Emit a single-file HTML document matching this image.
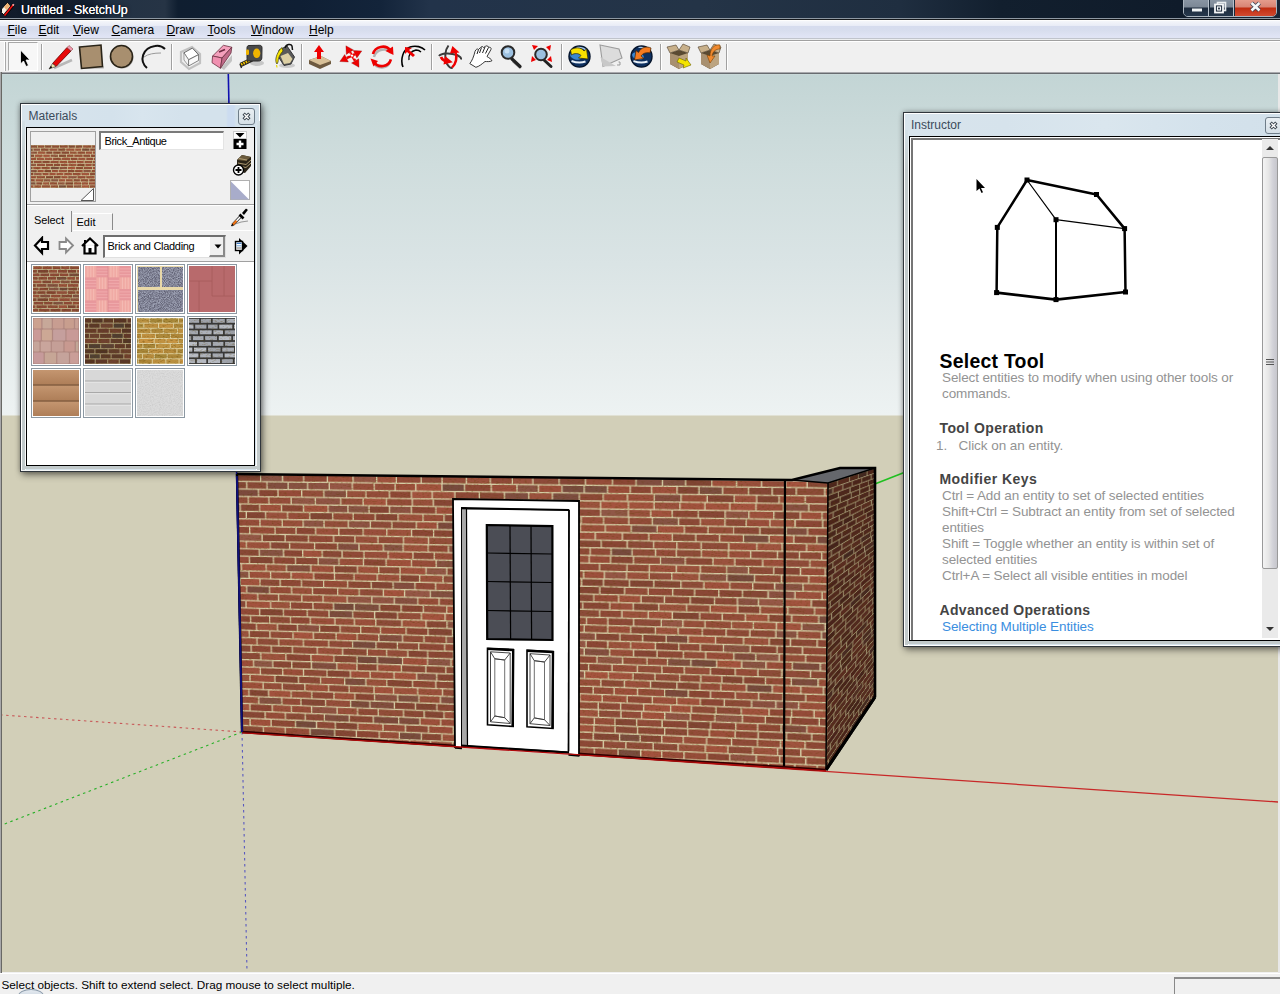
<!DOCTYPE html><html><head><meta charset="utf-8"><style>
*{box-sizing:border-box}
html,body{margin:0;padding:0}
body{width:1280px;height:994px;overflow:hidden;position:relative;background:#f0f0f0;font-family:"Liberation Sans",sans-serif;font-size:12px;color:#000}
.a{position:absolute}
#title{left:0;top:0;width:1280px;height:18px;background:linear-gradient(90deg,#111b2a 0px,#141f30 90px,#233244 112px,#263445 165px,#0f1e30 178px,#0f1f34 300px,#13243a 380px,#22334a 430px,#243447 700px,#1f2e40 900px,#121f2e 1000px,#0f1b2a 1180px,#1a2636 1280px)}
#title .t{left:21px;top:2.5px;font-size:12.4px;color:#fff;text-shadow:0 0 0.6px #fff,0 0 4px rgba(0,0,0,0.8)}
#tline1{left:0;top:18px;width:1280px;height:1px;background:#8e98a2}
#tline2{left:0;top:19px;width:1280px;height:1px;background:#16191c}
#menu{left:0;top:20px;width:1280px;height:18px;background:linear-gradient(#fdfdfd 0px,#fdfdfd 1px,#f4f6fa 1px,#e8ebf6 6px,#d6dcee 6.5px,#d8deee 11px,#dfe3f4 16px,#e0e4f4 18px)}
#menu span{position:absolute;top:3px;font-size:12px;color:#000}
#menu span u{text-decoration:underline;text-underline-offset:0.5px;text-decoration-thickness:1px}
#mline{left:0;top:38px;width:1280px;height:1px;background:#c0c4cc}
#mline2{left:0;top:39px;width:1280px;height:1px;background:#eceef0}
#mline3{left:0;top:40px;width:1280px;height:1px;background:#a0a0a0}
#toolbar{left:0;top:41px;width:1280px;height:31px;background:#f0f0f0;border-top:1px solid #fff}
#vpline{left:0;top:72px;width:1280px;height:2px;background:linear-gradient(#a9a9ad 0px,#a9a9ad 1px,#686c70 1px)}
#vpleft{left:0;top:72px;width:2px;height:901px;background:linear-gradient(90deg,#a8a8aa 0px,#a8a8aa 1px,#686864 1px)}
#vp{left:2px;top:74px;width:1276px;height:898px;background:linear-gradient(#d0dcdc 0px,#c3d5d5 1px,#cfdddd 90px,#dae4e5 190px,#e6ecec 280px,#edf2f2 340px,#eef2f0 341px,#d2cfb8 342px,#d2cfb8 898px)}
#vpright{left:1278px;top:74px;width:2px;height:899px;background:#e8e8e8}
#status{left:0;top:973px;width:1280px;height:21px;background:#f0f0f0;border-top:1px solid #fff}
#status .t{left:1.5px;top:4px;font-size:11.75px;color:#000}
#sbox{left:1174px;top:977px;width:106px;height:17px;border-left:1px solid #888;border-top:2px solid #8c8c8c}
</style></head><body>
<svg width="0" height="0" style="position:absolute"><defs><filter id="nzd" x="0" y="0" width="100%" height="100%"><feTurbulence type="fractalNoise" baseFrequency="0.9" numOctaves="2" seed="5"/><feColorMatrix values="0 0 0 0 0  0 0 0 0 0  0 0 0 0 0  1.1 0 0 0 -0.45"/></filter><filter id="nzl" x="0" y="0" width="100%" height="100%"><feTurbulence type="fractalNoise" baseFrequency="0.7" numOctaves="2" seed="9"/><feColorMatrix values="0 0 0 0 1  0 0 0 0 1  0 0 0 0 1  0 1.1 0 0 -0.55"/></filter><filter id="nzs" x="0" y="0" width="100%" height="100%"><feTurbulence type="fractalNoise" baseFrequency="0.35 1.2" numOctaves="2" seed="2"/><feColorMatrix values="0 0 0 0 0.1  0 0 0 0 0.05  0 0 0 0 0  1.2 0 0 0 -0.6"/></filter></defs></svg><div id="title" class="a"><div class="t a">Untitled - SketchUp</div></div><div id="tline1" class="a"></div><div id="tline2" class="a"></div><div id="menu" class="a"><span style="left:7.5px"><u>F</u>ile</span><span style="left:38.5px"><u>E</u>dit</span><span style="left:73px"><u>V</u>iew</span><span style="left:111.5px"><u>C</u>amera</span><span style="left:166.5px"><u>D</u>raw</span><span style="left:207.5px"><u>T</u>ools</span><span style="left:251px"><u>W</u>indow</span><span style="left:309px"><u>H</u>elp</span></div><div id="mline" class="a"></div><div id="mline2" class="a"></div><div id="mline3" class="a"></div><div id="toolbar" class="a"></div><div id="vpline" class="a"></div><div id="vpleft" class="a"></div><div id="vp" class="a"></div><div id="vpright" class="a"></div><div id="status" class="a"><div class="t a">Select objects. Shift to extend select. Drag mouse to select multiple.</div></div><div id="sbox" class="a"></div><div class="a" style="left:18px;top:989px;width:26px;height:14px;border-radius:50%;border:1px solid #8898a8;background:linear-gradient(#e4eaf0,#c0ccd8)"></div><svg class="a" style="left:0;top:0" width="1280" height="994"><g stroke-width="1.1" fill="none"><line x1="242" y1="732" x2="2" y2="715" stroke="#c85858" stroke-dasharray="2.5,3.5"/><line x1="242" y1="732" x2="2" y2="825" stroke="#28b028" stroke-dasharray="2.5,3.5"/><line x1="242" y1="732" x2="247" y2="972" stroke="#5858c0" stroke-dasharray="2.5,3.5"/><line x1="242" y1="732" x2="1278" y2="802" stroke="#c82828" stroke-width="1.3"/><line x1="242" y1="732" x2="1278" y2="326" stroke="#20c020" stroke-width="1.6"/><line x1="242" y1="732" x2="228.3" y2="74" stroke="#1010b0" stroke-width="1.6"/></g></svg><div class="a" style="left:0;top:0;width:1280px;height:994px;clip-path:polygon(236px 473px,829px 482px,827px 771px,241px 733px)"><div class="a" style="left:0;top:0;width:600px;height:324px;transform-origin:0 0;transform:matrix3d(0.88887979,-0.04572186,0,-0.00011608721,0.027044687,0.91930815,0,4.0509538e-05,0,0,1,0,237,474,0,1)"><svg width="600" height="324" style="position:absolute;left:0;top:0;display:block"><rect width="600" height="324" fill="#d6cea6"/><rect x="-24.7" y="0.7" width="23.0" height="6.9" fill="#a0513e"/><rect x="-0.2" y="0.7" width="25.2" height="6.9" fill="#894837"/><rect x="26.3" y="0.7" width="22.4" height="6.9" fill="#885244"/><rect x="50.2" y="0.7" width="21.2" height="6.9" fill="#8b4636"/><rect x="72.7" y="0.7" width="24.0" height="6.9" fill="#8b4535"/><rect x="98.1" y="0.7" width="25.9" height="6.9" fill="#9e4f3c"/><rect x="125.5" y="0.7" width="23.5" height="6.9" fill="#955646"/><rect x="150.4" y="0.7" width="19.3" height="6.9" fill="#a0533f"/><rect x="171.0" y="0.7" width="24.6" height="6.9" fill="#924a39"/><rect x="197.0" y="0.7" width="20.4" height="6.9" fill="#8c4938"/><rect x="218.8" y="0.7" width="23.8" height="6.9" fill="#934c3a"/><rect x="244.0" y="0.7" width="23.0" height="6.9" fill="#9c523e"/><rect x="268.4" y="0.7" width="21.3" height="6.9" fill="#904938"/><rect x="291.0" y="0.7" width="19.5" height="6.9" fill="#9a513e"/><rect x="311.9" y="0.7" width="25.1" height="6.9" fill="#8e4b3a"/><rect x="338.4" y="0.7" width="25.1" height="6.9" fill="#844535"/><rect x="364.9" y="0.7" width="25.6" height="6.9" fill="#964c3a"/><rect x="391.9" y="0.7" width="21.9" height="6.9" fill="#8c4636"/><rect x="415.2" y="0.7" width="24.6" height="6.9" fill="#804d40"/><rect x="441.2" y="0.7" width="21.4" height="6.9" fill="#815042"/><rect x="464.0" y="0.7" width="24.1" height="6.9" fill="#814535"/><rect x="489.4" y="0.7" width="22.5" height="6.9" fill="#9e4f3c"/><rect x="513.4" y="0.7" width="22.7" height="6.9" fill="#9a503d"/><rect x="537.4" y="0.7" width="21.8" height="6.9" fill="#934b3a"/><rect x="560.6" y="0.7" width="19.0" height="6.9" fill="#a5533f"/><rect x="581.0" y="0.7" width="25.4" height="6.9" fill="#894837"/><rect x="-13.9" y="9.0" width="23.6" height="6.9" fill="#844636"/><rect x="11.2" y="9.0" width="20.5" height="6.9" fill="#894938"/><rect x="33.1" y="9.0" width="21.4" height="6.9" fill="#824e40"/><rect x="55.9" y="9.0" width="19.6" height="6.9" fill="#885243"/><rect x="76.9" y="9.0" width="21.7" height="6.9" fill="#8d5244"/><rect x="100.0" y="9.0" width="23.2" height="6.9" fill="#965646"/><rect x="124.6" y="9.0" width="21.8" height="6.9" fill="#974f3c"/><rect x="147.8" y="9.0" width="20.6" height="6.9" fill="#974e3c"/><rect x="169.8" y="9.0" width="20.1" height="6.9" fill="#9d4f3c"/><rect x="191.4" y="9.0" width="25.8" height="6.9" fill="#a4533f"/><rect x="218.6" y="9.0" width="22.0" height="6.9" fill="#774a3e"/><rect x="242.0" y="9.0" width="25.9" height="6.9" fill="#8e4938"/><rect x="269.4" y="9.0" width="24.9" height="6.9" fill="#9b4e3c"/><rect x="295.7" y="9.0" width="20.3" height="6.9" fill="#8b5445"/><rect x="317.4" y="9.0" width="22.5" height="6.9" fill="#9e4f3c"/><rect x="341.2" y="9.0" width="21.0" height="6.9" fill="#794c3f"/><rect x="363.6" y="9.0" width="22.0" height="6.9" fill="#7a4d40"/><rect x="387.0" y="9.0" width="21.0" height="6.9" fill="#9a4d3a"/><rect x="409.4" y="9.0" width="19.7" height="6.9" fill="#8c4736"/><rect x="430.5" y="9.0" width="23.7" height="6.9" fill="#9f503d"/><rect x="455.6" y="9.0" width="20.0" height="6.9" fill="#824535"/><rect x="477.0" y="9.0" width="21.6" height="6.9" fill="#7c4e40"/><rect x="500.0" y="9.0" width="23.6" height="6.9" fill="#914c3a"/><rect x="525.0" y="9.0" width="21.3" height="6.9" fill="#844636"/><rect x="547.7" y="9.0" width="21.6" height="6.9" fill="#844535"/><rect x="570.7" y="9.0" width="25.6" height="6.9" fill="#8d4b39"/><rect x="597.7" y="9.0" width="25.5" height="6.9" fill="#a2533f"/><rect x="-23.4" y="17.3" width="22.6" height="6.9" fill="#8a4535"/><rect x="0.6" y="17.3" width="21.7" height="6.9" fill="#7c493d"/><rect x="23.7" y="17.3" width="19.7" height="6.9" fill="#884636"/><rect x="44.8" y="17.3" width="24.2" height="6.9" fill="#964b3a"/><rect x="70.4" y="17.3" width="22.3" height="6.9" fill="#934d3b"/><rect x="94.2" y="17.3" width="22.7" height="6.9" fill="#854e40"/><rect x="118.3" y="17.3" width="19.2" height="6.9" fill="#98503d"/><rect x="138.8" y="17.3" width="23.4" height="6.9" fill="#944c3a"/><rect x="163.7" y="17.3" width="21.6" height="6.9" fill="#8e4736"/><rect x="186.7" y="17.3" width="20.2" height="6.9" fill="#a2533f"/><rect x="208.3" y="17.3" width="22.2" height="6.9" fill="#a0533f"/><rect x="231.9" y="17.3" width="23.8" height="6.9" fill="#8d4837"/><rect x="257.1" y="17.3" width="24.4" height="6.9" fill="#8a4837"/><rect x="282.9" y="17.3" width="23.2" height="6.9" fill="#804e41"/><rect x="307.5" y="17.3" width="22.6" height="6.9" fill="#9b523e"/><rect x="331.5" y="17.3" width="25.8" height="6.9" fill="#7d4d40"/><rect x="358.7" y="17.3" width="22.4" height="6.9" fill="#8d4837"/><rect x="382.5" y="17.3" width="22.7" height="6.9" fill="#9b4f3c"/><rect x="406.7" y="17.3" width="25.1" height="6.9" fill="#9b4e3c"/><rect x="433.1" y="17.3" width="25.0" height="6.9" fill="#844d40"/><rect x="459.5" y="17.3" width="24.1" height="6.9" fill="#984e3b"/><rect x="485.0" y="17.3" width="24.7" height="6.9" fill="#834535"/><rect x="511.1" y="17.3" width="20.4" height="6.9" fill="#9d513e"/><rect x="532.9" y="17.3" width="20.0" height="6.9" fill="#834535"/><rect x="554.3" y="17.3" width="23.5" height="6.9" fill="#9a4f3c"/><rect x="579.2" y="17.3" width="23.9" height="6.9" fill="#8e4837"/><rect x="-13.4" y="25.6" width="24.4" height="6.9" fill="#924d3b"/><rect x="12.4" y="25.6" width="21.0" height="6.9" fill="#944b39"/><rect x="34.8" y="25.6" width="22.7" height="6.9" fill="#964e3c"/><rect x="58.9" y="25.6" width="24.7" height="6.9" fill="#925747"/><rect x="85.0" y="25.6" width="25.7" height="6.9" fill="#905445"/><rect x="112.1" y="25.6" width="22.3" height="6.9" fill="#954f3c"/><rect x="135.8" y="25.6" width="23.1" height="6.9" fill="#a5533f"/><rect x="160.3" y="25.6" width="25.8" height="6.9" fill="#944c3a"/><rect x="187.5" y="25.6" width="20.5" height="6.9" fill="#99503d"/><rect x="209.4" y="25.6" width="25.5" height="6.9" fill="#874636"/><rect x="236.2" y="25.6" width="24.7" height="6.9" fill="#8f4a39"/><rect x="262.3" y="25.6" width="25.2" height="6.9" fill="#864f41"/><rect x="288.9" y="25.6" width="22.2" height="6.9" fill="#984d3b"/><rect x="312.5" y="25.6" width="22.5" height="6.9" fill="#844535"/><rect x="336.4" y="25.6" width="19.5" height="6.9" fill="#9a523e"/><rect x="357.2" y="25.6" width="21.4" height="6.9" fill="#9c523e"/><rect x="380.0" y="25.6" width="26.2" height="6.9" fill="#a5533f"/><rect x="407.6" y="25.6" width="24.0" height="6.9" fill="#a4533f"/><rect x="433.0" y="25.6" width="24.0" height="6.9" fill="#9c513e"/><rect x="458.4" y="25.6" width="23.0" height="6.9" fill="#a3523e"/><rect x="482.8" y="25.6" width="22.8" height="6.9" fill="#a3523e"/><rect x="507.0" y="25.6" width="23.8" height="6.9" fill="#a5533f"/><rect x="532.2" y="25.6" width="25.1" height="6.9" fill="#9a4d3b"/><rect x="558.7" y="25.6" width="22.6" height="6.9" fill="#885042"/><rect x="582.7" y="25.6" width="19.0" height="6.9" fill="#8d4b3a"/><rect x="-23.4" y="33.9" width="25.6" height="6.9" fill="#8d5143"/><rect x="3.6" y="33.9" width="19.7" height="6.9" fill="#874837"/><rect x="24.6" y="33.9" width="22.3" height="6.9" fill="#a0523e"/><rect x="48.3" y="33.9" width="22.4" height="6.9" fill="#8a4736"/><rect x="72.2" y="33.9" width="24.9" height="6.9" fill="#a4533f"/><rect x="98.4" y="33.9" width="19.8" height="6.9" fill="#895042"/><rect x="119.6" y="33.9" width="20.9" height="6.9" fill="#895445"/><rect x="141.9" y="33.9" width="20.1" height="6.9" fill="#854535"/><rect x="163.4" y="33.9" width="21.6" height="6.9" fill="#8d5244"/><rect x="186.4" y="33.9" width="24.3" height="6.9" fill="#8c4636"/><rect x="212.0" y="33.9" width="24.2" height="6.9" fill="#9f503d"/><rect x="237.6" y="33.9" width="19.2" height="6.9" fill="#9b4f3c"/><rect x="258.2" y="33.9" width="23.4" height="6.9" fill="#954d3b"/><rect x="283.0" y="33.9" width="22.8" height="6.9" fill="#8f4837"/><rect x="307.2" y="33.9" width="22.9" height="6.9" fill="#954e3b"/><rect x="331.5" y="33.9" width="24.3" height="6.9" fill="#9f523e"/><rect x="357.3" y="33.9" width="21.3" height="6.9" fill="#8e4a39"/><rect x="380.0" y="33.9" width="26.2" height="6.9" fill="#905747"/><rect x="407.5" y="33.9" width="20.7" height="6.9" fill="#99503d"/><rect x="429.7" y="33.9" width="19.7" height="6.9" fill="#a1523e"/><rect x="450.8" y="33.9" width="24.1" height="6.9" fill="#8d4837"/><rect x="476.2" y="33.9" width="24.8" height="6.9" fill="#874636"/><rect x="502.4" y="33.9" width="21.6" height="6.9" fill="#925646"/><rect x="525.4" y="33.9" width="22.6" height="6.9" fill="#9e513e"/><rect x="549.4" y="33.9" width="23.9" height="6.9" fill="#884837"/><rect x="574.7" y="33.9" width="19.2" height="6.9" fill="#a1513e"/><rect x="595.3" y="33.9" width="25.5" height="6.9" fill="#924c3a"/><rect x="-11.6" y="42.2" width="20.2" height="6.9" fill="#8a4837"/><rect x="10.0" y="42.2" width="19.7" height="6.9" fill="#844535"/><rect x="31.1" y="42.2" width="22.3" height="6.9" fill="#9a513e"/><rect x="54.8" y="42.2" width="22.4" height="6.9" fill="#964d3a"/><rect x="78.6" y="42.2" width="23.3" height="6.9" fill="#814535"/><rect x="103.3" y="42.2" width="20.3" height="6.9" fill="#944c3a"/><rect x="125.0" y="42.2" width="21.9" height="6.9" fill="#904837"/><rect x="148.3" y="42.2" width="22.7" height="6.9" fill="#864535"/><rect x="172.4" y="42.2" width="24.8" height="6.9" fill="#9d503d"/><rect x="198.6" y="42.2" width="20.4" height="6.9" fill="#984e3b"/><rect x="220.4" y="42.2" width="20.9" height="6.9" fill="#864636"/><rect x="242.6" y="42.2" width="21.9" height="6.9" fill="#a2533f"/><rect x="265.9" y="42.2" width="24.0" height="6.9" fill="#9f513e"/><rect x="291.3" y="42.2" width="21.9" height="6.9" fill="#8c5445"/><rect x="314.7" y="42.2" width="21.5" height="6.9" fill="#835042"/><rect x="337.5" y="42.2" width="21.6" height="6.9" fill="#905344"/><rect x="360.5" y="42.2" width="21.0" height="6.9" fill="#9a4f3c"/><rect x="382.8" y="42.2" width="23.8" height="6.9" fill="#954e3b"/><rect x="408.0" y="42.2" width="21.8" height="6.9" fill="#934c3a"/><rect x="431.2" y="42.2" width="24.5" height="6.9" fill="#855243"/><rect x="457.1" y="42.2" width="19.8" height="6.9" fill="#8c4938"/><rect x="478.3" y="42.2" width="22.6" height="6.9" fill="#9c513e"/><rect x="502.3" y="42.2" width="19.1" height="6.9" fill="#8d4938"/><rect x="522.8" y="42.2" width="21.5" height="6.9" fill="#9a4d3b"/><rect x="545.6" y="42.2" width="22.7" height="6.9" fill="#9d533f"/><rect x="569.8" y="42.2" width="24.8" height="6.9" fill="#8b4636"/><rect x="596.0" y="42.2" width="24.5" height="6.9" fill="#884535"/><rect x="-23.8" y="50.5" width="22.4" height="6.9" fill="#8d4837"/><rect x="0.0" y="50.5" width="23.3" height="6.9" fill="#954c3a"/><rect x="24.7" y="50.5" width="22.8" height="6.9" fill="#984e3c"/><rect x="48.9" y="50.5" width="21.1" height="6.9" fill="#994f3c"/><rect x="71.4" y="50.5" width="21.0" height="6.9" fill="#8d5445"/><rect x="93.8" y="50.5" width="24.6" height="6.9" fill="#934e3b"/><rect x="119.8" y="50.5" width="21.9" height="6.9" fill="#8e5344"/><rect x="143.1" y="50.5" width="21.3" height="6.9" fill="#8d4b3a"/><rect x="165.8" y="50.5" width="24.2" height="6.9" fill="#8c4a39"/><rect x="191.4" y="50.5" width="20.6" height="6.9" fill="#9f503d"/><rect x="213.4" y="50.5" width="24.4" height="6.9" fill="#7c493d"/><rect x="239.2" y="50.5" width="24.8" height="6.9" fill="#914c3a"/><rect x="265.5" y="50.5" width="24.9" height="6.9" fill="#875244"/><rect x="291.7" y="50.5" width="22.0" height="6.9" fill="#874636"/><rect x="315.2" y="50.5" width="21.6" height="6.9" fill="#864736"/><rect x="338.1" y="50.5" width="20.0" height="6.9" fill="#954c3a"/><rect x="359.5" y="50.5" width="23.6" height="6.9" fill="#9c4f3c"/><rect x="384.5" y="50.5" width="24.4" height="6.9" fill="#9d523e"/><rect x="410.3" y="50.5" width="24.3" height="6.9" fill="#814d40"/><rect x="436.0" y="50.5" width="25.4" height="6.9" fill="#a2523e"/><rect x="462.8" y="50.5" width="21.6" height="6.9" fill="#924938"/><rect x="485.8" y="50.5" width="23.1" height="6.9" fill="#964e3b"/><rect x="510.3" y="50.5" width="24.4" height="6.9" fill="#8a4837"/><rect x="536.1" y="50.5" width="23.7" height="6.9" fill="#874837"/><rect x="561.2" y="50.5" width="19.1" height="6.9" fill="#814d40"/><rect x="581.6" y="50.5" width="19.3" height="6.9" fill="#904938"/><rect x="-13.6" y="58.9" width="25.6" height="6.9" fill="#8e4837"/><rect x="13.4" y="58.9" width="26.1" height="6.9" fill="#974c3a"/><rect x="40.9" y="58.9" width="21.4" height="6.9" fill="#924c3a"/><rect x="63.7" y="58.9" width="19.5" height="6.9" fill="#8b4636"/><rect x="84.6" y="58.9" width="23.5" height="6.9" fill="#9c513e"/><rect x="109.5" y="58.9" width="24.4" height="6.9" fill="#8f4b3a"/><rect x="135.3" y="58.9" width="23.7" height="6.9" fill="#994e3c"/><rect x="160.4" y="58.9" width="24.5" height="6.9" fill="#9d523e"/><rect x="186.3" y="58.9" width="21.7" height="6.9" fill="#8b4636"/><rect x="209.3" y="58.9" width="19.6" height="6.9" fill="#894636"/><rect x="230.3" y="58.9" width="22.5" height="6.9" fill="#9d4f3c"/><rect x="254.2" y="58.9" width="24.6" height="6.9" fill="#874636"/><rect x="280.2" y="58.9" width="23.8" height="6.9" fill="#874636"/><rect x="305.4" y="58.9" width="24.5" height="6.9" fill="#8f4a39"/><rect x="331.3" y="58.9" width="20.6" height="6.9" fill="#9b4f3c"/><rect x="353.2" y="58.9" width="19.8" height="6.9" fill="#9e503d"/><rect x="374.5" y="58.9" width="25.6" height="6.9" fill="#9a4f3c"/><rect x="401.5" y="58.9" width="24.8" height="6.9" fill="#914a38"/><rect x="427.7" y="58.9" width="21.9" height="6.9" fill="#a0503d"/><rect x="450.9" y="58.9" width="21.6" height="6.9" fill="#8c4b39"/><rect x="473.9" y="58.9" width="21.8" height="6.9" fill="#904b3a"/><rect x="497.2" y="58.9" width="21.7" height="6.9" fill="#954b3a"/><rect x="520.2" y="58.9" width="23.3" height="6.9" fill="#7a4c3f"/><rect x="544.9" y="58.9" width="22.3" height="6.9" fill="#a0533f"/><rect x="568.6" y="58.9" width="20.6" height="6.9" fill="#8a4535"/><rect x="590.6" y="58.9" width="21.1" height="6.9" fill="#79493d"/><rect x="-24.9" y="67.2" width="24.7" height="6.9" fill="#7a4a3e"/><rect x="1.1" y="67.2" width="24.3" height="6.9" fill="#945747"/><rect x="26.8" y="67.2" width="23.6" height="6.9" fill="#864736"/><rect x="51.8" y="67.2" width="23.7" height="6.9" fill="#8b4938"/><rect x="76.9" y="67.2" width="25.5" height="6.9" fill="#924a39"/><rect x="103.8" y="67.2" width="21.4" height="6.9" fill="#8d4a39"/><rect x="126.6" y="67.2" width="22.9" height="6.9" fill="#99503d"/><rect x="150.9" y="67.2" width="25.6" height="6.9" fill="#934c3a"/><rect x="177.9" y="67.2" width="24.8" height="6.9" fill="#9c523e"/><rect x="204.1" y="67.2" width="25.9" height="6.9" fill="#954f3c"/><rect x="231.4" y="67.2" width="24.1" height="6.9" fill="#9b523e"/><rect x="256.9" y="67.2" width="22.0" height="6.9" fill="#884736"/><rect x="280.3" y="67.2" width="26.1" height="6.9" fill="#8f4b3a"/><rect x="307.9" y="67.2" width="21.8" height="6.9" fill="#954d3a"/><rect x="331.1" y="67.2" width="25.4" height="6.9" fill="#944c3a"/><rect x="357.9" y="67.2" width="21.2" height="6.9" fill="#874736"/><rect x="380.4" y="67.2" width="24.4" height="6.9" fill="#8a4535"/><rect x="406.3" y="67.2" width="24.8" height="6.9" fill="#8c4a39"/><rect x="432.4" y="67.2" width="21.6" height="6.9" fill="#964e3b"/><rect x="455.4" y="67.2" width="22.4" height="6.9" fill="#944d3a"/><rect x="479.2" y="67.2" width="25.4" height="6.9" fill="#8f4b3a"/><rect x="506.1" y="67.2" width="25.7" height="6.9" fill="#9d4f3c"/><rect x="533.2" y="67.2" width="23.0" height="6.9" fill="#a0533f"/><rect x="557.6" y="67.2" width="21.9" height="6.9" fill="#934a39"/><rect x="580.9" y="67.2" width="19.7" height="6.9" fill="#9f533f"/><rect x="-12.0" y="75.5" width="20.0" height="6.9" fill="#a0523e"/><rect x="9.4" y="75.5" width="24.7" height="6.9" fill="#9d513e"/><rect x="35.5" y="75.5" width="19.4" height="6.9" fill="#884938"/><rect x="56.4" y="75.5" width="25.5" height="6.9" fill="#924c3a"/><rect x="83.3" y="75.5" width="23.4" height="6.9" fill="#8c4837"/><rect x="108.0" y="75.5" width="21.3" height="6.9" fill="#834d40"/><rect x="130.8" y="75.5" width="24.3" height="6.9" fill="#984e3c"/><rect x="156.5" y="75.5" width="19.4" height="6.9" fill="#875243"/><rect x="177.3" y="75.5" width="24.9" height="6.9" fill="#9e533f"/><rect x="203.6" y="75.5" width="19.6" height="6.9" fill="#924938"/><rect x="224.6" y="75.5" width="19.7" height="6.9" fill="#895042"/><rect x="245.7" y="75.5" width="24.4" height="6.9" fill="#9a4d3b"/><rect x="271.5" y="75.5" width="24.7" height="6.9" fill="#914c3a"/><rect x="297.6" y="75.5" width="19.7" height="6.9" fill="#a2523e"/><rect x="318.6" y="75.5" width="22.9" height="6.9" fill="#984d3a"/><rect x="342.9" y="75.5" width="25.0" height="6.9" fill="#8f4a38"/><rect x="369.3" y="75.5" width="19.5" height="6.9" fill="#914a38"/><rect x="390.3" y="75.5" width="19.5" height="6.9" fill="#774a3e"/><rect x="411.1" y="75.5" width="21.8" height="6.9" fill="#904c3a"/><rect x="434.4" y="75.5" width="19.1" height="6.9" fill="#944b3a"/><rect x="454.9" y="75.5" width="23.1" height="6.9" fill="#8f4c3a"/><rect x="479.3" y="75.5" width="25.1" height="6.9" fill="#9b503d"/><rect x="505.8" y="75.5" width="20.1" height="6.9" fill="#9b4f3c"/><rect x="527.3" y="75.5" width="24.4" height="6.9" fill="#914a39"/><rect x="553.1" y="75.5" width="19.6" height="6.9" fill="#8a4837"/><rect x="574.1" y="75.5" width="19.8" height="6.9" fill="#8e4a38"/><rect x="595.3" y="75.5" width="24.2" height="6.9" fill="#924a39"/><rect x="-23.6" y="83.8" width="20.0" height="6.9" fill="#864636"/><rect x="-2.2" y="83.8" width="24.1" height="6.9" fill="#894837"/><rect x="23.3" y="83.8" width="25.0" height="6.9" fill="#865243"/><rect x="49.8" y="83.8" width="19.2" height="6.9" fill="#8a4636"/><rect x="70.4" y="83.8" width="19.5" height="6.9" fill="#a1523e"/><rect x="91.3" y="83.8" width="20.0" height="6.9" fill="#894837"/><rect x="112.7" y="83.8" width="21.8" height="6.9" fill="#914a39"/><rect x="135.9" y="83.8" width="24.2" height="6.9" fill="#994e3c"/><rect x="161.5" y="83.8" width="24.7" height="6.9" fill="#9f4f3c"/><rect x="187.6" y="83.8" width="20.9" height="6.9" fill="#8c4837"/><rect x="209.9" y="83.8" width="22.2" height="6.9" fill="#984d3b"/><rect x="233.5" y="83.8" width="21.4" height="6.9" fill="#8b4a38"/><rect x="256.3" y="83.8" width="20.1" height="6.9" fill="#a1513e"/><rect x="277.8" y="83.8" width="22.9" height="6.9" fill="#954b39"/><rect x="302.2" y="83.8" width="20.0" height="6.9" fill="#9a503d"/><rect x="323.6" y="83.8" width="22.7" height="6.9" fill="#9a503d"/><rect x="347.7" y="83.8" width="19.2" height="6.9" fill="#994f3c"/><rect x="368.3" y="83.8" width="20.0" height="6.9" fill="#994c3a"/><rect x="389.7" y="83.8" width="21.4" height="6.9" fill="#884636"/><rect x="412.5" y="83.8" width="25.4" height="6.9" fill="#914c3a"/><rect x="439.2" y="83.8" width="23.1" height="6.9" fill="#8c5143"/><rect x="463.7" y="83.8" width="25.6" height="6.9" fill="#8b4837"/><rect x="490.7" y="83.8" width="19.9" height="6.9" fill="#9b523e"/><rect x="512.0" y="83.8" width="25.5" height="6.9" fill="#914938"/><rect x="538.9" y="83.8" width="20.2" height="6.9" fill="#9c4e3c"/><rect x="560.4" y="83.8" width="22.3" height="6.9" fill="#8f4b3a"/><rect x="584.1" y="83.8" width="25.7" height="6.9" fill="#984f3c"/><rect x="-13.3" y="92.1" width="24.3" height="6.9" fill="#964b3a"/><rect x="12.4" y="92.1" width="24.8" height="6.9" fill="#834535"/><rect x="38.6" y="92.1" width="22.4" height="6.9" fill="#8d4736"/><rect x="62.4" y="92.1" width="23.1" height="6.9" fill="#8b4837"/><rect x="86.9" y="92.1" width="20.9" height="6.9" fill="#8a5243"/><rect x="109.2" y="92.1" width="24.6" height="6.9" fill="#9a503d"/><rect x="135.2" y="92.1" width="22.6" height="6.9" fill="#8b4636"/><rect x="159.2" y="92.1" width="25.5" height="6.9" fill="#a0503d"/><rect x="186.0" y="92.1" width="24.4" height="6.9" fill="#974c3a"/><rect x="211.8" y="92.1" width="25.2" height="6.9" fill="#865042"/><rect x="238.4" y="92.1" width="19.8" height="6.9" fill="#964d3a"/><rect x="259.6" y="92.1" width="22.1" height="6.9" fill="#9d533f"/><rect x="283.1" y="92.1" width="19.4" height="6.9" fill="#a1503d"/><rect x="303.9" y="92.1" width="24.3" height="6.9" fill="#994e3c"/><rect x="329.6" y="92.1" width="21.2" height="6.9" fill="#944e3b"/><rect x="352.2" y="92.1" width="25.1" height="6.9" fill="#904938"/><rect x="378.7" y="92.1" width="26.0" height="6.9" fill="#914c3a"/><rect x="406.1" y="92.1" width="20.7" height="6.9" fill="#904a38"/><rect x="428.2" y="92.1" width="25.3" height="6.9" fill="#9d503d"/><rect x="454.9" y="92.1" width="22.0" height="6.9" fill="#9c523e"/><rect x="478.4" y="92.1" width="24.4" height="6.9" fill="#944e3b"/><rect x="504.1" y="92.1" width="19.7" height="6.9" fill="#8e5646"/><rect x="525.3" y="92.1" width="22.9" height="6.9" fill="#8f4c3a"/><rect x="549.5" y="92.1" width="24.2" height="6.9" fill="#864535"/><rect x="575.2" y="92.1" width="22.2" height="6.9" fill="#974c3a"/><rect x="598.7" y="92.1" width="21.6" height="6.9" fill="#885243"/><rect x="-23.4" y="100.4" width="25.5" height="6.9" fill="#8f4a38"/><rect x="3.5" y="100.4" width="25.7" height="6.9" fill="#a0513e"/><rect x="30.6" y="100.4" width="20.5" height="6.9" fill="#9c533f"/><rect x="52.5" y="100.4" width="25.0" height="6.9" fill="#854f41"/><rect x="78.9" y="100.4" width="23.6" height="6.9" fill="#9f503d"/><rect x="103.9" y="100.4" width="23.6" height="6.9" fill="#874837"/><rect x="128.8" y="100.4" width="21.2" height="6.9" fill="#a0523e"/><rect x="151.4" y="100.4" width="21.0" height="6.9" fill="#904c3a"/><rect x="173.8" y="100.4" width="25.9" height="6.9" fill="#a0513e"/><rect x="201.1" y="100.4" width="20.2" height="6.9" fill="#925747"/><rect x="222.7" y="100.4" width="24.0" height="6.9" fill="#8b4938"/><rect x="248.1" y="100.4" width="22.6" height="6.9" fill="#8e4a38"/><rect x="272.1" y="100.4" width="23.8" height="6.9" fill="#9e533f"/><rect x="297.3" y="100.4" width="20.6" height="6.9" fill="#8c4a38"/><rect x="319.3" y="100.4" width="21.0" height="6.9" fill="#964f3c"/><rect x="341.7" y="100.4" width="19.5" height="6.9" fill="#924d3a"/><rect x="362.7" y="100.4" width="19.3" height="6.9" fill="#9d4e3c"/><rect x="383.4" y="100.4" width="20.8" height="6.9" fill="#955646"/><rect x="405.6" y="100.4" width="21.1" height="6.9" fill="#9c513e"/><rect x="428.0" y="100.4" width="21.0" height="6.9" fill="#924d3b"/><rect x="450.4" y="100.4" width="25.5" height="6.9" fill="#9d533f"/><rect x="477.3" y="100.4" width="25.6" height="6.9" fill="#8b5243"/><rect x="504.3" y="100.4" width="25.4" height="6.9" fill="#76493d"/><rect x="531.1" y="100.4" width="24.6" height="6.9" fill="#914b39"/><rect x="557.1" y="100.4" width="24.6" height="6.9" fill="#954d3a"/><rect x="583.2" y="100.4" width="25.1" height="6.9" fill="#9e4f3c"/><rect x="-12.9" y="108.7" width="23.3" height="6.9" fill="#8d5546"/><rect x="11.8" y="108.7" width="22.1" height="6.9" fill="#9d4f3c"/><rect x="35.3" y="108.7" width="20.8" height="6.9" fill="#9a503d"/><rect x="57.6" y="108.7" width="22.9" height="6.9" fill="#a5533f"/><rect x="81.9" y="108.7" width="20.9" height="6.9" fill="#904837"/><rect x="104.2" y="108.7" width="19.4" height="6.9" fill="#914c3a"/><rect x="124.9" y="108.7" width="23.4" height="6.9" fill="#9b4e3c"/><rect x="149.7" y="108.7" width="22.6" height="6.9" fill="#9c503d"/><rect x="173.7" y="108.7" width="19.2" height="6.9" fill="#864636"/><rect x="194.4" y="108.7" width="22.9" height="6.9" fill="#9d523e"/><rect x="218.7" y="108.7" width="19.4" height="6.9" fill="#8e4c3a"/><rect x="239.5" y="108.7" width="24.9" height="6.9" fill="#a0503d"/><rect x="265.8" y="108.7" width="24.5" height="6.9" fill="#914c3a"/><rect x="291.7" y="108.7" width="22.7" height="6.9" fill="#914b3a"/><rect x="315.8" y="108.7" width="22.6" height="6.9" fill="#9f4f3c"/><rect x="339.7" y="108.7" width="19.4" height="6.9" fill="#954c3a"/><rect x="360.6" y="108.7" width="20.6" height="6.9" fill="#844535"/><rect x="382.5" y="108.7" width="24.5" height="6.9" fill="#874736"/><rect x="408.4" y="108.7" width="22.8" height="6.9" fill="#824535"/><rect x="432.6" y="108.7" width="25.4" height="6.9" fill="#864736"/><rect x="459.4" y="108.7" width="21.1" height="6.9" fill="#8f4c3a"/><rect x="481.9" y="108.7" width="23.9" height="6.9" fill="#a0503d"/><rect x="507.2" y="108.7" width="20.8" height="6.9" fill="#954d3b"/><rect x="529.4" y="108.7" width="19.6" height="6.9" fill="#8d4938"/><rect x="550.5" y="108.7" width="25.8" height="6.9" fill="#895244"/><rect x="577.7" y="108.7" width="21.9" height="6.9" fill="#954f3c"/><rect x="-25.0" y="117.0" width="25.6" height="6.9" fill="#a6533f"/><rect x="2.0" y="117.0" width="20.3" height="6.9" fill="#a2533f"/><rect x="23.6" y="117.0" width="20.5" height="6.9" fill="#8d4b3a"/><rect x="45.6" y="117.0" width="21.5" height="6.9" fill="#8e4837"/><rect x="68.5" y="117.0" width="22.5" height="6.9" fill="#904b3a"/><rect x="92.3" y="117.0" width="24.5" height="6.9" fill="#974c3a"/><rect x="118.2" y="117.0" width="23.5" height="6.9" fill="#8d4837"/><rect x="143.1" y="117.0" width="21.8" height="6.9" fill="#834636"/><rect x="166.3" y="117.0" width="21.6" height="6.9" fill="#844d40"/><rect x="189.3" y="117.0" width="20.3" height="6.9" fill="#914938"/><rect x="211.0" y="117.0" width="25.6" height="6.9" fill="#9a503d"/><rect x="238.0" y="117.0" width="21.6" height="6.9" fill="#7c4b3e"/><rect x="261.0" y="117.0" width="20.7" height="6.9" fill="#8e5646"/><rect x="283.2" y="117.0" width="21.3" height="6.9" fill="#864f42"/><rect x="305.9" y="117.0" width="25.4" height="6.9" fill="#8f4a39"/><rect x="332.7" y="117.0" width="22.7" height="6.9" fill="#864535"/><rect x="356.8" y="117.0" width="20.7" height="6.9" fill="#854535"/><rect x="378.9" y="117.0" width="23.3" height="6.9" fill="#854535"/><rect x="403.6" y="117.0" width="22.1" height="6.9" fill="#944d3b"/><rect x="427.0" y="117.0" width="22.9" height="6.9" fill="#924a39"/><rect x="451.4" y="117.0" width="20.1" height="6.9" fill="#8b4837"/><rect x="472.9" y="117.0" width="22.2" height="6.9" fill="#8b4736"/><rect x="496.5" y="117.0" width="21.6" height="6.9" fill="#884636"/><rect x="519.4" y="117.0" width="23.4" height="6.9" fill="#854736"/><rect x="544.3" y="117.0" width="24.4" height="6.9" fill="#8b5042"/><rect x="570.0" y="117.0" width="24.5" height="6.9" fill="#9c503d"/><rect x="595.9" y="117.0" width="19.5" height="6.9" fill="#9f533f"/><rect x="-12.4" y="125.3" width="19.9" height="6.9" fill="#9e513e"/><rect x="8.9" y="125.3" width="23.6" height="6.9" fill="#7b4a3e"/><rect x="33.9" y="125.3" width="22.5" height="6.9" fill="#964c3a"/><rect x="57.8" y="125.3" width="21.0" height="6.9" fill="#9b503d"/><rect x="80.3" y="125.3" width="25.7" height="6.9" fill="#8e4837"/><rect x="107.3" y="125.3" width="21.5" height="6.9" fill="#9a503d"/><rect x="130.3" y="125.3" width="24.3" height="6.9" fill="#904c3a"/><rect x="156.0" y="125.3" width="20.9" height="6.9" fill="#a4533f"/><rect x="178.3" y="125.3" width="25.6" height="6.9" fill="#955747"/><rect x="205.2" y="125.3" width="25.5" height="6.9" fill="#834f42"/><rect x="232.2" y="125.3" width="22.6" height="6.9" fill="#974e3b"/><rect x="256.2" y="125.3" width="21.3" height="6.9" fill="#7c4d40"/><rect x="278.9" y="125.3" width="21.5" height="6.9" fill="#a2533f"/><rect x="301.8" y="125.3" width="20.9" height="6.9" fill="#984f3c"/><rect x="324.1" y="125.3" width="21.8" height="6.9" fill="#824e41"/><rect x="347.3" y="125.3" width="24.1" height="6.9" fill="#884837"/><rect x="372.7" y="125.3" width="23.5" height="6.9" fill="#974c3a"/><rect x="397.6" y="125.3" width="21.0" height="6.9" fill="#a2523e"/><rect x="420.0" y="125.3" width="21.7" height="6.9" fill="#8d4b3a"/><rect x="443.2" y="125.3" width="23.9" height="6.9" fill="#8d4938"/><rect x="468.5" y="125.3" width="22.4" height="6.9" fill="#834535"/><rect x="492.3" y="125.3" width="20.9" height="6.9" fill="#8c4938"/><rect x="514.6" y="125.3" width="19.0" height="6.9" fill="#8a5143"/><rect x="535.0" y="125.3" width="22.9" height="6.9" fill="#965747"/><rect x="559.4" y="125.3" width="24.9" height="6.9" fill="#a2533f"/><rect x="585.7" y="125.3" width="19.7" height="6.9" fill="#864535"/><rect x="-23.9" y="133.6" width="21.9" height="6.9" fill="#894837"/><rect x="-0.7" y="133.6" width="20.1" height="6.9" fill="#9b4e3c"/><rect x="20.9" y="133.6" width="21.1" height="6.9" fill="#924c3a"/><rect x="43.4" y="133.6" width="23.8" height="6.9" fill="#934c3a"/><rect x="68.6" y="133.6" width="21.6" height="6.9" fill="#99503d"/><rect x="91.6" y="133.6" width="24.3" height="6.9" fill="#9e533f"/><rect x="117.3" y="133.6" width="24.9" height="6.9" fill="#935747"/><rect x="143.6" y="133.6" width="22.3" height="6.9" fill="#925546"/><rect x="167.3" y="133.6" width="23.5" height="6.9" fill="#875042"/><rect x="192.1" y="133.6" width="20.8" height="6.9" fill="#974d3a"/><rect x="214.4" y="133.6" width="23.6" height="6.9" fill="#914b39"/><rect x="239.3" y="133.6" width="25.2" height="6.9" fill="#904837"/><rect x="265.9" y="133.6" width="23.1" height="6.9" fill="#904c3a"/><rect x="290.4" y="133.6" width="25.0" height="6.9" fill="#8e5646"/><rect x="316.8" y="133.6" width="21.7" height="6.9" fill="#9a4f3c"/><rect x="339.9" y="133.6" width="20.3" height="6.9" fill="#884535"/><rect x="361.6" y="133.6" width="25.8" height="6.9" fill="#894736"/><rect x="388.8" y="133.6" width="22.0" height="6.9" fill="#9b4f3c"/><rect x="412.2" y="133.6" width="23.9" height="6.9" fill="#854736"/><rect x="437.5" y="133.6" width="26.2" height="6.9" fill="#9c533f"/><rect x="465.1" y="133.6" width="21.6" height="6.9" fill="#934d3b"/><rect x="488.0" y="133.6" width="25.5" height="6.9" fill="#a3523e"/><rect x="515.0" y="133.6" width="20.2" height="6.9" fill="#874636"/><rect x="536.6" y="133.6" width="25.3" height="6.9" fill="#994f3c"/><rect x="563.3" y="133.6" width="24.2" height="6.9" fill="#904c3a"/><rect x="588.8" y="133.6" width="21.8" height="6.9" fill="#9a503d"/><rect x="-13.7" y="141.9" width="20.1" height="6.9" fill="#874837"/><rect x="7.8" y="141.9" width="25.5" height="6.9" fill="#a4533f"/><rect x="34.6" y="141.9" width="20.1" height="6.9" fill="#9d533f"/><rect x="56.1" y="141.9" width="23.1" height="6.9" fill="#8f4938"/><rect x="80.6" y="141.9" width="20.6" height="6.9" fill="#934c3a"/><rect x="102.6" y="141.9" width="20.9" height="6.9" fill="#76493d"/><rect x="124.9" y="141.9" width="25.4" height="6.9" fill="#7d4e40"/><rect x="151.7" y="141.9" width="21.4" height="6.9" fill="#884736"/><rect x="174.6" y="141.9" width="21.9" height="6.9" fill="#884535"/><rect x="197.9" y="141.9" width="23.0" height="6.9" fill="#924d3b"/><rect x="222.3" y="141.9" width="23.4" height="6.9" fill="#a4523e"/><rect x="247.2" y="141.9" width="20.4" height="6.9" fill="#8d4a38"/><rect x="268.9" y="141.9" width="22.2" height="6.9" fill="#9b523e"/><rect x="292.5" y="141.9" width="19.2" height="6.9" fill="#804c3f"/><rect x="313.1" y="141.9" width="19.5" height="6.9" fill="#8c4b39"/><rect x="334.1" y="141.9" width="21.2" height="6.9" fill="#8a5142"/><rect x="356.7" y="141.9" width="20.5" height="6.9" fill="#8c4b39"/><rect x="378.6" y="141.9" width="20.9" height="6.9" fill="#8f4938"/><rect x="400.9" y="141.9" width="24.8" height="6.9" fill="#9c523e"/><rect x="427.1" y="141.9" width="22.5" height="6.9" fill="#a1523e"/><rect x="451.0" y="141.9" width="25.5" height="6.9" fill="#814535"/><rect x="477.9" y="141.9" width="20.6" height="6.9" fill="#924b3a"/><rect x="499.9" y="141.9" width="21.0" height="6.9" fill="#934b39"/><rect x="522.3" y="141.9" width="21.0" height="6.9" fill="#a2533f"/><rect x="544.7" y="141.9" width="20.9" height="6.9" fill="#894837"/><rect x="567.1" y="141.9" width="24.4" height="6.9" fill="#964d3b"/><rect x="592.8" y="141.9" width="20.3" height="6.9" fill="#784a3e"/><rect x="-24.4" y="150.2" width="22.1" height="6.9" fill="#874535"/><rect x="-0.8" y="150.2" width="21.9" height="6.9" fill="#934a39"/><rect x="22.5" y="150.2" width="24.5" height="6.9" fill="#834535"/><rect x="48.3" y="150.2" width="24.4" height="6.9" fill="#8d4636"/><rect x="74.2" y="150.2" width="22.1" height="6.9" fill="#8f4938"/><rect x="97.7" y="150.2" width="24.1" height="6.9" fill="#7c4c3f"/><rect x="123.1" y="150.2" width="21.8" height="6.9" fill="#8d4a39"/><rect x="146.4" y="150.2" width="22.8" height="6.9" fill="#834535"/><rect x="170.5" y="150.2" width="23.8" height="6.9" fill="#954f3c"/><rect x="195.7" y="150.2" width="23.4" height="6.9" fill="#a4533f"/><rect x="220.5" y="150.2" width="23.5" height="6.9" fill="#9a4d3a"/><rect x="245.5" y="150.2" width="19.9" height="6.9" fill="#9f503d"/><rect x="266.7" y="150.2" width="22.4" height="6.9" fill="#a1523e"/><rect x="290.5" y="150.2" width="21.7" height="6.9" fill="#8d5143"/><rect x="313.6" y="150.2" width="25.6" height="6.9" fill="#984d3a"/><rect x="340.6" y="150.2" width="23.3" height="6.9" fill="#944e3c"/><rect x="365.3" y="150.2" width="20.1" height="6.9" fill="#944c3a"/><rect x="386.8" y="150.2" width="24.3" height="6.9" fill="#8e4a39"/><rect x="412.5" y="150.2" width="26.1" height="6.9" fill="#8d4b3a"/><rect x="440.0" y="150.2" width="19.9" height="6.9" fill="#965747"/><rect x="461.4" y="150.2" width="20.3" height="6.9" fill="#974f3c"/><rect x="483.1" y="150.2" width="24.7" height="6.9" fill="#954d3a"/><rect x="509.2" y="150.2" width="19.5" height="6.9" fill="#9c533f"/><rect x="530.1" y="150.2" width="20.8" height="6.9" fill="#9f523e"/><rect x="552.3" y="150.2" width="22.9" height="6.9" fill="#a2533f"/><rect x="576.6" y="150.2" width="21.0" height="6.9" fill="#8a5344"/><rect x="599.0" y="150.2" width="23.0" height="6.9" fill="#a1523e"/><rect x="-11.5" y="158.5" width="22.6" height="6.9" fill="#8a4535"/><rect x="12.5" y="158.5" width="19.5" height="6.9" fill="#8a4736"/><rect x="33.3" y="158.5" width="21.4" height="6.9" fill="#8f4b39"/><rect x="56.1" y="158.5" width="19.8" height="6.9" fill="#8f4837"/><rect x="77.4" y="158.5" width="25.1" height="6.9" fill="#9b4e3c"/><rect x="103.9" y="158.5" width="19.5" height="6.9" fill="#984f3c"/><rect x="124.8" y="158.5" width="21.3" height="6.9" fill="#9b503d"/><rect x="147.5" y="158.5" width="26.2" height="6.9" fill="#8d4b3a"/><rect x="175.1" y="158.5" width="24.0" height="6.9" fill="#a0533f"/><rect x="200.5" y="158.5" width="20.5" height="6.9" fill="#894837"/><rect x="222.4" y="158.5" width="20.2" height="6.9" fill="#8c5243"/><rect x="244.0" y="158.5" width="21.0" height="6.9" fill="#8e4938"/><rect x="266.4" y="158.5" width="21.6" height="6.9" fill="#874837"/><rect x="289.4" y="158.5" width="24.0" height="6.9" fill="#9d503d"/><rect x="314.8" y="158.5" width="24.5" height="6.9" fill="#7b4c3f"/><rect x="340.7" y="158.5" width="20.9" height="6.9" fill="#954b39"/><rect x="363.0" y="158.5" width="22.3" height="6.9" fill="#924d3a"/><rect x="386.7" y="158.5" width="21.5" height="6.9" fill="#9d503d"/><rect x="409.6" y="158.5" width="23.2" height="6.9" fill="#8b4a38"/><rect x="434.2" y="158.5" width="21.1" height="6.9" fill="#9d533f"/><rect x="456.7" y="158.5" width="22.3" height="6.9" fill="#964c3a"/><rect x="480.3" y="158.5" width="22.0" height="6.9" fill="#8f4938"/><rect x="503.7" y="158.5" width="21.6" height="6.9" fill="#8f4a39"/><rect x="526.8" y="158.5" width="23.7" height="6.9" fill="#8d4938"/><rect x="551.9" y="158.5" width="19.1" height="6.9" fill="#895244"/><rect x="572.4" y="158.5" width="21.7" height="6.9" fill="#974e3b"/><rect x="595.5" y="158.5" width="21.0" height="6.9" fill="#7f4a3e"/><rect x="-25.3" y="166.9" width="22.3" height="6.9" fill="#884837"/><rect x="-1.6" y="166.9" width="19.1" height="6.9" fill="#8a4535"/><rect x="18.9" y="166.9" width="21.5" height="6.9" fill="#9d533f"/><rect x="41.8" y="166.9" width="20.1" height="6.9" fill="#884636"/><rect x="63.3" y="166.9" width="22.6" height="6.9" fill="#8b5042"/><rect x="87.3" y="166.9" width="20.6" height="6.9" fill="#874535"/><rect x="109.3" y="166.9" width="20.7" height="6.9" fill="#934d3b"/><rect x="131.4" y="166.9" width="19.5" height="6.9" fill="#954c3a"/><rect x="152.3" y="166.9" width="25.7" height="6.9" fill="#9a4d3a"/><rect x="179.4" y="166.9" width="21.7" height="6.9" fill="#8d4736"/><rect x="202.5" y="166.9" width="24.3" height="6.9" fill="#834636"/><rect x="228.2" y="166.9" width="23.7" height="6.9" fill="#984e3c"/><rect x="253.3" y="166.9" width="26.0" height="6.9" fill="#914c3a"/><rect x="280.7" y="166.9" width="20.1" height="6.9" fill="#914b39"/><rect x="302.2" y="166.9" width="25.4" height="6.9" fill="#824535"/><rect x="329.0" y="166.9" width="22.9" height="6.9" fill="#934d3b"/><rect x="353.3" y="166.9" width="19.7" height="6.9" fill="#8c5142"/><rect x="374.4" y="166.9" width="23.1" height="6.9" fill="#864736"/><rect x="398.8" y="166.9" width="21.2" height="6.9" fill="#8f4b39"/><rect x="421.5" y="166.9" width="22.0" height="6.9" fill="#854535"/><rect x="444.8" y="166.9" width="20.2" height="6.9" fill="#7d4a3e"/><rect x="466.5" y="166.9" width="25.5" height="6.9" fill="#a2523e"/><rect x="493.3" y="166.9" width="26.0" height="6.9" fill="#934d3a"/><rect x="520.7" y="166.9" width="23.4" height="6.9" fill="#9d533f"/><rect x="545.5" y="166.9" width="19.1" height="6.9" fill="#864736"/><rect x="566.0" y="166.9" width="24.1" height="6.9" fill="#8a4837"/><rect x="591.5" y="166.9" width="19.2" height="6.9" fill="#8b4636"/><rect x="-14.2" y="175.2" width="23.6" height="6.9" fill="#9c533f"/><rect x="10.8" y="175.2" width="21.2" height="6.9" fill="#8b4837"/><rect x="33.4" y="175.2" width="23.7" height="6.9" fill="#934c3a"/><rect x="58.5" y="175.2" width="20.5" height="6.9" fill="#a5533f"/><rect x="80.4" y="175.2" width="23.1" height="6.9" fill="#924d3a"/><rect x="104.9" y="175.2" width="21.2" height="6.9" fill="#a1503d"/><rect x="127.4" y="175.2" width="21.6" height="6.9" fill="#954c3a"/><rect x="150.5" y="175.2" width="23.7" height="6.9" fill="#844e41"/><rect x="175.5" y="175.2" width="21.2" height="6.9" fill="#914d3a"/><rect x="198.2" y="175.2" width="21.8" height="6.9" fill="#914a39"/><rect x="221.3" y="175.2" width="23.9" height="6.9" fill="#8e5445"/><rect x="246.6" y="175.2" width="21.6" height="6.9" fill="#904938"/><rect x="269.6" y="175.2" width="22.5" height="6.9" fill="#864535"/><rect x="293.5" y="175.2" width="26.0" height="6.9" fill="#8a4535"/><rect x="320.9" y="175.2" width="20.8" height="6.9" fill="#994e3c"/><rect x="343.0" y="175.2" width="20.5" height="6.9" fill="#945546"/><rect x="364.9" y="175.2" width="20.3" height="6.9" fill="#8c4636"/><rect x="386.7" y="175.2" width="21.5" height="6.9" fill="#9d533f"/><rect x="409.5" y="175.2" width="23.2" height="6.9" fill="#a0523e"/><rect x="434.2" y="175.2" width="21.7" height="6.9" fill="#874636"/><rect x="457.3" y="175.2" width="19.7" height="6.9" fill="#904b3a"/><rect x="478.4" y="175.2" width="21.4" height="6.9" fill="#8d4a39"/><rect x="501.1" y="175.2" width="24.7" height="6.9" fill="#8b5344"/><rect x="527.2" y="175.2" width="24.5" height="6.9" fill="#884535"/><rect x="553.1" y="175.2" width="23.0" height="6.9" fill="#8b4a39"/><rect x="577.5" y="175.2" width="23.9" height="6.9" fill="#904837"/><rect x="-25.8" y="183.5" width="22.5" height="6.9" fill="#8c4a39"/><rect x="-1.9" y="183.5" width="19.6" height="6.9" fill="#984f3c"/><rect x="19.1" y="183.5" width="22.2" height="6.9" fill="#8f4c3a"/><rect x="42.7" y="183.5" width="25.5" height="6.9" fill="#99503d"/><rect x="69.6" y="183.5" width="25.9" height="6.9" fill="#944b39"/><rect x="96.9" y="183.5" width="24.1" height="6.9" fill="#914b3a"/><rect x="122.3" y="183.5" width="23.7" height="6.9" fill="#794a3e"/><rect x="147.4" y="183.5" width="21.3" height="6.9" fill="#864736"/><rect x="170.1" y="183.5" width="21.0" height="6.9" fill="#8e4c3a"/><rect x="192.5" y="183.5" width="25.7" height="6.9" fill="#8e4837"/><rect x="219.6" y="183.5" width="24.0" height="6.9" fill="#954b3a"/><rect x="245.0" y="183.5" width="19.8" height="6.9" fill="#9a503d"/><rect x="266.1" y="183.5" width="21.3" height="6.9" fill="#864535"/><rect x="288.9" y="183.5" width="23.7" height="6.9" fill="#964b3a"/><rect x="314.0" y="183.5" width="23.9" height="6.9" fill="#984c3a"/><rect x="339.3" y="183.5" width="22.3" height="6.9" fill="#945546"/><rect x="363.0" y="183.5" width="24.1" height="6.9" fill="#844f42"/><rect x="388.5" y="183.5" width="22.5" height="6.9" fill="#994f3c"/><rect x="412.4" y="183.5" width="22.0" height="6.9" fill="#864535"/><rect x="435.8" y="183.5" width="24.8" height="6.9" fill="#8f4938"/><rect x="461.9" y="183.5" width="20.5" height="6.9" fill="#954e3c"/><rect x="483.9" y="183.5" width="26.0" height="6.9" fill="#984d3a"/><rect x="511.3" y="183.5" width="19.8" height="6.9" fill="#814c3f"/><rect x="532.6" y="183.5" width="21.2" height="6.9" fill="#905747"/><rect x="555.2" y="183.5" width="24.0" height="6.9" fill="#954e3b"/><rect x="580.6" y="183.5" width="21.4" height="6.9" fill="#8c4736"/><rect x="-13.6" y="191.8" width="24.8" height="6.9" fill="#874636"/><rect x="12.6" y="191.8" width="20.6" height="6.9" fill="#8f4837"/><rect x="34.6" y="191.8" width="21.5" height="6.9" fill="#894837"/><rect x="57.5" y="191.8" width="25.5" height="6.9" fill="#914b39"/><rect x="84.3" y="191.8" width="25.8" height="6.9" fill="#9b503d"/><rect x="111.6" y="191.8" width="25.0" height="6.9" fill="#8a4938"/><rect x="138.0" y="191.8" width="19.1" height="6.9" fill="#964d3b"/><rect x="158.5" y="191.8" width="21.1" height="6.9" fill="#944d3b"/><rect x="181.0" y="191.8" width="19.5" height="6.9" fill="#854535"/><rect x="201.9" y="191.8" width="25.8" height="6.9" fill="#8b4736"/><rect x="229.1" y="191.8" width="25.2" height="6.9" fill="#9e533f"/><rect x="255.7" y="191.8" width="22.9" height="6.9" fill="#9a503d"/><rect x="280.0" y="191.8" width="23.8" height="6.9" fill="#974e3b"/><rect x="305.2" y="191.8" width="22.1" height="6.9" fill="#9e513e"/><rect x="328.6" y="191.8" width="22.9" height="6.9" fill="#974c3a"/><rect x="352.9" y="191.8" width="21.5" height="6.9" fill="#8f4837"/><rect x="375.8" y="191.8" width="24.2" height="6.9" fill="#925747"/><rect x="401.5" y="191.8" width="23.0" height="6.9" fill="#944e3b"/><rect x="425.8" y="191.8" width="19.0" height="6.9" fill="#944e3b"/><rect x="446.2" y="191.8" width="21.6" height="6.9" fill="#804f41"/><rect x="469.3" y="191.8" width="23.8" height="6.9" fill="#774a3e"/><rect x="494.5" y="191.8" width="23.1" height="6.9" fill="#a5533f"/><rect x="519.0" y="191.8" width="22.1" height="6.9" fill="#8a5344"/><rect x="542.5" y="191.8" width="24.0" height="6.9" fill="#9b4e3c"/><rect x="567.9" y="191.8" width="25.3" height="6.9" fill="#7c4a3e"/><rect x="594.7" y="191.8" width="20.4" height="6.9" fill="#905445"/><rect x="-26.1" y="200.1" width="25.5" height="6.9" fill="#854636"/><rect x="0.7" y="200.1" width="20.8" height="6.9" fill="#8c4938"/><rect x="23.0" y="200.1" width="26.0" height="6.9" fill="#9e533f"/><rect x="50.4" y="200.1" width="25.7" height="6.9" fill="#8a4535"/><rect x="77.6" y="200.1" width="23.3" height="6.9" fill="#9f4f3c"/><rect x="102.2" y="200.1" width="23.4" height="6.9" fill="#874837"/><rect x="127.0" y="200.1" width="20.1" height="6.9" fill="#75493d"/><rect x="148.6" y="200.1" width="25.3" height="6.9" fill="#79493d"/><rect x="175.2" y="200.1" width="25.0" height="6.9" fill="#a0503d"/><rect x="201.6" y="200.1" width="23.2" height="6.9" fill="#8c5546"/><rect x="226.2" y="200.1" width="19.5" height="6.9" fill="#9d523e"/><rect x="247.0" y="200.1" width="25.0" height="6.9" fill="#934c3a"/><rect x="273.4" y="200.1" width="21.5" height="6.9" fill="#844535"/><rect x="296.3" y="200.1" width="23.2" height="6.9" fill="#964d3a"/><rect x="321.0" y="200.1" width="21.5" height="6.9" fill="#984f3c"/><rect x="343.9" y="200.1" width="22.0" height="6.9" fill="#894837"/><rect x="367.3" y="200.1" width="22.2" height="6.9" fill="#8d4938"/><rect x="390.9" y="200.1" width="23.9" height="6.9" fill="#984e3c"/><rect x="416.2" y="200.1" width="23.1" height="6.9" fill="#934e3b"/><rect x="440.7" y="200.1" width="20.7" height="6.9" fill="#924a38"/><rect x="462.8" y="200.1" width="24.2" height="6.9" fill="#964f3c"/><rect x="488.4" y="200.1" width="22.9" height="6.9" fill="#8b4636"/><rect x="512.7" y="200.1" width="20.6" height="6.9" fill="#964c3a"/><rect x="534.7" y="200.1" width="21.7" height="6.9" fill="#8d4b39"/><rect x="557.8" y="200.1" width="26.1" height="6.9" fill="#8f4b3a"/><rect x="585.3" y="200.1" width="23.8" height="6.9" fill="#8d4938"/><rect x="-11.9" y="208.4" width="25.5" height="6.9" fill="#9b4d3b"/><rect x="15.0" y="208.4" width="19.5" height="6.9" fill="#8d5646"/><rect x="35.9" y="208.4" width="19.2" height="6.9" fill="#894636"/><rect x="56.5" y="208.4" width="20.0" height="6.9" fill="#894837"/><rect x="78.0" y="208.4" width="25.9" height="6.9" fill="#824e41"/><rect x="105.3" y="208.4" width="20.0" height="6.9" fill="#9f523e"/><rect x="126.7" y="208.4" width="20.4" height="6.9" fill="#884736"/><rect x="148.5" y="208.4" width="24.2" height="6.9" fill="#9d4f3c"/><rect x="174.1" y="208.4" width="24.2" height="6.9" fill="#8b4938"/><rect x="199.7" y="208.4" width="19.5" height="6.9" fill="#8b4837"/><rect x="220.6" y="208.4" width="19.9" height="6.9" fill="#8d4a39"/><rect x="241.9" y="208.4" width="21.0" height="6.9" fill="#994d3a"/><rect x="264.3" y="208.4" width="22.2" height="6.9" fill="#a2523e"/><rect x="287.9" y="208.4" width="19.7" height="6.9" fill="#8a5344"/><rect x="308.9" y="208.4" width="25.6" height="6.9" fill="#a1513e"/><rect x="336.0" y="208.4" width="25.9" height="6.9" fill="#905344"/><rect x="363.3" y="208.4" width="22.5" height="6.9" fill="#a6533f"/><rect x="387.2" y="208.4" width="23.3" height="6.9" fill="#a3533f"/><rect x="411.9" y="208.4" width="20.4" height="6.9" fill="#904c3a"/><rect x="433.7" y="208.4" width="23.2" height="6.9" fill="#924d3b"/><rect x="458.3" y="208.4" width="19.3" height="6.9" fill="#904b3a"/><rect x="479.1" y="208.4" width="19.2" height="6.9" fill="#954c3a"/><rect x="499.6" y="208.4" width="19.5" height="6.9" fill="#834535"/><rect x="520.5" y="208.4" width="20.2" height="6.9" fill="#874535"/><rect x="542.1" y="208.4" width="23.5" height="6.9" fill="#934b39"/><rect x="566.9" y="208.4" width="24.3" height="6.9" fill="#7d4c3f"/><rect x="592.7" y="208.4" width="23.2" height="6.9" fill="#9a4e3c"/><rect x="-25.1" y="216.7" width="20.8" height="6.9" fill="#934c3a"/><rect x="-2.8" y="216.7" width="23.5" height="6.9" fill="#9f533f"/><rect x="22.1" y="216.7" width="23.0" height="6.9" fill="#8c4a38"/><rect x="46.5" y="216.7" width="21.3" height="6.9" fill="#9b4d3b"/><rect x="69.2" y="216.7" width="24.1" height="6.9" fill="#8f4a39"/><rect x="94.6" y="216.7" width="23.6" height="6.9" fill="#864535"/><rect x="119.6" y="216.7" width="19.8" height="6.9" fill="#a0503d"/><rect x="140.8" y="216.7" width="23.9" height="6.9" fill="#9d4f3c"/><rect x="166.1" y="216.7" width="22.6" height="6.9" fill="#a5533f"/><rect x="190.1" y="216.7" width="19.6" height="6.9" fill="#895042"/><rect x="211.2" y="216.7" width="20.0" height="6.9" fill="#854535"/><rect x="232.6" y="216.7" width="19.4" height="6.9" fill="#894938"/><rect x="253.3" y="216.7" width="25.0" height="6.9" fill="#9a523e"/><rect x="279.7" y="216.7" width="25.5" height="6.9" fill="#924d3a"/><rect x="306.6" y="216.7" width="23.0" height="6.9" fill="#8a4636"/><rect x="331.0" y="216.7" width="20.1" height="6.9" fill="#934a39"/><rect x="352.5" y="216.7" width="25.7" height="6.9" fill="#984f3c"/><rect x="379.6" y="216.7" width="22.2" height="6.9" fill="#8c4a38"/><rect x="403.2" y="216.7" width="24.7" height="6.9" fill="#9b503d"/><rect x="429.3" y="216.7" width="24.8" height="6.9" fill="#874837"/><rect x="455.5" y="216.7" width="21.2" height="6.9" fill="#884938"/><rect x="478.1" y="216.7" width="19.2" height="6.9" fill="#964d3a"/><rect x="498.6" y="216.7" width="23.6" height="6.9" fill="#9c4f3c"/><rect x="523.7" y="216.7" width="23.6" height="6.9" fill="#774a3e"/><rect x="548.7" y="216.7" width="26.1" height="6.9" fill="#a2533f"/><rect x="576.2" y="216.7" width="20.3" height="6.9" fill="#9b503d"/><rect x="597.9" y="216.7" width="23.5" height="6.9" fill="#854736"/><rect x="-12.5" y="225.0" width="21.8" height="6.9" fill="#99513e"/><rect x="10.7" y="225.0" width="25.8" height="6.9" fill="#9c4f3c"/><rect x="37.9" y="225.0" width="24.1" height="6.9" fill="#824535"/><rect x="63.4" y="225.0" width="22.6" height="6.9" fill="#8b4938"/><rect x="87.4" y="225.0" width="24.6" height="6.9" fill="#99503d"/><rect x="113.4" y="225.0" width="21.3" height="6.9" fill="#7d4d40"/><rect x="136.1" y="225.0" width="20.9" height="6.9" fill="#9a513e"/><rect x="158.4" y="225.0" width="25.7" height="6.9" fill="#854535"/><rect x="185.5" y="225.0" width="23.2" height="6.9" fill="#914a38"/><rect x="210.1" y="225.0" width="21.4" height="6.9" fill="#8c4938"/><rect x="232.9" y="225.0" width="22.5" height="6.9" fill="#834535"/><rect x="256.8" y="225.0" width="22.9" height="6.9" fill="#984c3a"/><rect x="281.0" y="225.0" width="20.4" height="6.9" fill="#984e3b"/><rect x="302.9" y="225.0" width="21.4" height="6.9" fill="#7a4a3e"/><rect x="325.6" y="225.0" width="21.6" height="6.9" fill="#994d3a"/><rect x="348.6" y="225.0" width="21.9" height="6.9" fill="#8f4938"/><rect x="371.9" y="225.0" width="19.6" height="6.9" fill="#944c3a"/><rect x="392.9" y="225.0" width="22.0" height="6.9" fill="#9d4f3c"/><rect x="416.3" y="225.0" width="25.7" height="6.9" fill="#954d3a"/><rect x="443.3" y="225.0" width="22.0" height="6.9" fill="#7b493d"/><rect x="466.8" y="225.0" width="20.3" height="6.9" fill="#8b4535"/><rect x="488.5" y="225.0" width="23.0" height="6.9" fill="#924938"/><rect x="512.8" y="225.0" width="21.3" height="6.9" fill="#99513e"/><rect x="535.5" y="225.0" width="22.3" height="6.9" fill="#8f4c3a"/><rect x="559.2" y="225.0" width="20.4" height="6.9" fill="#894938"/><rect x="581.0" y="225.0" width="19.0" height="6.9" fill="#984c3a"/><rect x="-23.7" y="233.3" width="22.1" height="6.9" fill="#964e3b"/><rect x="-0.2" y="233.3" width="23.7" height="6.9" fill="#9f4f3c"/><rect x="24.9" y="233.3" width="19.6" height="6.9" fill="#954e3b"/><rect x="45.9" y="233.3" width="23.1" height="6.9" fill="#8d4b3a"/><rect x="70.4" y="233.3" width="24.3" height="6.9" fill="#9f503d"/><rect x="96.1" y="233.3" width="20.5" height="6.9" fill="#8f4938"/><rect x="118.0" y="233.3" width="25.3" height="6.9" fill="#964f3c"/><rect x="144.7" y="233.3" width="19.2" height="6.9" fill="#a3523e"/><rect x="165.3" y="233.3" width="24.3" height="6.9" fill="#9f533f"/><rect x="191.0" y="233.3" width="24.7" height="6.9" fill="#9b503d"/><rect x="217.1" y="233.3" width="21.6" height="6.9" fill="#914c3a"/><rect x="240.1" y="233.3" width="21.3" height="6.9" fill="#944e3c"/><rect x="262.8" y="233.3" width="21.2" height="6.9" fill="#9a513e"/><rect x="285.4" y="233.3" width="22.4" height="6.9" fill="#a5533f"/><rect x="309.2" y="233.3" width="21.7" height="6.9" fill="#a5533f"/><rect x="332.3" y="233.3" width="24.7" height="6.9" fill="#8e4b3a"/><rect x="358.4" y="233.3" width="21.1" height="6.9" fill="#a1503d"/><rect x="380.9" y="233.3" width="23.7" height="6.9" fill="#9d4f3c"/><rect x="406.0" y="233.3" width="23.7" height="6.9" fill="#914938"/><rect x="431.1" y="233.3" width="22.9" height="6.9" fill="#9d503d"/><rect x="455.4" y="233.3" width="21.8" height="6.9" fill="#a1523e"/><rect x="478.6" y="233.3" width="22.1" height="6.9" fill="#8c4636"/><rect x="502.1" y="233.3" width="25.2" height="6.9" fill="#8d4a38"/><rect x="528.7" y="233.3" width="22.1" height="6.9" fill="#8b5042"/><rect x="552.2" y="233.3" width="20.6" height="6.9" fill="#8d5344"/><rect x="574.2" y="233.3" width="26.0" height="6.9" fill="#9c503d"/><rect x="-13.0" y="241.6" width="20.8" height="6.9" fill="#9f503d"/><rect x="9.2" y="241.6" width="20.1" height="6.9" fill="#834535"/><rect x="30.7" y="241.6" width="23.2" height="6.9" fill="#a2523e"/><rect x="55.3" y="241.6" width="21.0" height="6.9" fill="#984e3b"/><rect x="77.7" y="241.6" width="22.6" height="6.9" fill="#8d4837"/><rect x="101.7" y="241.6" width="21.1" height="6.9" fill="#a0523e"/><rect x="124.1" y="241.6" width="19.7" height="6.9" fill="#894535"/><rect x="145.2" y="241.6" width="23.0" height="6.9" fill="#8a5042"/><rect x="169.7" y="241.6" width="21.1" height="6.9" fill="#805042"/><rect x="192.1" y="241.6" width="21.2" height="6.9" fill="#99503d"/><rect x="214.7" y="241.6" width="25.0" height="6.9" fill="#834f42"/><rect x="241.1" y="241.6" width="23.2" height="6.9" fill="#914d3a"/><rect x="265.6" y="241.6" width="21.9" height="6.9" fill="#8f4b3a"/><rect x="288.9" y="241.6" width="23.5" height="6.9" fill="#a4523e"/><rect x="313.8" y="241.6" width="20.3" height="6.9" fill="#854636"/><rect x="335.5" y="241.6" width="19.2" height="6.9" fill="#7d4c3f"/><rect x="356.1" y="241.6" width="19.4" height="6.9" fill="#934e3b"/><rect x="376.9" y="241.6" width="21.1" height="6.9" fill="#8e4a39"/><rect x="399.4" y="241.6" width="21.6" height="6.9" fill="#904a39"/><rect x="422.4" y="241.6" width="25.5" height="6.9" fill="#a3533f"/><rect x="449.3" y="241.6" width="19.2" height="6.9" fill="#a3523e"/><rect x="469.9" y="241.6" width="22.6" height="6.9" fill="#8f4b39"/><rect x="494.0" y="241.6" width="23.3" height="6.9" fill="#8d4a39"/><rect x="518.7" y="241.6" width="25.6" height="6.9" fill="#a1523e"/><rect x="545.7" y="241.6" width="20.3" height="6.9" fill="#8f4837"/><rect x="567.4" y="241.6" width="20.2" height="6.9" fill="#954b39"/><rect x="589.0" y="241.6" width="20.6" height="6.9" fill="#a2533f"/><rect x="-24.0" y="249.9" width="21.6" height="6.9" fill="#8f4938"/><rect x="-1.0" y="249.9" width="19.3" height="6.9" fill="#98503d"/><rect x="19.8" y="249.9" width="23.9" height="6.9" fill="#855243"/><rect x="45.1" y="249.9" width="19.3" height="6.9" fill="#934b39"/><rect x="65.8" y="249.9" width="25.2" height="6.9" fill="#844636"/><rect x="92.4" y="249.9" width="25.5" height="6.9" fill="#964e3c"/><rect x="119.4" y="249.9" width="19.3" height="6.9" fill="#7c4b3e"/><rect x="140.1" y="249.9" width="24.6" height="6.9" fill="#824d40"/><rect x="166.1" y="249.9" width="20.8" height="6.9" fill="#844535"/><rect x="188.3" y="249.9" width="21.2" height="6.9" fill="#814535"/><rect x="210.8" y="249.9" width="22.0" height="6.9" fill="#8a4837"/><rect x="234.2" y="249.9" width="20.2" height="6.9" fill="#8b4636"/><rect x="255.8" y="249.9" width="20.4" height="6.9" fill="#9b4d3b"/><rect x="277.6" y="249.9" width="22.2" height="6.9" fill="#9f503d"/><rect x="301.2" y="249.9" width="24.9" height="6.9" fill="#944b39"/><rect x="327.5" y="249.9" width="22.2" height="6.9" fill="#9b4e3b"/><rect x="351.0" y="249.9" width="24.8" height="6.9" fill="#9f533f"/><rect x="377.2" y="249.9" width="21.1" height="6.9" fill="#8d4b3a"/><rect x="399.8" y="249.9" width="19.3" height="6.9" fill="#934c3a"/><rect x="420.4" y="249.9" width="21.6" height="6.9" fill="#a3523e"/><rect x="443.5" y="249.9" width="24.0" height="6.9" fill="#915445"/><rect x="468.9" y="249.9" width="22.6" height="6.9" fill="#914938"/><rect x="492.9" y="249.9" width="25.6" height="6.9" fill="#905646"/><rect x="519.9" y="249.9" width="20.8" height="6.9" fill="#934a39"/><rect x="542.1" y="249.9" width="23.0" height="6.9" fill="#864535"/><rect x="566.5" y="249.9" width="26.1" height="6.9" fill="#8b4636"/><rect x="594.0" y="249.9" width="19.1" height="6.9" fill="#8b4736"/><rect x="-13.6" y="258.2" width="22.2" height="6.9" fill="#a3533f"/><rect x="10.1" y="258.2" width="22.9" height="6.9" fill="#8b4535"/><rect x="34.4" y="258.2" width="19.5" height="6.9" fill="#9b503d"/><rect x="55.3" y="258.2" width="20.6" height="6.9" fill="#974c3a"/><rect x="77.3" y="258.2" width="26.1" height="6.9" fill="#905344"/><rect x="104.8" y="258.2" width="20.6" height="6.9" fill="#994f3c"/><rect x="126.8" y="258.2" width="20.7" height="6.9" fill="#8f4a38"/><rect x="148.9" y="258.2" width="25.4" height="6.9" fill="#924d3a"/><rect x="175.7" y="258.2" width="20.3" height="6.9" fill="#8a4837"/><rect x="197.5" y="258.2" width="19.4" height="6.9" fill="#844535"/><rect x="218.3" y="258.2" width="23.6" height="6.9" fill="#9a503d"/><rect x="243.2" y="258.2" width="23.6" height="6.9" fill="#8f4a39"/><rect x="268.3" y="258.2" width="24.3" height="6.9" fill="#8c4a39"/><rect x="294.0" y="258.2" width="25.7" height="6.9" fill="#8b4535"/><rect x="321.2" y="258.2" width="25.3" height="6.9" fill="#9a4f3c"/><rect x="347.9" y="258.2" width="23.7" height="6.9" fill="#954c3a"/><rect x="373.0" y="258.2" width="19.3" height="6.9" fill="#974e3b"/><rect x="393.6" y="258.2" width="20.4" height="6.9" fill="#844636"/><rect x="415.4" y="258.2" width="24.0" height="6.9" fill="#914b3a"/><rect x="440.9" y="258.2" width="23.8" height="6.9" fill="#8a4636"/><rect x="466.0" y="258.2" width="21.3" height="6.9" fill="#814535"/><rect x="488.7" y="258.2" width="23.2" height="6.9" fill="#8c4636"/><rect x="513.4" y="258.2" width="19.8" height="6.9" fill="#954b39"/><rect x="534.6" y="258.2" width="21.4" height="6.9" fill="#8e4736"/><rect x="557.4" y="258.2" width="23.4" height="6.9" fill="#814c3f"/><rect x="582.2" y="258.2" width="23.7" height="6.9" fill="#9e4f3c"/><rect x="-24.6" y="266.5" width="22.5" height="6.9" fill="#834535"/><rect x="-0.8" y="266.5" width="25.9" height="6.9" fill="#884736"/><rect x="26.6" y="266.5" width="20.6" height="6.9" fill="#974c3a"/><rect x="48.6" y="266.5" width="20.2" height="6.9" fill="#8c4b39"/><rect x="70.2" y="266.5" width="19.5" height="6.9" fill="#8b4938"/><rect x="91.0" y="266.5" width="25.5" height="6.9" fill="#804d40"/><rect x="117.9" y="266.5" width="24.1" height="6.9" fill="#8a4736"/><rect x="143.4" y="266.5" width="25.6" height="6.9" fill="#7d493d"/><rect x="170.4" y="266.5" width="21.1" height="6.9" fill="#804c3f"/><rect x="192.9" y="266.5" width="20.4" height="6.9" fill="#9d4f3c"/><rect x="214.7" y="266.5" width="20.2" height="6.9" fill="#984d3b"/><rect x="236.3" y="266.5" width="21.7" height="6.9" fill="#925445"/><rect x="259.5" y="266.5" width="19.0" height="6.9" fill="#8a4a38"/><rect x="279.9" y="266.5" width="19.2" height="6.9" fill="#9f523e"/><rect x="300.5" y="266.5" width="22.0" height="6.9" fill="#a3523e"/><rect x="324.0" y="266.5" width="21.1" height="6.9" fill="#8c4a38"/><rect x="346.4" y="266.5" width="24.8" height="6.9" fill="#a2533f"/><rect x="372.6" y="266.5" width="19.8" height="6.9" fill="#954f3c"/><rect x="393.8" y="266.5" width="21.1" height="6.9" fill="#894938"/><rect x="416.3" y="266.5" width="25.7" height="6.9" fill="#8c4837"/><rect x="443.4" y="266.5" width="21.5" height="6.9" fill="#8a4938"/><rect x="466.2" y="266.5" width="19.9" height="6.9" fill="#934c3a"/><rect x="487.5" y="266.5" width="23.9" height="6.9" fill="#9c4e3b"/><rect x="512.8" y="266.5" width="21.0" height="6.9" fill="#8f4938"/><rect x="535.2" y="266.5" width="25.9" height="6.9" fill="#894736"/><rect x="562.5" y="266.5" width="23.1" height="6.9" fill="#854736"/><rect x="587.0" y="266.5" width="23.2" height="6.9" fill="#8c4837"/><rect x="-12.5" y="274.9" width="20.9" height="6.9" fill="#964f3c"/><rect x="9.9" y="274.9" width="21.6" height="6.9" fill="#a0503d"/><rect x="32.9" y="274.9" width="25.1" height="6.9" fill="#8d4837"/><rect x="59.4" y="274.9" width="21.4" height="6.9" fill="#74493d"/><rect x="82.3" y="274.9" width="19.0" height="6.9" fill="#8f4a39"/><rect x="102.7" y="274.9" width="22.7" height="6.9" fill="#824535"/><rect x="126.7" y="274.9" width="25.6" height="6.9" fill="#a1523e"/><rect x="153.7" y="274.9" width="22.3" height="6.9" fill="#964c3a"/><rect x="177.5" y="274.9" width="23.0" height="6.9" fill="#8d4938"/><rect x="201.9" y="274.9" width="24.6" height="6.9" fill="#9b4d3b"/><rect x="227.9" y="274.9" width="24.6" height="6.9" fill="#894837"/><rect x="254.0" y="274.9" width="20.2" height="6.9" fill="#884535"/><rect x="275.5" y="274.9" width="20.3" height="6.9" fill="#9b503d"/><rect x="297.3" y="274.9" width="23.9" height="6.9" fill="#954f3c"/><rect x="322.5" y="274.9" width="25.7" height="6.9" fill="#8c4736"/><rect x="349.6" y="274.9" width="20.8" height="6.9" fill="#914938"/><rect x="371.9" y="274.9" width="25.0" height="6.9" fill="#844636"/><rect x="398.3" y="274.9" width="19.2" height="6.9" fill="#7b4d40"/><rect x="418.9" y="274.9" width="20.2" height="6.9" fill="#854636"/><rect x="440.5" y="274.9" width="19.9" height="6.9" fill="#994e3c"/><rect x="461.8" y="274.9" width="21.7" height="6.9" fill="#9a4f3c"/><rect x="484.9" y="274.9" width="23.0" height="6.9" fill="#964e3b"/><rect x="509.3" y="274.9" width="23.9" height="6.9" fill="#8f4a39"/><rect x="534.5" y="274.9" width="21.1" height="6.9" fill="#954c3a"/><rect x="557.0" y="274.9" width="22.2" height="6.9" fill="#a0533f"/><rect x="580.6" y="274.9" width="25.6" height="6.9" fill="#8e4837"/><rect x="-24.9" y="283.2" width="21.6" height="6.9" fill="#8d4b39"/><rect x="-1.9" y="283.2" width="24.7" height="6.9" fill="#8b4a38"/><rect x="24.2" y="283.2" width="22.6" height="6.9" fill="#9e523e"/><rect x="48.2" y="283.2" width="25.6" height="6.9" fill="#964c3a"/><rect x="75.2" y="283.2" width="25.2" height="6.9" fill="#764a3e"/><rect x="101.8" y="283.2" width="21.9" height="6.9" fill="#854636"/><rect x="125.1" y="283.2" width="23.1" height="6.9" fill="#8d4636"/><rect x="149.6" y="283.2" width="20.1" height="6.9" fill="#994f3c"/><rect x="171.0" y="283.2" width="21.8" height="6.9" fill="#794c3f"/><rect x="194.2" y="283.2" width="20.2" height="6.9" fill="#874736"/><rect x="215.8" y="283.2" width="19.8" height="6.9" fill="#9e533f"/><rect x="237.0" y="283.2" width="20.1" height="6.9" fill="#924a39"/><rect x="258.6" y="283.2" width="26.1" height="6.9" fill="#8a4a38"/><rect x="286.0" y="283.2" width="20.0" height="6.9" fill="#8c5546"/><rect x="307.5" y="283.2" width="19.3" height="6.9" fill="#9a4f3c"/><rect x="328.1" y="283.2" width="25.5" height="6.9" fill="#9d523e"/><rect x="355.0" y="283.2" width="25.6" height="6.9" fill="#8d4837"/><rect x="382.0" y="283.2" width="21.2" height="6.9" fill="#914c3a"/><rect x="404.6" y="283.2" width="25.9" height="6.9" fill="#904c3a"/><rect x="431.9" y="283.2" width="23.4" height="6.9" fill="#8b4a39"/><rect x="456.7" y="283.2" width="25.5" height="6.9" fill="#9a523e"/><rect x="483.6" y="283.2" width="20.7" height="6.9" fill="#a4533f"/><rect x="505.7" y="283.2" width="22.9" height="6.9" fill="#8d4a38"/><rect x="530.1" y="283.2" width="22.7" height="6.9" fill="#9e533f"/><rect x="554.2" y="283.2" width="20.9" height="6.9" fill="#8d4938"/><rect x="576.5" y="283.2" width="25.3" height="6.9" fill="#9b503d"/><rect x="-11.7" y="291.5" width="19.7" height="6.9" fill="#894837"/><rect x="9.4" y="291.5" width="22.6" height="6.9" fill="#9c4f3c"/><rect x="33.4" y="291.5" width="21.7" height="6.9" fill="#894837"/><rect x="56.5" y="291.5" width="23.4" height="6.9" fill="#864736"/><rect x="81.2" y="291.5" width="23.3" height="6.9" fill="#9d4e3c"/><rect x="105.9" y="291.5" width="24.6" height="6.9" fill="#944c3a"/><rect x="132.0" y="291.5" width="26.1" height="6.9" fill="#855042"/><rect x="159.4" y="291.5" width="20.8" height="6.9" fill="#944c3a"/><rect x="181.6" y="291.5" width="20.9" height="6.9" fill="#99503d"/><rect x="203.9" y="291.5" width="21.8" height="6.9" fill="#954f3c"/><rect x="227.1" y="291.5" width="21.3" height="6.9" fill="#864636"/><rect x="249.8" y="291.5" width="21.2" height="6.9" fill="#8e4b3a"/><rect x="272.4" y="291.5" width="26.1" height="6.9" fill="#924d3a"/><rect x="299.8" y="291.5" width="24.6" height="6.9" fill="#855042"/><rect x="325.8" y="291.5" width="19.5" height="6.9" fill="#9e503d"/><rect x="346.7" y="291.5" width="24.8" height="6.9" fill="#924c3a"/><rect x="372.9" y="291.5" width="22.5" height="6.9" fill="#904837"/><rect x="396.7" y="291.5" width="21.3" height="6.9" fill="#794c3f"/><rect x="419.5" y="291.5" width="19.6" height="6.9" fill="#a3523e"/><rect x="440.4" y="291.5" width="20.7" height="6.9" fill="#984c3a"/><rect x="462.6" y="291.5" width="21.3" height="6.9" fill="#974d3a"/><rect x="485.3" y="291.5" width="20.9" height="6.9" fill="#8a4736"/><rect x="507.5" y="291.5" width="24.4" height="6.9" fill="#915344"/><rect x="533.4" y="291.5" width="21.5" height="6.9" fill="#964f3c"/><rect x="556.2" y="291.5" width="23.7" height="6.9" fill="#924d3a"/><rect x="581.4" y="291.5" width="23.4" height="6.9" fill="#8f4a38"/><rect x="-26.0" y="299.8" width="25.9" height="6.9" fill="#a0513e"/><rect x="1.3" y="299.8" width="22.4" height="6.9" fill="#9e513e"/><rect x="25.1" y="299.8" width="20.1" height="6.9" fill="#974d3a"/><rect x="46.6" y="299.8" width="24.4" height="6.9" fill="#a6533f"/><rect x="72.4" y="299.8" width="24.7" height="6.9" fill="#945646"/><rect x="98.5" y="299.8" width="20.0" height="6.9" fill="#844535"/><rect x="119.9" y="299.8" width="24.6" height="6.9" fill="#7d4a3e"/><rect x="145.9" y="299.8" width="20.2" height="6.9" fill="#974e3b"/><rect x="167.5" y="299.8" width="23.4" height="6.9" fill="#894636"/><rect x="192.3" y="299.8" width="19.0" height="6.9" fill="#8a5143"/><rect x="212.7" y="299.8" width="25.4" height="6.9" fill="#884636"/><rect x="239.5" y="299.8" width="24.5" height="6.9" fill="#954e3b"/><rect x="265.4" y="299.8" width="22.7" height="6.9" fill="#8d4837"/><rect x="289.6" y="299.8" width="20.9" height="6.9" fill="#8f5344"/><rect x="311.8" y="299.8" width="20.0" height="6.9" fill="#904837"/><rect x="333.2" y="299.8" width="23.2" height="6.9" fill="#844535"/><rect x="357.8" y="299.8" width="21.7" height="6.9" fill="#8d4837"/><rect x="381.0" y="299.8" width="26.0" height="6.9" fill="#8d4837"/><rect x="408.4" y="299.8" width="20.5" height="6.9" fill="#894636"/><rect x="430.3" y="299.8" width="20.7" height="6.9" fill="#9e533f"/><rect x="452.4" y="299.8" width="22.4" height="6.9" fill="#7c4b3e"/><rect x="476.2" y="299.8" width="21.0" height="6.9" fill="#a4533f"/><rect x="498.6" y="299.8" width="22.1" height="6.9" fill="#8f4c3a"/><rect x="522.2" y="299.8" width="21.7" height="6.9" fill="#974c3a"/><rect x="545.2" y="299.8" width="24.1" height="6.9" fill="#944a39"/><rect x="570.8" y="299.8" width="20.1" height="6.9" fill="#974d3a"/><rect x="592.3" y="299.8" width="25.7" height="6.9" fill="#934d3b"/><rect x="-13.3" y="308.1" width="20.6" height="6.9" fill="#7e4f41"/><rect x="8.7" y="308.1" width="20.6" height="6.9" fill="#884636"/><rect x="30.7" y="308.1" width="19.4" height="6.9" fill="#9f4f3c"/><rect x="51.5" y="308.1" width="20.3" height="6.9" fill="#7b4a3e"/><rect x="73.2" y="308.1" width="24.5" height="6.9" fill="#8a4938"/><rect x="99.1" y="308.1" width="24.7" height="6.9" fill="#864636"/><rect x="125.2" y="308.1" width="21.3" height="6.9" fill="#9a513e"/><rect x="147.9" y="308.1" width="21.2" height="6.9" fill="#964c3a"/><rect x="170.5" y="308.1" width="22.4" height="6.9" fill="#9e523e"/><rect x="194.3" y="308.1" width="19.5" height="6.9" fill="#934a38"/><rect x="215.1" y="308.1" width="22.8" height="6.9" fill="#864636"/><rect x="239.4" y="308.1" width="21.4" height="6.9" fill="#8f5646"/><rect x="262.1" y="308.1" width="21.2" height="6.9" fill="#904c3a"/><rect x="284.7" y="308.1" width="23.9" height="6.9" fill="#884837"/><rect x="310.0" y="308.1" width="25.2" height="6.9" fill="#835142"/><rect x="336.6" y="308.1" width="21.1" height="6.9" fill="#904a38"/><rect x="359.1" y="308.1" width="19.6" height="6.9" fill="#945747"/><rect x="380.0" y="308.1" width="20.8" height="6.9" fill="#a1503d"/><rect x="402.2" y="308.1" width="20.6" height="6.9" fill="#834636"/><rect x="424.2" y="308.1" width="20.9" height="6.9" fill="#904a38"/><rect x="446.6" y="308.1" width="22.9" height="6.9" fill="#8c4b39"/><rect x="470.9" y="308.1" width="19.3" height="6.9" fill="#9a4e3b"/><rect x="491.6" y="308.1" width="19.7" height="6.9" fill="#865244"/><rect x="512.7" y="308.1" width="24.5" height="6.9" fill="#874837"/><rect x="538.5" y="308.1" width="24.8" height="6.9" fill="#944e3c"/><rect x="564.7" y="308.1" width="19.2" height="6.9" fill="#884535"/><rect x="585.3" y="308.1" width="20.2" height="6.9" fill="#8f4c3a"/><rect x="-25.8" y="316.4" width="23.7" height="6.9" fill="#894636"/><rect x="-0.7" y="316.4" width="20.9" height="6.9" fill="#8f4b3a"/><rect x="21.6" y="316.4" width="22.3" height="6.9" fill="#9b4d3b"/><rect x="45.4" y="316.4" width="22.7" height="6.9" fill="#9c533f"/><rect x="69.5" y="316.4" width="24.9" height="6.9" fill="#9b4d3b"/><rect x="95.8" y="316.4" width="25.4" height="6.9" fill="#8d5244"/><rect x="122.6" y="316.4" width="19.1" height="6.9" fill="#954e3b"/><rect x="143.1" y="316.4" width="20.9" height="6.9" fill="#965747"/><rect x="165.4" y="316.4" width="23.6" height="6.9" fill="#935646"/><rect x="190.4" y="316.4" width="20.6" height="6.9" fill="#9e503d"/><rect x="212.4" y="316.4" width="24.6" height="6.9" fill="#8a4938"/><rect x="238.4" y="316.4" width="22.3" height="6.9" fill="#8b4535"/><rect x="262.1" y="316.4" width="22.8" height="6.9" fill="#894535"/><rect x="286.3" y="316.4" width="21.4" height="6.9" fill="#8d4636"/><rect x="309.2" y="316.4" width="25.7" height="6.9" fill="#7d4a3e"/><rect x="336.3" y="316.4" width="23.0" height="6.9" fill="#924d3a"/><rect x="360.7" y="316.4" width="21.8" height="6.9" fill="#984d3a"/><rect x="383.8" y="316.4" width="20.0" height="6.9" fill="#8a4a38"/><rect x="405.2" y="316.4" width="25.5" height="6.9" fill="#a3523e"/><rect x="432.1" y="316.4" width="20.8" height="6.9" fill="#964c3a"/><rect x="454.3" y="316.4" width="21.5" height="6.9" fill="#8e4a38"/><rect x="477.2" y="316.4" width="19.9" height="6.9" fill="#874837"/><rect x="498.5" y="316.4" width="19.7" height="6.9" fill="#854636"/><rect x="519.7" y="316.4" width="20.9" height="6.9" fill="#8b4636"/><rect x="542.0" y="316.4" width="26.0" height="6.9" fill="#a0503d"/><rect x="569.3" y="316.4" width="24.4" height="6.9" fill="#a1513e"/><rect x="595.1" y="316.4" width="25.9" height="6.9" fill="#994e3c"/><rect width="600" height="324" filter="url(#nzs)" opacity="1"/></svg></div></div><div class="a" style="left:0;top:0;width:60px;height:290px;transform-origin:0 0;transform:matrix3d(4.2871803,1.6240576,0,0.0040043965,-0.12315271,0.88128079,0,-0.00014074595,0,0,1,0,828,483,0,1)"><svg width="60" height="290" style="position:absolute;left:0;top:0;display:block"><rect width="60" height="290" fill="#9a8c6c"/><rect x="-13.8" y="0.6" width="12.4" height="5.4" fill="#52291f"/><rect x="-0.2" y="0.6" width="9.9" height="5.4" fill="#4d261d"/><rect x="10.9" y="0.6" width="13.0" height="5.4" fill="#55291f"/><rect x="25.1" y="0.6" width="9.9" height="5.4" fill="#4f281e"/><rect x="36.1" y="0.6" width="11.3" height="5.4" fill="#422821"/><rect x="48.6" y="0.6" width="13.0" height="5.4" fill="#49231b"/><rect x="-6.9" y="7.2" width="11.4" height="5.4" fill="#4a2d25"/><rect x="5.7" y="7.2" width="10.1" height="5.4" fill="#592b21"/><rect x="17.0" y="7.2" width="10.2" height="5.4" fill="#4e261e"/><rect x="28.4" y="7.2" width="11.5" height="5.4" fill="#4a231b"/><rect x="41.1" y="7.2" width="12.3" height="5.4" fill="#46241b"/><rect x="54.6" y="7.2" width="11.8" height="5.4" fill="#47231b"/><rect x="-14.4" y="13.8" width="11.7" height="5.4" fill="#51281e"/><rect x="-1.5" y="13.8" width="12.3" height="5.4" fill="#46231b"/><rect x="12.0" y="13.8" width="12.4" height="5.4" fill="#4c261d"/><rect x="25.7" y="13.8" width="11.4" height="5.4" fill="#49251c"/><rect x="38.2" y="13.8" width="11.2" height="5.4" fill="#4e261d"/><rect x="50.6" y="13.8" width="12.8" height="5.4" fill="#46241b"/><rect x="-8.5" y="20.4" width="10.0" height="5.4" fill="#45221a"/><rect x="2.7" y="20.4" width="10.0" height="5.4" fill="#4b251c"/><rect x="13.9" y="20.4" width="12.0" height="5.4" fill="#46241b"/><rect x="27.1" y="20.4" width="10.0" height="5.4" fill="#4b251c"/><rect x="38.3" y="20.4" width="12.3" height="5.4" fill="#48231b"/><rect x="51.8" y="20.4" width="10.7" height="5.4" fill="#4c251c"/><rect x="-15.3" y="27.0" width="11.7" height="5.4" fill="#552c21"/><rect x="-2.4" y="27.0" width="12.0" height="5.4" fill="#47241b"/><rect x="10.8" y="27.0" width="10.7" height="5.4" fill="#4e281e"/><rect x="22.7" y="27.0" width="13.4" height="5.4" fill="#542a20"/><rect x="37.4" y="27.0" width="13.0" height="5.4" fill="#4c271e"/><rect x="51.5" y="27.0" width="10.3" height="5.4" fill="#4e261d"/><rect x="-6.0" y="33.6" width="11.1" height="5.4" fill="#572a20"/><rect x="6.3" y="33.6" width="12.3" height="5.4" fill="#4b251c"/><rect x="19.9" y="33.6" width="11.8" height="5.4" fill="#4b261d"/><rect x="32.8" y="33.6" width="11.6" height="5.4" fill="#51291f"/><rect x="45.6" y="33.6" width="12.3" height="5.4" fill="#46231b"/><rect x="59.1" y="33.6" width="13.2" height="5.4" fill="#52281f"/><rect x="-13.0" y="40.1" width="11.0" height="5.4" fill="#47251c"/><rect x="-0.9" y="40.1" width="12.6" height="5.4" fill="#4a231b"/><rect x="12.9" y="40.1" width="11.5" height="5.4" fill="#49251c"/><rect x="25.6" y="40.1" width="13.7" height="5.4" fill="#52281e"/><rect x="40.4" y="40.1" width="13.4" height="5.4" fill="#572c21"/><rect x="55.1" y="40.1" width="11.5" height="5.4" fill="#4e281e"/><rect x="-8.3" y="46.7" width="12.1" height="5.4" fill="#4c261d"/><rect x="5.0" y="46.7" width="11.4" height="5.4" fill="#46241b"/><rect x="17.6" y="46.7" width="10.5" height="5.4" fill="#43221a"/><rect x="29.3" y="46.7" width="13.4" height="5.4" fill="#4e281e"/><rect x="43.9" y="46.7" width="11.3" height="5.4" fill="#47231b"/><rect x="56.4" y="46.7" width="10.9" height="5.4" fill="#572a20"/><rect x="-14.3" y="53.3" width="10.3" height="5.4" fill="#52281e"/><rect x="-2.7" y="53.3" width="11.4" height="5.4" fill="#47251c"/><rect x="9.9" y="53.3" width="11.1" height="5.4" fill="#52291f"/><rect x="22.2" y="53.3" width="10.2" height="5.4" fill="#4a251c"/><rect x="33.6" y="53.3" width="12.8" height="5.4" fill="#55291f"/><rect x="47.6" y="53.3" width="11.3" height="5.4" fill="#45221a"/><rect x="60.1" y="53.3" width="11.6" height="5.4" fill="#46241b"/><rect x="-6.9" y="59.9" width="10.8" height="5.4" fill="#49261c"/><rect x="5.1" y="59.9" width="9.9" height="5.4" fill="#4c261d"/><rect x="16.1" y="59.9" width="10.6" height="5.4" fill="#4d261e"/><rect x="28.0" y="59.9" width="13.4" height="5.4" fill="#4f271e"/><rect x="42.6" y="59.9" width="11.7" height="5.4" fill="#52281e"/><rect x="55.5" y="59.9" width="10.8" height="5.4" fill="#4b271e"/><rect x="-13.1" y="66.5" width="11.9" height="5.4" fill="#54291f"/><rect x="0.1" y="66.5" width="11.6" height="5.4" fill="#44231b"/><rect x="12.8" y="66.5" width="12.5" height="5.4" fill="#49261d"/><rect x="26.5" y="66.5" width="11.8" height="5.4" fill="#4f261d"/><rect x="39.5" y="66.5" width="10.4" height="5.4" fill="#4b251c"/><rect x="51.1" y="66.5" width="11.8" height="5.4" fill="#4d261e"/><rect x="-8.7" y="73.1" width="12.2" height="5.4" fill="#4f261d"/><rect x="4.7" y="73.1" width="10.3" height="5.4" fill="#4e281f"/><rect x="16.2" y="73.1" width="12.2" height="5.4" fill="#552a20"/><rect x="29.6" y="73.1" width="12.3" height="5.4" fill="#4a251c"/><rect x="43.1" y="73.1" width="11.3" height="5.4" fill="#4d261d"/><rect x="55.6" y="73.1" width="10.6" height="5.4" fill="#532a20"/><rect x="-12.7" y="79.7" width="10.9" height="5.4" fill="#532b21"/><rect x="-0.6" y="79.7" width="12.4" height="5.4" fill="#53291f"/><rect x="13.0" y="79.7" width="13.4" height="5.4" fill="#52291f"/><rect x="27.6" y="79.7" width="11.1" height="5.4" fill="#542a20"/><rect x="39.8" y="79.7" width="13.2" height="5.4" fill="#472a22"/><rect x="54.2" y="79.7" width="13.0" height="5.4" fill="#47251c"/><rect x="-8.3" y="86.3" width="13.5" height="5.4" fill="#48241b"/><rect x="6.3" y="86.3" width="9.9" height="5.4" fill="#542b21"/><rect x="17.5" y="86.3" width="11.8" height="5.4" fill="#422721"/><rect x="30.5" y="86.3" width="9.9" height="5.4" fill="#49231b"/><rect x="41.5" y="86.3" width="12.3" height="5.4" fill="#4e271e"/><rect x="55.1" y="86.3" width="11.4" height="5.4" fill="#472922"/><rect x="-14.9" y="92.9" width="9.9" height="5.4" fill="#49231b"/><rect x="-3.8" y="92.9" width="11.3" height="5.4" fill="#4a231b"/><rect x="8.7" y="92.9" width="12.0" height="5.4" fill="#592c21"/><rect x="21.9" y="92.9" width="10.1" height="5.4" fill="#552b21"/><rect x="33.2" y="92.9" width="10.8" height="5.4" fill="#4b261e"/><rect x="45.1" y="92.9" width="13.1" height="5.4" fill="#4d2d25"/><rect x="59.5" y="92.9" width="12.5" height="5.4" fill="#52281e"/><rect x="-8.1" y="99.5" width="12.4" height="5.4" fill="#522a20"/><rect x="5.5" y="99.5" width="12.1" height="5.4" fill="#552a20"/><rect x="18.8" y="99.5" width="11.6" height="5.4" fill="#4c261c"/><rect x="31.7" y="99.5" width="13.1" height="5.4" fill="#532a20"/><rect x="46.0" y="99.5" width="12.4" height="5.4" fill="#49261c"/><rect x="59.6" y="99.5" width="12.8" height="5.4" fill="#572b21"/><rect x="-12.8" y="106.1" width="11.7" height="5.4" fill="#4b231b"/><rect x="0.2" y="106.1" width="10.6" height="5.4" fill="#49231b"/><rect x="12.0" y="106.1" width="11.2" height="5.4" fill="#4d261d"/><rect x="24.4" y="106.1" width="11.3" height="5.4" fill="#572a20"/><rect x="36.9" y="106.1" width="13.3" height="5.4" fill="#53281f"/><rect x="51.4" y="106.1" width="10.1" height="5.4" fill="#4c261c"/><rect x="-7.6" y="112.6" width="13.1" height="5.4" fill="#53291f"/><rect x="6.7" y="112.6" width="10.8" height="5.4" fill="#4b261e"/><rect x="18.8" y="112.6" width="12.1" height="5.4" fill="#4d271e"/><rect x="32.1" y="112.6" width="10.5" height="5.4" fill="#53281e"/><rect x="43.8" y="112.6" width="11.2" height="5.4" fill="#4c261d"/><rect x="56.1" y="112.6" width="13.4" height="5.4" fill="#592c21"/><rect x="-12.6" y="119.2" width="12.3" height="5.4" fill="#552b21"/><rect x="0.9" y="119.2" width="12.3" height="5.4" fill="#51281e"/><rect x="14.3" y="119.2" width="10.4" height="5.4" fill="#4b261c"/><rect x="25.9" y="119.2" width="12.4" height="5.4" fill="#48231b"/><rect x="39.5" y="119.2" width="11.9" height="5.4" fill="#582a20"/><rect x="52.6" y="119.2" width="13.2" height="5.4" fill="#4a241b"/><rect x="-7.9" y="125.8" width="10.5" height="5.4" fill="#4d271e"/><rect x="3.8" y="125.8" width="13.1" height="5.4" fill="#49251c"/><rect x="18.1" y="125.8" width="12.3" height="5.4" fill="#50281f"/><rect x="31.7" y="125.8" width="11.7" height="5.4" fill="#572c21"/><rect x="44.6" y="125.8" width="13.5" height="5.4" fill="#4e261d"/><rect x="59.3" y="125.8" width="11.3" height="5.4" fill="#51291f"/><rect x="-14.0" y="132.4" width="12.7" height="5.4" fill="#52271e"/><rect x="-0.1" y="132.4" width="12.3" height="5.4" fill="#52291f"/><rect x="13.4" y="132.4" width="11.0" height="5.4" fill="#43221a"/><rect x="25.6" y="132.4" width="12.9" height="5.4" fill="#50261d"/><rect x="39.7" y="132.4" width="13.4" height="5.4" fill="#4a231b"/><rect x="54.3" y="132.4" width="11.1" height="5.4" fill="#4b251c"/><rect x="-6.1" y="139.0" width="10.0" height="5.4" fill="#49231b"/><rect x="5.2" y="139.0" width="10.5" height="5.4" fill="#49231b"/><rect x="16.9" y="139.0" width="11.8" height="5.4" fill="#4e281e"/><rect x="29.8" y="139.0" width="10.4" height="5.4" fill="#4a251c"/><rect x="41.4" y="139.0" width="13.4" height="5.4" fill="#582b21"/><rect x="56.0" y="139.0" width="12.9" height="5.4" fill="#47231b"/><rect x="-14.1" y="145.6" width="12.9" height="5.4" fill="#47251c"/><rect x="0.1" y="145.6" width="13.4" height="5.4" fill="#49231b"/><rect x="14.7" y="145.6" width="10.6" height="5.4" fill="#572a20"/><rect x="26.4" y="145.6" width="12.4" height="5.4" fill="#452922"/><rect x="40.0" y="145.6" width="11.8" height="5.4" fill="#452822"/><rect x="53.0" y="145.6" width="12.0" height="5.4" fill="#582b21"/><rect x="-8.3" y="152.2" width="13.6" height="5.4" fill="#55291f"/><rect x="6.6" y="152.2" width="9.9" height="5.4" fill="#4f271e"/><rect x="17.7" y="152.2" width="10.4" height="5.4" fill="#49261c"/><rect x="29.3" y="152.2" width="12.3" height="5.4" fill="#4a251c"/><rect x="42.7" y="152.2" width="10.9" height="5.4" fill="#50271e"/><rect x="54.9" y="152.2" width="12.9" height="5.4" fill="#4f291f"/><rect x="-14.4" y="158.8" width="11.3" height="5.4" fill="#432821"/><rect x="-1.9" y="158.8" width="10.3" height="5.4" fill="#44231b"/><rect x="9.6" y="158.8" width="10.4" height="5.4" fill="#4f281e"/><rect x="21.2" y="158.8" width="13.6" height="5.4" fill="#4e281e"/><rect x="36.1" y="158.8" width="13.1" height="5.4" fill="#552a20"/><rect x="50.3" y="158.8" width="10.7" height="5.4" fill="#4a261d"/><rect x="-6.7" y="165.4" width="12.1" height="5.4" fill="#52291f"/><rect x="6.5" y="165.4" width="13.1" height="5.4" fill="#51291f"/><rect x="20.8" y="165.4" width="12.8" height="5.4" fill="#4c261e"/><rect x="34.8" y="165.4" width="9.9" height="5.4" fill="#51281e"/><rect x="45.9" y="165.4" width="10.2" height="5.4" fill="#4e271e"/><rect x="57.3" y="165.4" width="11.1" height="5.4" fill="#50281e"/><rect x="-14.0" y="172.0" width="13.7" height="5.4" fill="#532b21"/><rect x="0.9" y="172.0" width="13.3" height="5.4" fill="#4a261c"/><rect x="15.4" y="172.0" width="10.1" height="5.4" fill="#4a261c"/><rect x="26.6" y="172.0" width="12.4" height="5.4" fill="#51291f"/><rect x="40.3" y="172.0" width="10.2" height="5.4" fill="#552c21"/><rect x="51.7" y="172.0" width="12.7" height="5.4" fill="#582a20"/><rect x="-6.7" y="178.6" width="10.0" height="5.4" fill="#4a251c"/><rect x="4.5" y="178.6" width="10.1" height="5.4" fill="#572c21"/><rect x="15.8" y="178.6" width="11.7" height="5.4" fill="#48251c"/><rect x="28.7" y="178.6" width="13.1" height="5.4" fill="#53291f"/><rect x="43.0" y="178.6" width="13.0" height="5.4" fill="#4a241b"/><rect x="57.2" y="178.6" width="13.4" height="5.4" fill="#50281e"/><rect x="-15.4" y="185.1" width="13.1" height="5.4" fill="#50291f"/><rect x="-1.0" y="185.1" width="10.5" height="5.4" fill="#50271e"/><rect x="10.7" y="185.1" width="10.3" height="5.4" fill="#52281f"/><rect x="22.2" y="185.1" width="10.8" height="5.4" fill="#47231b"/><rect x="34.2" y="185.1" width="13.5" height="5.4" fill="#472922"/><rect x="48.9" y="185.1" width="12.4" height="5.4" fill="#552b21"/><rect x="-8.4" y="191.7" width="12.1" height="5.4" fill="#4b241b"/><rect x="4.8" y="191.7" width="10.2" height="5.4" fill="#51291f"/><rect x="16.2" y="191.7" width="12.3" height="5.4" fill="#482b23"/><rect x="29.7" y="191.7" width="11.7" height="5.4" fill="#572a20"/><rect x="42.6" y="191.7" width="10.4" height="5.4" fill="#542b21"/><rect x="54.2" y="191.7" width="11.6" height="5.4" fill="#54291f"/><rect x="-12.8" y="198.3" width="13.7" height="5.4" fill="#4d271e"/><rect x="2.0" y="198.3" width="11.9" height="5.4" fill="#50281e"/><rect x="15.1" y="198.3" width="12.3" height="5.4" fill="#48251c"/><rect x="28.6" y="198.3" width="12.0" height="5.4" fill="#582b21"/><rect x="41.8" y="198.3" width="12.5" height="5.4" fill="#472922"/><rect x="55.4" y="198.3" width="13.1" height="5.4" fill="#47231b"/><rect x="-8.2" y="204.9" width="12.0" height="5.4" fill="#4f291f"/><rect x="5.0" y="204.9" width="9.9" height="5.4" fill="#49231b"/><rect x="16.1" y="204.9" width="11.0" height="5.4" fill="#47251c"/><rect x="28.4" y="204.9" width="13.4" height="5.4" fill="#572a20"/><rect x="43.0" y="204.9" width="11.8" height="5.4" fill="#4b2c25"/><rect x="56.0" y="204.9" width="10.5" height="5.4" fill="#4a261d"/><rect x="-15.3" y="211.5" width="9.9" height="5.4" fill="#3d2620"/><rect x="-4.2" y="211.5" width="12.8" height="5.4" fill="#4b261d"/><rect x="9.8" y="211.5" width="11.2" height="5.4" fill="#592b21"/><rect x="22.2" y="211.5" width="11.6" height="5.4" fill="#522a20"/><rect x="35.0" y="211.5" width="11.6" height="5.4" fill="#552a20"/><rect x="47.7" y="211.5" width="10.9" height="5.4" fill="#4a261d"/><rect x="59.9" y="211.5" width="10.9" height="5.4" fill="#52291f"/><rect x="-6.7" y="218.1" width="12.8" height="5.4" fill="#462922"/><rect x="7.4" y="218.1" width="10.2" height="5.4" fill="#44221a"/><rect x="18.8" y="218.1" width="13.5" height="5.4" fill="#54291f"/><rect x="33.4" y="218.1" width="13.4" height="5.4" fill="#50261d"/><rect x="48.1" y="218.1" width="10.1" height="5.4" fill="#542b21"/><rect x="59.4" y="218.1" width="10.5" height="5.4" fill="#54291f"/><rect x="-13.3" y="224.7" width="12.7" height="5.4" fill="#43231b"/><rect x="0.6" y="224.7" width="11.1" height="5.4" fill="#4e261d"/><rect x="12.9" y="224.7" width="12.6" height="5.4" fill="#47241b"/><rect x="26.7" y="224.7" width="11.5" height="5.4" fill="#49231b"/><rect x="39.4" y="224.7" width="11.3" height="5.4" fill="#4d261c"/><rect x="51.9" y="224.7" width="10.1" height="5.4" fill="#432821"/><rect x="-6.9" y="231.3" width="10.8" height="5.4" fill="#46251c"/><rect x="5.1" y="231.3" width="10.7" height="5.4" fill="#56291f"/><rect x="16.9" y="231.3" width="12.7" height="5.4" fill="#49251c"/><rect x="30.8" y="231.3" width="13.7" height="5.4" fill="#55291f"/><rect x="45.7" y="231.3" width="10.4" height="5.4" fill="#542a20"/><rect x="57.3" y="231.3" width="10.2" height="5.4" fill="#47251c"/><rect x="-14.3" y="237.9" width="10.2" height="5.4" fill="#49231b"/><rect x="-2.9" y="237.9" width="11.7" height="5.4" fill="#4b231b"/><rect x="10.1" y="237.9" width="11.8" height="5.4" fill="#4b261e"/><rect x="23.0" y="237.9" width="10.4" height="5.4" fill="#4b271e"/><rect x="34.7" y="237.9" width="10.0" height="5.4" fill="#43231b"/><rect x="45.8" y="237.9" width="10.8" height="5.4" fill="#49261c"/><rect x="57.8" y="237.9" width="10.5" height="5.4" fill="#50261e"/><rect x="-6.1" y="244.5" width="13.2" height="5.4" fill="#47231b"/><rect x="8.3" y="244.5" width="12.5" height="5.4" fill="#532b21"/><rect x="22.0" y="244.5" width="12.4" height="5.4" fill="#50261e"/><rect x="35.5" y="244.5" width="11.9" height="5.4" fill="#4f271e"/><rect x="48.6" y="244.5" width="12.0" height="5.4" fill="#4b261d"/><rect x="-14.2" y="251.1" width="13.5" height="5.4" fill="#54291f"/><rect x="0.6" y="251.1" width="13.6" height="5.4" fill="#552a20"/><rect x="15.4" y="251.1" width="12.2" height="5.4" fill="#51291f"/><rect x="28.8" y="251.1" width="13.1" height="5.4" fill="#4f2d25"/><rect x="43.0" y="251.1" width="11.8" height="5.4" fill="#572a20"/><rect x="56.0" y="251.1" width="10.7" height="5.4" fill="#51281e"/><rect x="-6.4" y="257.6" width="13.4" height="5.4" fill="#562b21"/><rect x="8.2" y="257.6" width="12.0" height="5.4" fill="#4e261c"/><rect x="21.4" y="257.6" width="11.6" height="5.4" fill="#46241b"/><rect x="34.2" y="257.6" width="12.0" height="5.4" fill="#542a20"/><rect x="47.3" y="257.6" width="10.9" height="5.4" fill="#53291f"/><rect x="59.4" y="257.6" width="11.6" height="5.4" fill="#52281f"/><rect x="-12.6" y="264.2" width="12.3" height="5.4" fill="#4a231b"/><rect x="0.9" y="264.2" width="11.9" height="5.4" fill="#49231b"/><rect x="14.0" y="264.2" width="10.0" height="5.4" fill="#52291f"/><rect x="25.1" y="264.2" width="13.4" height="5.4" fill="#43221a"/><rect x="39.8" y="264.2" width="11.6" height="5.4" fill="#542c21"/><rect x="52.5" y="264.2" width="13.1" height="5.4" fill="#4f2d25"/><rect x="-6.9" y="270.8" width="10.6" height="5.4" fill="#4a261d"/><rect x="4.9" y="270.8" width="13.5" height="5.4" fill="#4f281e"/><rect x="19.5" y="270.8" width="10.6" height="5.4" fill="#4b261d"/><rect x="31.3" y="270.8" width="10.3" height="5.4" fill="#47241b"/><rect x="42.8" y="270.8" width="12.2" height="5.4" fill="#552b21"/><rect x="56.2" y="270.8" width="12.3" height="5.4" fill="#452a22"/><rect x="-14.1" y="277.4" width="11.5" height="5.4" fill="#54291f"/><rect x="-1.4" y="277.4" width="11.8" height="5.4" fill="#52281e"/><rect x="11.6" y="277.4" width="12.5" height="5.4" fill="#49231b"/><rect x="25.3" y="277.4" width="10.9" height="5.4" fill="#50271e"/><rect x="37.4" y="277.4" width="13.5" height="5.4" fill="#432821"/><rect x="52.1" y="277.4" width="10.8" height="5.4" fill="#50271e"/><rect x="-8.3" y="284.0" width="10.2" height="5.4" fill="#4a261d"/><rect x="3.0" y="284.0" width="12.4" height="5.4" fill="#4a251c"/><rect x="16.6" y="284.0" width="9.9" height="5.4" fill="#582c21"/><rect x="27.7" y="284.0" width="12.2" height="5.4" fill="#3e251f"/><rect x="41.1" y="284.0" width="12.8" height="5.4" fill="#48241b"/><rect x="55.1" y="284.0" width="12.3" height="5.4" fill="#582a20"/><rect width="60" height="290" filter="url(#nzs)" opacity="1"/></svg></div><svg class="a" style="left:0;top:0" width="1280" height="994"><polygon points="792,480 840,468 875,468 828,483" fill="#65676c"/><polyline points="875,697 826,770" stroke="#000" stroke-width="3" fill="none"/><g fill="none" stroke="#000" stroke-linejoin="miter"><polyline points="237,474 792,480 840,468 875,468 875,697" stroke-width="2.6"/><line x1="875" y1="697" x2="826" y2="770" stroke-width="3"/><polyline points="792,480 828,483 875,468" stroke-width="1.5"/><line x1="828" y1="483" x2="826" y2="770" stroke-width="1.5"/><line x1="785" y1="481" x2="784" y2="767" stroke-width="2.2"/><line x1="237" y1="474" x2="242" y2="732" stroke-width="2.4"/><line x1="242" y1="732" x2="826" y2="770" stroke-width="2.6" stroke="#300000"/></g><line x1="242" y1="732" x2="236.9" y2="476" stroke="#10107a" stroke-width="1.9"/><g stroke="#000" stroke-linejoin="miter"><polygon points="453,499 579,501 579,755.5 455,747.5" fill="#fff" stroke="none"/><polyline points="455,748 453,499 579,501 579,756" fill="none" stroke-width="1.8"/><polygon points="461.5,508 466.5,508 467.5,746 461.5,746" fill="#a8a8a8" stroke-width="1"/><polygon points="466.5,508.5 569,510 568.5,752 467.5,746.2" fill="#fff" stroke-width="1.2"/><line x1="461" y1="745.8" x2="569" y2="752.6" stroke-width="2.4"/><line x1="455" y1="747.6" x2="462" y2="748.1" stroke-width="2.2"/><line x1="568.5" y1="754.6" x2="579.5" y2="755.6" stroke-width="2.4"/><line x1="461" y1="508.2" x2="569" y2="510" stroke-width="2.2"/><line x1="569" y1="510" x2="568.5" y2="751" stroke-width="1.6"/><polygon points="486.8,525 552.4,526.2 552.5,640 487.2,639" fill="#4b4d55" stroke-width="2.2"/><g stroke-width="1.2" fill="none"><line x1="510" y1="525.5" x2="510.6" y2="639.5"/><line x1="531" y1="525.8" x2="531.6" y2="639.8"/><line x1="487" y1="553" x2="552.5" y2="554"/><line x1="487" y1="581.5" x2="552.5" y2="582.5"/><line x1="487.1" y1="610.5" x2="552.5" y2="611.5"/></g><polygon points="487.5,648.3 513.2,649.5 513.2,726.5 487.5,724.8" fill="#fff" stroke-width="1.6"/><path d="M487.5,648.9 L513.2,650.1 L512.6,726.5" fill="none" stroke-width="2.4"/><polygon points="490.5,651.8 510.20000000000005,653.0 510.20000000000005,723.5 490.5,721.8" fill="none" stroke-width="0.9" stroke="#333"/><polygon points="494.8,658.8 504.70000000000005,660.0 504.70000000000005,717.7 494.8,716.0" fill="none" stroke-width="1" stroke="#707070"/><g stroke-width="0.9" stroke="#333"><line x1="490.5" y1="651.8" x2="494.8" y2="658.8"/><line x1="510.20000000000005" y1="653.0" x2="504.70000000000005" y2="660.0"/><line x1="510.20000000000005" y1="723.5" x2="504.70000000000005" y2="717.7"/><line x1="490.5" y1="721.8" x2="494.8" y2="716.0"/></g><line x1="494.8" y1="658.8" x2="504.70000000000005" y2="660.0" stroke="#333" stroke-width="0.9"/><line x1="494.8" y1="716.0" x2="504.70000000000005" y2="717.7" stroke="#333" stroke-width="0.9"/><polygon points="527,650.2 553,651.5 553,728.5 527,726.7" fill="#fff" stroke-width="1.6"/><path d="M527,650.8000000000001 L553,652.1 L552.4,728.5" fill="none" stroke-width="2.4"/><polygon points="530,653.7 550,655.0 550,725.5 530,723.7" fill="none" stroke-width="0.9" stroke="#333"/><polygon points="534.3,660.7 544.5,662.0 544.5,719.7 534.3,717.9000000000001" fill="none" stroke-width="1" stroke="#707070"/><g stroke-width="0.9" stroke="#333"><line x1="530" y1="653.7" x2="534.3" y2="660.7"/><line x1="550" y1="655.0" x2="544.5" y2="662.0"/><line x1="550" y1="725.5" x2="544.5" y2="719.7"/><line x1="530" y1="723.7" x2="534.3" y2="717.9000000000001"/></g><line x1="534.3" y1="660.7" x2="544.5" y2="662.0" stroke="#333" stroke-width="0.9"/><line x1="534.3" y1="717.9000000000001" x2="544.5" y2="719.7" stroke="#333" stroke-width="0.9"/></g><line x1="242" y1="732.8" x2="826" y2="770.8" stroke="#b00a0a" stroke-width="1.3"/></svg><div class="a" style="left:20px;top:103px;width:241px;height:369px;border:1px solid #30363c;box-shadow:0 0 5px rgba(0,0,0,0.3),2px 3px 7px rgba(0,0,0,0.45);background:#c9d1d3"><div class="a" style="left:0;top:0;width:239px;height:367px;border:1px solid #fff;border-bottom-color:#f4f6f6;background:linear-gradient(90deg,#d8e4ec 0px,#d6e3ec 40px,#d4e2ec 90px,#d8e5ee 120px,#d4e2ec 160px,#d4e2ec 204px,#ccdcf0 206px,#ccdcf0 212px,#d4e2ec 214px,#d2e0ea 239px)"></div></div><div class="a" style="left:22px;top:121px;width:3px;height:349px;background:linear-gradient(#d4e0e6,#c2cacb 40px,#c2cacb)"></div><div class="a" style="left:25px;top:121px;width:1px;height:349px;background:linear-gradient(rgba(255,255,255,0),#fafbfb 30px)"></div><div class="a" style="left:256px;top:121px;width:1px;height:349px;background:linear-gradient(rgba(255,255,255,0),#fafbfb 30px)"></div><div class="a" style="left:257px;top:121px;width:3px;height:349px;background:linear-gradient(#d4e0e6,#c2cacb 40px,#c2cacb)"></div><div class="a" style="left:25px;top:465px;width:232px;height:1px;background:#fafbfb"></div><div class="a" style="left:22px;top:466px;width:238px;height:3px;background:#c2cacb"></div><div class="a" style="left:28.5px;top:108.5px;font-size:12px;color:#3b4b5b">Materials</div><div class="a" style="left:238px;top:108px;width:17px;height:17px;border:1px solid #6f7d89;border-radius:3px;background:linear-gradient(#e9eff3,#d5dfe6)"><svg width="15" height="15" style="position:absolute;left:0;top:0"><path d="M5.8,5.8 L9.2,9.2 M9.2,5.8 L5.8,9.2" stroke="#3c4650" stroke-width="3.3" stroke-linecap="square"/><path d="M5.8,5.8 L9.2,9.2 M9.2,5.8 L5.8,9.2" stroke="#fff" stroke-width="1.4" stroke-linecap="square"/></svg></div><div class="a" style="left:26px;top:127px;width:229px;height:339px;border:1px solid #000;background:#fff"><div class="a" style="left:0;top:0;width:227px;height:134px;background:#f0f0f0"></div></div><div class="a" style="left:30px;top:131px;width:66px;height:71px;border:1px solid #a0a0a0;background:#f0f0f0;overflow:hidden"><div class="a" style="left:0;top:13px;width:64px;height:43px;overflow:hidden"><svg width="64" height="43" style="position:absolute;left:0;top:0;display:block"><rect width="64" height="43" fill="#d0c49a"/><rect x="-9.5" y="0.4" width="7.8" height="2.3" fill="#965a44"/><rect x="-0.9" y="0.4" width="7.1" height="2.3" fill="#8a4d36"/><rect x="7.0" y="0.4" width="6.3" height="2.3" fill="#955038"/><rect x="14.1" y="0.4" width="6.2" height="2.3" fill="#8a4d36"/><rect x="21.1" y="0.4" width="7.0" height="2.3" fill="#8e4c35"/><rect x="28.9" y="0.4" width="7.9" height="2.3" fill="#904b34"/><rect x="37.6" y="0.4" width="6.3" height="2.3" fill="#834933"/><rect x="44.7" y="0.4" width="6.5" height="2.3" fill="#8a4c35"/><rect x="52.1" y="0.4" width="8.3" height="2.3" fill="#975139"/><rect x="61.2" y="0.4" width="8.3" height="2.3" fill="#8f4c35"/><rect x="-4.7" y="3.5" width="6.4" height="2.3" fill="#7d4f3c"/><rect x="2.5" y="3.5" width="6.7" height="2.3" fill="#915642"/><rect x="10.0" y="3.5" width="7.6" height="2.3" fill="#8e4e37"/><rect x="18.5" y="3.5" width="8.0" height="2.3" fill="#975038"/><rect x="27.2" y="3.5" width="7.1" height="2.3" fill="#884c35"/><rect x="35.2" y="3.5" width="8.3" height="2.3" fill="#9f543b"/><rect x="44.2" y="3.5" width="6.0" height="2.3" fill="#a2563c"/><rect x="51.1" y="3.5" width="7.4" height="2.3" fill="#7c4d3b"/><rect x="59.2" y="3.5" width="6.4" height="2.3" fill="#8a4c35"/><rect x="-10.4" y="6.5" width="8.3" height="2.3" fill="#964f37"/><rect x="-1.3" y="6.5" width="7.3" height="2.3" fill="#945944"/><rect x="6.7" y="6.5" width="7.8" height="2.3" fill="#a1563c"/><rect x="15.3" y="6.5" width="6.1" height="2.3" fill="#884a34"/><rect x="22.2" y="6.5" width="7.5" height="2.3" fill="#8c4b34"/><rect x="30.5" y="6.5" width="7.7" height="2.3" fill="#894a34"/><rect x="39.0" y="6.5" width="6.7" height="2.3" fill="#9d563c"/><rect x="46.5" y="6.5" width="7.7" height="2.3" fill="#934e36"/><rect x="55.0" y="6.5" width="6.1" height="2.3" fill="#9e523a"/><rect x="61.9" y="6.5" width="6.1" height="2.3" fill="#a3543b"/><rect x="-4.4" y="9.6" width="7.6" height="2.3" fill="#874b34"/><rect x="4.0" y="9.6" width="7.5" height="2.3" fill="#a3563c"/><rect x="12.3" y="9.6" width="6.5" height="2.3" fill="#a3543b"/><rect x="19.6" y="9.6" width="7.5" height="2.3" fill="#945a44"/><rect x="28.0" y="9.6" width="7.0" height="2.3" fill="#874b34"/><rect x="35.8" y="9.6" width="6.7" height="2.3" fill="#9a5038"/><rect x="43.3" y="9.6" width="8.3" height="2.3" fill="#985038"/><rect x="52.4" y="9.6" width="6.8" height="2.3" fill="#8f4d36"/><rect x="60.0" y="9.6" width="8.2" height="2.3" fill="#8c4a34"/><rect x="-9.2" y="12.7" width="6.4" height="2.3" fill="#975038"/><rect x="-2.0" y="12.7" width="7.2" height="2.3" fill="#9b5138"/><rect x="6.0" y="12.7" width="6.9" height="2.3" fill="#a1563c"/><rect x="13.7" y="12.7" width="7.6" height="2.3" fill="#9f553c"/><rect x="22.1" y="12.7" width="7.7" height="2.3" fill="#924d36"/><rect x="30.6" y="12.7" width="8.4" height="2.3" fill="#9d543b"/><rect x="39.7" y="12.7" width="6.8" height="2.3" fill="#914c35"/><rect x="47.3" y="12.7" width="7.1" height="2.3" fill="#9f553c"/><rect x="55.3" y="12.7" width="6.7" height="2.3" fill="#944e36"/><rect x="62.7" y="12.7" width="7.9" height="2.3" fill="#924f37"/><rect x="-5.8" y="15.8" width="8.0" height="2.3" fill="#904f37"/><rect x="3.0" y="15.8" width="7.7" height="2.3" fill="#934f37"/><rect x="11.4" y="15.8" width="7.3" height="2.3" fill="#8b4c35"/><rect x="19.5" y="15.8" width="8.2" height="2.3" fill="#965038"/><rect x="28.5" y="15.8" width="7.7" height="2.3" fill="#a0543b"/><rect x="37.1" y="15.8" width="7.9" height="2.3" fill="#9d5239"/><rect x="45.7" y="15.8" width="7.0" height="2.3" fill="#9e523a"/><rect x="53.6" y="15.8" width="7.5" height="2.3" fill="#9a543b"/><rect x="61.9" y="15.8" width="7.4" height="2.3" fill="#98523a"/><rect x="-9.7" y="18.8" width="7.5" height="2.3" fill="#8b4933"/><rect x="-1.3" y="18.8" width="6.4" height="2.3" fill="#935b45"/><rect x="5.9" y="18.8" width="8.3" height="2.3" fill="#955038"/><rect x="15.0" y="18.8" width="7.0" height="2.3" fill="#944f37"/><rect x="22.8" y="18.8" width="6.2" height="2.3" fill="#8c4c35"/><rect x="29.7" y="18.8" width="6.9" height="2.3" fill="#944f37"/><rect x="37.4" y="18.8" width="8.1" height="2.3" fill="#9f573d"/><rect x="46.3" y="18.8" width="7.3" height="2.3" fill="#8c4933"/><rect x="54.4" y="18.8" width="6.2" height="2.3" fill="#9c5139"/><rect x="61.4" y="18.8" width="7.4" height="2.3" fill="#904f37"/><rect x="-6.0" y="21.9" width="7.5" height="2.3" fill="#87533f"/><rect x="2.3" y="21.9" width="7.4" height="2.3" fill="#9c5239"/><rect x="10.5" y="21.9" width="8.3" height="2.3" fill="#97523a"/><rect x="19.7" y="21.9" width="8.1" height="2.3" fill="#7b4d3b"/><rect x="28.6" y="21.9" width="7.4" height="2.3" fill="#905642"/><rect x="36.8" y="21.9" width="7.5" height="2.3" fill="#a8573d"/><rect x="45.1" y="21.9" width="7.0" height="2.3" fill="#914d36"/><rect x="52.9" y="21.9" width="8.3" height="2.3" fill="#954f38"/><rect x="62.0" y="21.9" width="8.2" height="2.3" fill="#9f523a"/><rect x="-10.5" y="25.0" width="7.2" height="2.3" fill="#905038"/><rect x="-2.6" y="25.0" width="8.4" height="2.3" fill="#885440"/><rect x="6.6" y="25.0" width="6.1" height="2.3" fill="#a1533a"/><rect x="13.5" y="25.0" width="6.6" height="2.3" fill="#864933"/><rect x="20.9" y="25.0" width="6.0" height="2.3" fill="#9c5139"/><rect x="27.7" y="25.0" width="8.2" height="2.3" fill="#9c563c"/><rect x="36.7" y="25.0" width="6.6" height="2.3" fill="#8b4b34"/><rect x="44.2" y="25.0" width="7.5" height="2.3" fill="#9a5038"/><rect x="52.4" y="25.0" width="7.4" height="2.3" fill="#8d5843"/><rect x="60.7" y="25.0" width="6.3" height="2.3" fill="#944e36"/><rect x="-5.4" y="28.0" width="7.8" height="2.3" fill="#8a4933"/><rect x="3.1" y="28.0" width="7.6" height="2.3" fill="#985a44"/><rect x="11.6" y="28.0" width="6.0" height="2.3" fill="#9b5139"/><rect x="18.4" y="28.0" width="6.3" height="2.3" fill="#a0533a"/><rect x="25.4" y="28.0" width="7.0" height="2.3" fill="#a2563c"/><rect x="33.2" y="28.0" width="7.7" height="2.3" fill="#9e533a"/><rect x="41.7" y="28.0" width="8.0" height="2.3" fill="#985038"/><rect x="50.5" y="28.0" width="7.7" height="2.3" fill="#a3573d"/><rect x="59.0" y="28.0" width="7.8" height="2.3" fill="#8c4e36"/><rect x="-8.9" y="31.1" width="6.7" height="2.3" fill="#a2553c"/><rect x="-1.4" y="31.1" width="6.3" height="2.3" fill="#9a5038"/><rect x="5.7" y="31.1" width="8.3" height="2.3" fill="#965139"/><rect x="14.9" y="31.1" width="7.3" height="2.3" fill="#854933"/><rect x="23.0" y="31.1" width="6.6" height="2.3" fill="#864a34"/><rect x="30.4" y="31.1" width="6.1" height="2.3" fill="#a0543b"/><rect x="37.3" y="31.1" width="8.4" height="2.3" fill="#925843"/><rect x="46.5" y="31.1" width="8.0" height="2.3" fill="#934d36"/><rect x="55.3" y="31.1" width="8.3" height="2.3" fill="#9b543b"/><rect x="64.4" y="31.1" width="7.7" height="2.3" fill="#935038"/><rect x="-4.2" y="34.2" width="7.9" height="2.3" fill="#8e4a34"/><rect x="4.6" y="34.2" width="7.3" height="2.3" fill="#9e533a"/><rect x="12.7" y="34.2" width="6.7" height="2.3" fill="#905641"/><rect x="20.2" y="34.2" width="7.0" height="2.3" fill="#8a5642"/><rect x="27.9" y="34.2" width="6.2" height="2.3" fill="#a1533a"/><rect x="34.9" y="34.2" width="6.8" height="2.3" fill="#9c533a"/><rect x="42.6" y="34.2" width="6.3" height="2.3" fill="#8e4e36"/><rect x="49.7" y="34.2" width="7.6" height="2.3" fill="#944e36"/><rect x="58.2" y="34.2" width="6.5" height="2.3" fill="#8d4a34"/><rect x="-10.1" y="37.3" width="6.7" height="2.3" fill="#8a4b34"/><rect x="-2.6" y="37.3" width="7.1" height="2.3" fill="#835340"/><rect x="5.3" y="37.3" width="6.0" height="2.3" fill="#8e4e37"/><rect x="12.1" y="37.3" width="6.1" height="2.3" fill="#9f573d"/><rect x="19.0" y="37.3" width="7.1" height="2.3" fill="#964f38"/><rect x="26.9" y="37.3" width="6.8" height="2.3" fill="#965a44"/><rect x="34.5" y="37.3" width="7.7" height="2.3" fill="#864933"/><rect x="43.0" y="37.3" width="7.0" height="2.3" fill="#9f563c"/><rect x="50.8" y="37.3" width="6.2" height="2.3" fill="#9f533a"/><rect x="57.8" y="37.3" width="6.3" height="2.3" fill="#9c523a"/><rect x="-4.3" y="40.3" width="6.8" height="2.3" fill="#9b523a"/><rect x="3.3" y="40.3" width="6.9" height="2.3" fill="#9f543b"/><rect x="11.0" y="40.3" width="7.9" height="2.3" fill="#955038"/><rect x="19.7" y="40.3" width="7.4" height="2.3" fill="#985239"/><rect x="28.0" y="40.3" width="6.9" height="2.3" fill="#784e3c"/><rect x="35.7" y="40.3" width="6.5" height="2.3" fill="#8b4933"/><rect x="43.0" y="40.3" width="7.2" height="2.3" fill="#925944"/><rect x="50.9" y="40.3" width="7.1" height="2.3" fill="#a8573d"/><rect x="58.9" y="40.3" width="6.8" height="2.3" fill="#925038"/><rect width="64" height="43" filter="url(#nzs)" opacity="0.8"/></svg></div><svg class="a" style="left:49px;top:55px" width="15" height="14"><path d="M1,13.5 L13.5,1.5 L13.5,13.5 Z" fill="#fff" stroke="#555" stroke-width="1"/></svg></div><div class="a" style="left:99px;top:131px;width:125px;height:19px;background:#fff;border-top:2px solid #7a7a7a;border-left:2px solid #7a7a7a;border-right:1px solid #e4e4e4;border-bottom:1px solid #e4e4e4"></div><div class="a" style="left:104.5px;top:134.5px;font-size:11px;letter-spacing:-0.45px;color:#000">Brick_Antique</div><svg class="a" style="left:232px;top:130px" width="20" height="72"><rect x="1.5" y="1.5" width="13" height="7" fill="#fff" stroke="#ccc" stroke-width="1"/><path d="M3.5,3 L12.5,3 L8,7.5 Z" fill="#000"/><rect x="1.5" y="9" width="13" height="10" fill="#000"/><path d="M8,10.5 V17.5 M4.5,14 H11.5" stroke="#fff" stroke-width="2.4"/><path d="M5,30 L10,25 L19,27 L19,36 L13,43 L5,41 Z" fill="#2a2418"/><path d="M5,30 L10,25 L19,27 L14,31 Z" fill="#6a5a3c"/><path d="M7,28.5 L15,30 M6,33 L14,34.5 M6,36 L14,37.5 M14,34.5 L19,30 M14,37.5 L19,33" stroke="#b8a478" stroke-width="0.9"/><circle cx="6.5" cy="40" r="5" fill="#fff" stroke="#000" stroke-width="1.4"/><path d="M6.5,37 V43 M3.5,40 H9.5" stroke="#000" stroke-width="1.8"/></svg><svg class="a" style="left:230px;top:180px" width="21" height="21"><rect x="0.5" y="0.5" width="19" height="19" fill="#fff" stroke="#b0b0b0" stroke-width="1"/><path d="M1,1.5 L19,19.5 L1,19.5 Z" fill="#a8acca"/></svg><div class="a" style="left:27px;top:204px;width:227px;height:1px;background:#a0a0a0"></div><div class="a" style="left:27px;top:205px;width:227px;height:1px;background:#fff"></div><div class="a" style="left:27px;top:211px;width:45px;height:21px;border-right:1px solid #8a8a8a;background:#f0f0f0"></div><div class="a" style="left:73px;top:213px;width:40px;height:18px;border-right:1px solid #8a8a8a;border-top:1px solid #fff;background:#f0f0f0"></div><div class="a" style="left:73px;top:230px;width:181px;height:1px;background:#fff"></div><div class="a" style="left:34px;top:213.5px;font-size:11px;letter-spacing:-0.1px">Select</div><div class="a" style="left:76.5px;top:216px;font-size:11px">Edit</div><svg class="a" style="left:228px;top:206px" width="22" height="22"><path d="M7,18 Q13,15.5 20,15" stroke="#999" stroke-width="1.2" fill="none"/><path d="M4.5,19 L13,10" stroke="#222" stroke-width="3"/><path d="M4.8,18.7 L12.8,10.2" stroke="#fff" stroke-width="1.6"/><path d="M4.8,18.7 L8.5,14.8" stroke="#f07010" stroke-width="2"/><path d="M11.5,8.5 L15.5,12.5" stroke="#000" stroke-width="2.6"/><path d="M14,7 L17.5,3 C18.5,2.2 20,3.5 19.5,4.5 L16,9 Z" fill="#000"/><path d="M3.5,20 L5,18.2" stroke="#000" stroke-width="1.4"/></svg><svg class="a" style="left:33px;top:236px" width="70" height="20"><path d="M2,9.5 L9,2 L9,6 L15,6 L15,13 L9,13 L9,17 Z" fill="#fff" stroke="#000" stroke-width="2.2" stroke-linejoin="miter"/><path d="M40,9.5 L33,2.5 L33,6 L26.5,6 L26.5,13 L33,13 L33,16.5 Z" fill="#fff" stroke="#8a8a8a" stroke-width="1.8"/><path d="M49,10 L57,2.5 L65,10 M51.5,8.5 V17.5 H62.5 V8.5" fill="#fff" stroke="#000" stroke-width="2.2"/><rect x="55.5" y="12" width="3" height="6" fill="#000"/><path d="M52,4 V7" stroke="#000" stroke-width="2"/></svg><div class="a" style="left:103px;top:235px;width:123px;height:23px;background:#fff;border-top:2px solid #6e6e6e;border-left:2px solid #6e6e6e;border-right:1px solid #e0e0e0;border-bottom:1px solid #e0e0e0"></div><div class="a" style="left:209px;top:237px;width:16px;height:20px;background:#f0f0f0;border-left:1px solid #fff;border-right:2px solid #8a8a8a;border-bottom:2px solid #8a8a8a"></div><svg class="a" style="left:214px;top:244px" width="9" height="6"><path d="M0.5,0.5 H7.5 L4,4.5 Z" fill="#000"/></svg><div class="a" style="left:107.5px;top:240px;font-size:11px;letter-spacing:-0.3px">Brick and Cladding</div><svg class="a" style="left:231px;top:236px" width="18" height="20"><path d="M8,2 L16.5,10 L8,18.5 Z" fill="#000"/><rect x="4.5" y="5.5" width="7" height="9" fill="#fff" stroke="#000" stroke-width="1.4"/><path d="M5.5,7.3 H10.5" stroke="#2a6ab8" stroke-width="1.2"/><path d="M5.5,9.8 H10.5" stroke="#6aa0d8" stroke-width="1"/><path d="M5.5,12 H10.5" stroke="#777" stroke-width="1"/></svg><div class="a" style="left:27px;top:261px;width:227px;height:1px;background:#a0a0a0"></div><div class="a" style="left:31px;top:264px;width:50px;height:50px;border:1px solid #8c98a2;background:#fff;padding:1px;overflow:hidden"><div style="width:46px;height:46px;overflow:hidden;position:relative"><svg width="46" height="46" style="position:absolute;left:0;top:0;display:block"><rect width="46" height="46" fill="#c0b48c"/><rect x="-10.1" y="0.4" width="9.7" height="2.7" fill="#914d38"/><rect x="0.5" y="0.4" width="8.3" height="2.7" fill="#99503a"/><rect x="9.6" y="0.4" width="9.2" height="2.7" fill="#914b36"/><rect x="19.7" y="0.4" width="7.7" height="2.7" fill="#8d4935"/><rect x="28.2" y="0.4" width="8.1" height="2.7" fill="#944f3a"/><rect x="37.1" y="0.4" width="9.7" height="2.7" fill="#8c4a36"/><rect x="-4.7" y="4.0" width="8.6" height="2.7" fill="#894a36"/><rect x="4.8" y="4.0" width="10.5" height="2.7" fill="#7b4331"/><rect x="16.1" y="4.0" width="7.9" height="2.7" fill="#92503a"/><rect x="24.9" y="4.0" width="9.3" height="2.7" fill="#894835"/><rect x="35.0" y="4.0" width="8.2" height="2.7" fill="#814331"/><rect x="44.1" y="4.0" width="8.4" height="2.7" fill="#944f3a"/><rect x="-12.5" y="7.5" width="10.3" height="2.7" fill="#9a4f3a"/><rect x="-1.3" y="7.5" width="7.9" height="2.7" fill="#914b37"/><rect x="7.4" y="7.5" width="8.8" height="2.7" fill="#854835"/><rect x="17.1" y="7.5" width="8.9" height="2.7" fill="#8b4935"/><rect x="26.8" y="7.5" width="8.6" height="2.7" fill="#8e4a36"/><rect x="36.3" y="7.5" width="10.2" height="2.7" fill="#774a3b"/><rect x="-4.8" y="11.0" width="9.4" height="2.7" fill="#8c4b36"/><rect x="5.5" y="11.0" width="8.6" height="2.7" fill="#8d4c38"/><rect x="15.0" y="11.0" width="8.2" height="2.7" fill="#894935"/><rect x="24.0" y="11.0" width="9.4" height="2.7" fill="#774c3c"/><rect x="34.3" y="11.0" width="7.8" height="2.7" fill="#95503a"/><rect x="43.0" y="11.0" width="8.8" height="2.7" fill="#8e4d38"/><rect x="-12.3" y="14.6" width="10.5" height="2.7" fill="#884a36"/><rect x="-0.9" y="14.6" width="9.4" height="2.7" fill="#9a513b"/><rect x="9.4" y="14.6" width="8.8" height="2.7" fill="#834734"/><rect x="19.0" y="14.6" width="7.9" height="2.7" fill="#98503a"/><rect x="27.7" y="14.6" width="9.1" height="2.7" fill="#895442"/><rect x="37.7" y="14.6" width="8.4" height="2.7" fill="#824834"/><rect x="-5.1" y="18.1" width="7.9" height="2.7" fill="#854835"/><rect x="3.6" y="18.1" width="9.9" height="2.7" fill="#884a36"/><rect x="14.4" y="18.1" width="10.5" height="2.7" fill="#824f3e"/><rect x="25.7" y="18.1" width="8.3" height="2.7" fill="#98503a"/><rect x="34.9" y="18.1" width="10.3" height="2.7" fill="#924c38"/><rect x="46.0" y="18.1" width="10.4" height="2.7" fill="#7e4e3e"/><rect x="-11.3" y="21.7" width="8.1" height="2.7" fill="#904e39"/><rect x="-2.4" y="21.7" width="8.0" height="2.7" fill="#8f4e39"/><rect x="6.5" y="21.7" width="8.6" height="2.7" fill="#894734"/><rect x="15.9" y="21.7" width="9.7" height="2.7" fill="#855342"/><rect x="26.5" y="21.7" width="7.9" height="2.7" fill="#70483a"/><rect x="35.3" y="21.7" width="9.0" height="2.7" fill="#7e4532"/><rect x="45.1" y="21.7" width="9.6" height="2.7" fill="#814532"/><rect x="-5.5" y="25.2" width="9.1" height="2.7" fill="#894734"/><rect x="4.4" y="25.2" width="8.2" height="2.7" fill="#884936"/><rect x="13.5" y="25.2" width="9.3" height="2.7" fill="#834331"/><rect x="23.6" y="25.2" width="10.3" height="2.7" fill="#914f3a"/><rect x="34.8" y="25.2" width="7.7" height="2.7" fill="#884a36"/><rect x="43.3" y="25.2" width="9.4" height="2.7" fill="#97513b"/><rect x="-11.7" y="28.7" width="8.6" height="2.7" fill="#7d4331"/><rect x="-2.2" y="28.7" width="8.6" height="2.7" fill="#99513b"/><rect x="7.2" y="28.7" width="10.1" height="2.7" fill="#834e3e"/><rect x="18.1" y="28.7" width="9.5" height="2.7" fill="#924b36"/><rect x="28.4" y="28.7" width="10.6" height="2.7" fill="#864834"/><rect x="39.8" y="28.7" width="9.2" height="2.7" fill="#7f4f3f"/><rect x="-7.0" y="32.3" width="10.6" height="2.7" fill="#854935"/><rect x="4.4" y="32.3" width="10.6" height="2.7" fill="#7d4432"/><rect x="15.9" y="32.3" width="9.5" height="2.7" fill="#99503a"/><rect x="26.3" y="32.3" width="10.5" height="2.7" fill="#954d38"/><rect x="37.6" y="32.3" width="9.2" height="2.7" fill="#8d5543"/><rect x="-9.6" y="35.8" width="9.6" height="2.7" fill="#7d4331"/><rect x="0.8" y="35.8" width="9.4" height="2.7" fill="#8b4936"/><rect x="11.1" y="35.8" width="8.4" height="2.7" fill="#8a4936"/><rect x="20.3" y="35.8" width="9.5" height="2.7" fill="#805140"/><rect x="30.7" y="35.8" width="8.2" height="2.7" fill="#8d4935"/><rect x="39.7" y="35.8" width="10.0" height="2.7" fill="#964d38"/><rect x="-7.2" y="39.3" width="9.7" height="2.7" fill="#924d38"/><rect x="3.4" y="39.3" width="10.4" height="2.7" fill="#894936"/><rect x="14.7" y="39.3" width="10.1" height="2.7" fill="#8f4e39"/><rect x="25.7" y="39.3" width="8.3" height="2.7" fill="#9b513b"/><rect x="34.8" y="39.3" width="7.9" height="2.7" fill="#7f4633"/><rect x="43.5" y="39.3" width="9.5" height="2.7" fill="#8c4936"/><rect x="-12.5" y="42.9" width="8.1" height="2.7" fill="#894a36"/><rect x="-3.5" y="42.9" width="8.8" height="2.7" fill="#8e4c37"/><rect x="6.1" y="42.9" width="10.5" height="2.7" fill="#8b4835"/><rect x="17.4" y="42.9" width="10.2" height="2.7" fill="#854532"/><rect x="28.5" y="42.9" width="9.4" height="2.7" fill="#874734"/><rect x="38.8" y="42.9" width="8.8" height="2.7" fill="#8b4936"/><rect width="46" height="46" filter="url(#nzs)" opacity="0.9"/></svg></div></div><div class="a" style="left:83px;top:264px;width:50px;height:50px;border:1px solid #8c98a2;background:#fff;padding:1px;overflow:hidden"><div style="width:46px;height:46px;overflow:hidden;position:relative"><svg width="46" height="46"><rect width="46" height="46" fill="#eea4a2"/><rect x="0.0" y="0.0" width="11.5" height="11.5" fill="#f0aaa4"/><line x1="2.9" y1="0.0" x2="2.9" y2="11.5" stroke="#f8c4bc" stroke-width="0.7"/><line x1="5.8" y1="0.0" x2="5.8" y2="11.5" stroke="#f8c4bc" stroke-width="0.7"/><line x1="8.7" y1="0.0" x2="8.7" y2="11.5" stroke="#f8c4bc" stroke-width="0.7"/><rect x="11.5" y="0.0" width="11.5" height="11.5" fill="#e8989c"/><line x1="11.5" y1="2.9" x2="23.0" y2="2.9" stroke="#f4b4b4" stroke-width="0.7"/><line x1="11.5" y1="5.8" x2="23.0" y2="5.8" stroke="#f4b4b4" stroke-width="0.7"/><line x1="11.5" y1="8.7" x2="23.0" y2="8.7" stroke="#f4b4b4" stroke-width="0.7"/><rect x="23.0" y="0.0" width="11.5" height="11.5" fill="#f0aaa4"/><line x1="25.9" y1="0.0" x2="25.9" y2="11.5" stroke="#f8c4bc" stroke-width="0.7"/><line x1="28.8" y1="0.0" x2="28.8" y2="11.5" stroke="#f8c4bc" stroke-width="0.7"/><line x1="31.7" y1="0.0" x2="31.7" y2="11.5" stroke="#f8c4bc" stroke-width="0.7"/><rect x="34.5" y="0.0" width="11.5" height="11.5" fill="#e8989c"/><line x1="34.5" y1="2.9" x2="46.0" y2="2.9" stroke="#f4b4b4" stroke-width="0.7"/><line x1="34.5" y1="5.8" x2="46.0" y2="5.8" stroke="#f4b4b4" stroke-width="0.7"/><line x1="34.5" y1="8.7" x2="46.0" y2="8.7" stroke="#f4b4b4" stroke-width="0.7"/><rect x="0.0" y="11.5" width="11.5" height="11.5" fill="#e8989c"/><line x1="0.0" y1="14.4" x2="11.5" y2="14.4" stroke="#f4b4b4" stroke-width="0.7"/><line x1="0.0" y1="17.3" x2="11.5" y2="17.3" stroke="#f4b4b4" stroke-width="0.7"/><line x1="0.0" y1="20.2" x2="11.5" y2="20.2" stroke="#f4b4b4" stroke-width="0.7"/><rect x="11.5" y="11.5" width="11.5" height="11.5" fill="#f0aaa4"/><line x1="14.4" y1="11.5" x2="14.4" y2="23.0" stroke="#f8c4bc" stroke-width="0.7"/><line x1="17.3" y1="11.5" x2="17.3" y2="23.0" stroke="#f8c4bc" stroke-width="0.7"/><line x1="20.2" y1="11.5" x2="20.2" y2="23.0" stroke="#f8c4bc" stroke-width="0.7"/><rect x="23.0" y="11.5" width="11.5" height="11.5" fill="#e8989c"/><line x1="23.0" y1="14.4" x2="34.5" y2="14.4" stroke="#f4b4b4" stroke-width="0.7"/><line x1="23.0" y1="17.3" x2="34.5" y2="17.3" stroke="#f4b4b4" stroke-width="0.7"/><line x1="23.0" y1="20.2" x2="34.5" y2="20.2" stroke="#f4b4b4" stroke-width="0.7"/><rect x="34.5" y="11.5" width="11.5" height="11.5" fill="#f0aaa4"/><line x1="37.4" y1="11.5" x2="37.4" y2="23.0" stroke="#f8c4bc" stroke-width="0.7"/><line x1="40.3" y1="11.5" x2="40.3" y2="23.0" stroke="#f8c4bc" stroke-width="0.7"/><line x1="43.2" y1="11.5" x2="43.2" y2="23.0" stroke="#f8c4bc" stroke-width="0.7"/><rect x="0.0" y="23.0" width="11.5" height="11.5" fill="#f0aaa4"/><line x1="2.9" y1="23.0" x2="2.9" y2="34.5" stroke="#f8c4bc" stroke-width="0.7"/><line x1="5.8" y1="23.0" x2="5.8" y2="34.5" stroke="#f8c4bc" stroke-width="0.7"/><line x1="8.7" y1="23.0" x2="8.7" y2="34.5" stroke="#f8c4bc" stroke-width="0.7"/><rect x="11.5" y="23.0" width="11.5" height="11.5" fill="#e8989c"/><line x1="11.5" y1="25.9" x2="23.0" y2="25.9" stroke="#f4b4b4" stroke-width="0.7"/><line x1="11.5" y1="28.8" x2="23.0" y2="28.8" stroke="#f4b4b4" stroke-width="0.7"/><line x1="11.5" y1="31.7" x2="23.0" y2="31.7" stroke="#f4b4b4" stroke-width="0.7"/><rect x="23.0" y="23.0" width="11.5" height="11.5" fill="#f0aaa4"/><line x1="25.9" y1="23.0" x2="25.9" y2="34.5" stroke="#f8c4bc" stroke-width="0.7"/><line x1="28.8" y1="23.0" x2="28.8" y2="34.5" stroke="#f8c4bc" stroke-width="0.7"/><line x1="31.7" y1="23.0" x2="31.7" y2="34.5" stroke="#f8c4bc" stroke-width="0.7"/><rect x="34.5" y="23.0" width="11.5" height="11.5" fill="#e8989c"/><line x1="34.5" y1="25.9" x2="46.0" y2="25.9" stroke="#f4b4b4" stroke-width="0.7"/><line x1="34.5" y1="28.8" x2="46.0" y2="28.8" stroke="#f4b4b4" stroke-width="0.7"/><line x1="34.5" y1="31.7" x2="46.0" y2="31.7" stroke="#f4b4b4" stroke-width="0.7"/><rect x="0.0" y="34.5" width="11.5" height="11.5" fill="#e8989c"/><line x1="0.0" y1="37.4" x2="11.5" y2="37.4" stroke="#f4b4b4" stroke-width="0.7"/><line x1="0.0" y1="40.3" x2="11.5" y2="40.3" stroke="#f4b4b4" stroke-width="0.7"/><line x1="0.0" y1="43.2" x2="11.5" y2="43.2" stroke="#f4b4b4" stroke-width="0.7"/><rect x="11.5" y="34.5" width="11.5" height="11.5" fill="#f0aaa4"/><line x1="14.4" y1="34.5" x2="14.4" y2="46.0" stroke="#f8c4bc" stroke-width="0.7"/><line x1="17.3" y1="34.5" x2="17.3" y2="46.0" stroke="#f8c4bc" stroke-width="0.7"/><line x1="20.2" y1="34.5" x2="20.2" y2="46.0" stroke="#f8c4bc" stroke-width="0.7"/><rect x="23.0" y="34.5" width="11.5" height="11.5" fill="#e8989c"/><line x1="23.0" y1="37.4" x2="34.5" y2="37.4" stroke="#f4b4b4" stroke-width="0.7"/><line x1="23.0" y1="40.3" x2="34.5" y2="40.3" stroke="#f4b4b4" stroke-width="0.7"/><line x1="23.0" y1="43.2" x2="34.5" y2="43.2" stroke="#f4b4b4" stroke-width="0.7"/><rect x="34.5" y="34.5" width="11.5" height="11.5" fill="#f0aaa4"/><line x1="37.4" y1="34.5" x2="37.4" y2="46.0" stroke="#f8c4bc" stroke-width="0.7"/><line x1="40.3" y1="34.5" x2="40.3" y2="46.0" stroke="#f8c4bc" stroke-width="0.7"/><line x1="43.2" y1="34.5" x2="43.2" y2="46.0" stroke="#f8c4bc" stroke-width="0.7"/><line x1="23" y1="0" x2="23" y2="46" stroke="#d88890" stroke-width="0.8"/></svg></div></div><div class="a" style="left:135px;top:264px;width:50px;height:50px;border:1px solid #8c98a2;background:#fff;padding:1px;overflow:hidden"><div style="width:46px;height:46px;overflow:hidden;position:relative"><svg width="46" height="46"><defs><filter id="gn" x="0" y="0" width="100%" height="100%"><feTurbulence type="fractalNoise" baseFrequency="1.2" numOctaves="1" seed="3"/><feColorMatrix values="0 0 0 0 0.1  0 0 0 0 0.1  0 0 0 0 0.15  0 0 0 -2.2 1.5"/><feComposite in2="SourceGraphic" operator="in"/></filter></defs><rect width="46" height="46" fill="#e8d8a8"/><g><rect x="1" y="1" width="22" height="20" fill="#9a9eb0"/><rect x="25" y="1" width="21" height="20" fill="#9ea2b4"/><rect x="1" y="24" width="45" height="22" fill="#9ca0b2"/></g><g filter="url(#gn)"><rect x="1" y="1" width="22" height="20" fill="#000"/><rect x="25" y="1" width="21" height="20" fill="#000"/><rect x="1" y="24" width="45" height="22" fill="#000"/></g></svg></div></div><div class="a" style="left:187px;top:264px;width:50px;height:50px;border:1px solid #8c98a2;background:#fff;padding:1px;overflow:hidden"><div style="width:46px;height:46px;overflow:hidden;position:relative"><svg width="46" height="46"><rect width="46" height="46" fill="#b86a6c"/><path d="M0,15 H23 M23,0 V30 M10,15 V46 M23,30 H46 M35,0 V30" stroke="#a65a5c" stroke-width="0.8"/></svg></div></div><div class="a" style="left:31px;top:316px;width:50px;height:50px;border:1px solid #8c98a2;background:#fff;padding:1px;overflow:hidden"><div style="width:46px;height:46px;overflow:hidden;position:relative"><svg width="46" height="46"><rect width="46" height="46" fill="#b08880"/><rect x="0.6" y="0.6" width="7.7" height="9.8" rx="1.2" fill="#cca18f"/><rect x="9.5" y="0.6" width="9.2" height="9.8" rx="1.2" fill="#c7a899"/><rect x="19.9" y="0.6" width="10.4" height="9.8" rx="1.2" fill="#c89d91"/><rect x="31.5" y="0.6" width="9.4" height="9.8" rx="1.2" fill="#c89e8e"/><rect x="42.1" y="0.6" width="3.3" height="9.8" rx="1.2" fill="#c8a094"/><rect x="0.6" y="11.6" width="7.1" height="10.8" rx="1.2" fill="#cb9a98"/><rect x="8.9" y="11.6" width="10.0" height="10.8" rx="1.2" fill="#cca895"/><rect x="20.1" y="11.6" width="12.3" height="10.8" rx="1.2" fill="#c59f9d"/><rect x="33.5" y="11.6" width="11.9" height="10.8" rx="1.2" fill="#c89a97"/><rect x="0.6" y="23.6" width="5.9" height="9.8" rx="1.2" fill="#c6a59b"/><rect x="7.7" y="23.6" width="10.0" height="9.8" rx="1.2" fill="#c9a59c"/><rect x="18.8" y="23.6" width="11.6" height="9.8" rx="1.2" fill="#c59f97"/><rect x="31.6" y="23.6" width="10.0" height="9.8" rx="1.2" fill="#c89990"/><rect x="42.9" y="23.6" width="2.5" height="9.8" rx="1.2" fill="#c1a696"/><rect x="0.6" y="34.6" width="10.0" height="10.8" rx="1.2" fill="#c69a9b"/><rect x="11.8" y="34.6" width="11.4" height="10.8" rx="1.2" fill="#c6a696"/><rect x="24.3" y="34.6" width="11.6" height="10.8" rx="1.2" fill="#c5a39b"/><rect x="37.1" y="34.6" width="8.3" height="10.8" rx="1.2" fill="#ca9e98"/></svg></div></div><div class="a" style="left:83px;top:316px;width:50px;height:50px;border:1px solid #8c98a2;background:#fff;padding:1px;overflow:hidden"><div style="width:46px;height:46px;overflow:hidden;position:relative"><svg width="46" height="46" style="position:absolute;left:0;top:0;display:block"><rect width="46" height="46" fill="#a89870"/><rect x="-14.4" y="0.5" width="9.7" height="4.1" fill="#543224"/><rect x="-3.7" y="0.5" width="9.9" height="4.1" fill="#5c3627"/><rect x="7.2" y="0.5" width="10.4" height="4.1" fill="#523426"/><rect x="18.6" y="0.5" width="9.4" height="4.1" fill="#5d3828"/><rect x="29.0" y="0.5" width="12.5" height="4.1" fill="#563325"/><rect x="42.5" y="0.5" width="11.3" height="4.1" fill="#633b2b"/><rect x="-8.0" y="5.6" width="11.3" height="4.1" fill="#583325"/><rect x="4.2" y="5.6" width="10.4" height="4.1" fill="#5b3828"/><rect x="15.7" y="5.6" width="12.0" height="4.1" fill="#6c4230"/><rect x="28.7" y="5.6" width="10.2" height="4.1" fill="#4d3c30"/><rect x="39.8" y="5.6" width="11.1" height="4.1" fill="#523325"/><rect x="-13.0" y="10.7" width="11.1" height="4.1" fill="#6a3f2e"/><rect x="-1.0" y="10.7" width="12.5" height="4.1" fill="#663b2b"/><rect x="12.5" y="10.7" width="11.3" height="4.1" fill="#663b2b"/><rect x="24.8" y="10.7" width="11.2" height="4.1" fill="#6f402e"/><rect x="37.0" y="10.7" width="10.7" height="4.1" fill="#563426"/><rect x="-6.8" y="15.8" width="10.7" height="4.1" fill="#5e3829"/><rect x="4.9" y="15.8" width="9.2" height="4.1" fill="#6a412f"/><rect x="15.1" y="15.8" width="11.2" height="4.1" fill="#623d2c"/><rect x="27.2" y="15.8" width="10.5" height="4.1" fill="#4f3c31"/><rect x="38.7" y="15.8" width="11.1" height="4.1" fill="#603829"/><rect x="-11.7" y="20.9" width="10.7" height="4.1" fill="#5c3728"/><rect x="0.0" y="20.9" width="12.2" height="4.1" fill="#744230"/><rect x="13.3" y="20.9" width="11.3" height="4.1" fill="#6f412f"/><rect x="25.6" y="20.9" width="11.5" height="4.1" fill="#613d2c"/><rect x="38.1" y="20.9" width="11.4" height="4.1" fill="#513627"/><rect x="-6.6" y="26.1" width="9.4" height="4.1" fill="#523526"/><rect x="3.9" y="26.1" width="11.3" height="4.1" fill="#4f3e32"/><rect x="16.2" y="26.1" width="12.7" height="4.1" fill="#5c4134"/><rect x="29.9" y="26.1" width="10.0" height="4.1" fill="#613a2a"/><rect x="40.9" y="26.1" width="9.9" height="4.1" fill="#5c3a2a"/><rect x="-13.4" y="31.2" width="10.6" height="4.1" fill="#5c3627"/><rect x="-1.7" y="31.2" width="11.1" height="4.1" fill="#553828"/><rect x="10.4" y="31.2" width="12.2" height="4.1" fill="#4f3325"/><rect x="23.6" y="31.2" width="11.0" height="4.1" fill="#623e2d"/><rect x="35.6" y="31.2" width="11.8" height="4.1" fill="#6b412f"/><rect x="-6.2" y="36.3" width="10.2" height="4.1" fill="#583426"/><rect x="5.0" y="36.3" width="9.8" height="4.1" fill="#504033"/><rect x="15.8" y="36.3" width="9.8" height="4.1" fill="#5b3a2a"/><rect x="26.6" y="36.3" width="11.7" height="4.1" fill="#5b3a2a"/><rect x="39.3" y="36.3" width="12.1" height="4.1" fill="#70402e"/><rect x="-13.1" y="41.4" width="9.7" height="4.1" fill="#633c2c"/><rect x="-2.4" y="41.4" width="12.1" height="4.1" fill="#553224"/><rect x="10.7" y="41.4" width="11.5" height="4.1" fill="#5e3828"/><rect x="23.2" y="41.4" width="10.5" height="4.1" fill="#6e4230"/><rect x="34.8" y="41.4" width="10.2" height="4.1" fill="#593728"/><rect x="46.0" y="41.4" width="11.0" height="4.1" fill="#6b4230"/><rect width="46" height="46" filter="url(#nzs)" opacity="1"/></svg></div></div><div class="a" style="left:135px;top:316px;width:50px;height:50px;border:1px solid #8c98a2;background:#fff;padding:1px;overflow:hidden"><div style="width:46px;height:46px;overflow:hidden;position:relative"><svg width="46" height="46" style="position:absolute;left:0;top:0;display:block"><rect width="46" height="46" fill="#e0d4a4"/><rect x="-16.3" y="0.5" width="15.0" height="4.2" fill="#a7883a"/><rect x="-0.4" y="0.5" width="12.8" height="4.2" fill="#ba9140"/><rect x="13.2" y="0.5" width="12.1" height="4.2" fill="#a58638"/><rect x="26.3" y="0.5" width="14.8" height="4.2" fill="#a9893a"/><rect x="41.9" y="0.5" width="13.1" height="4.2" fill="#ab8638"/><rect x="-7.8" y="5.6" width="14.2" height="4.2" fill="#af8d3d"/><rect x="7.3" y="5.6" width="13.8" height="4.2" fill="#ba8d3d"/><rect x="22.0" y="5.6" width="14.2" height="4.2" fill="#c29140"/><rect x="37.0" y="5.6" width="15.1" height="4.2" fill="#ae883a"/><rect x="-15.0" y="10.7" width="14.3" height="4.2" fill="#ae8b3c"/><rect x="0.2" y="10.7" width="13.2" height="4.2" fill="#b78c3d"/><rect x="14.4" y="10.7" width="11.4" height="4.2" fill="#ad8739"/><rect x="26.7" y="10.7" width="13.4" height="4.2" fill="#b89040"/><rect x="41.0" y="10.7" width="12.2" height="4.2" fill="#bc8f3f"/><rect x="-7.3" y="15.8" width="11.4" height="4.2" fill="#b48a3b"/><rect x="5.0" y="15.8" width="13.1" height="4.2" fill="#bf9040"/><rect x="19.0" y="15.8" width="14.1" height="4.2" fill="#ae893a"/><rect x="34.0" y="15.8" width="15.1" height="4.2" fill="#af8739"/><rect x="-13.6" y="20.9" width="14.4" height="4.2" fill="#a58638"/><rect x="1.7" y="20.9" width="15.0" height="4.2" fill="#c99442"/><rect x="17.6" y="20.9" width="11.1" height="4.2" fill="#c19241"/><rect x="29.5" y="20.9" width="11.3" height="4.2" fill="#c79543"/><rect x="41.8" y="20.9" width="14.9" height="4.2" fill="#b78f3e"/><rect x="-8.2" y="26.0" width="13.7" height="4.2" fill="#b58e3e"/><rect x="6.4" y="26.0" width="11.7" height="4.2" fill="#a98638"/><rect x="19.0" y="26.0" width="13.8" height="4.2" fill="#be9342"/><rect x="33.7" y="26.0" width="13.9" height="4.2" fill="#bd9342"/><rect x="-16.0" y="31.1" width="13.7" height="4.2" fill="#b98e3e"/><rect x="-1.5" y="31.1" width="12.7" height="4.2" fill="#a98739"/><rect x="12.2" y="31.1" width="13.7" height="4.2" fill="#bf9040"/><rect x="26.7" y="31.1" width="12.8" height="4.2" fill="#b68b3c"/><rect x="40.4" y="31.1" width="13.4" height="4.2" fill="#ac8a3b"/><rect x="-9.4" y="36.2" width="14.4" height="4.2" fill="#b38e3e"/><rect x="5.8" y="36.2" width="11.1" height="4.2" fill="#b68b3c"/><rect x="17.8" y="36.2" width="11.9" height="4.2" fill="#a58638"/><rect x="30.6" y="36.2" width="14.1" height="4.2" fill="#ad883a"/><rect x="45.6" y="36.2" width="13.0" height="4.2" fill="#b58c3c"/><rect x="-14.3" y="41.3" width="15.2" height="4.2" fill="#b08d3e"/><rect x="1.7" y="41.3" width="13.1" height="4.2" fill="#ad8638"/><rect x="15.7" y="41.3" width="12.7" height="4.2" fill="#bc903f"/><rect x="29.3" y="41.3" width="12.3" height="4.2" fill="#b99040"/><rect x="42.5" y="41.3" width="12.8" height="4.2" fill="#c89543"/><rect width="46" height="46" filter="url(#nzs)" opacity="1"/></svg></div></div><div class="a" style="left:187px;top:316px;width:50px;height:50px;border:1px solid #8c98a2;background:#fff;padding:1px;overflow:hidden"><div style="width:46px;height:46px;overflow:hidden;position:relative"><svg width="46" height="46" style="position:absolute;left:0;top:0;display:block"><rect width="46" height="46" fill="#383838"/><rect x="-14.3" y="0.8" width="12.6" height="4.0" fill="#a5a9b1"/><rect x="0.0" y="0.8" width="10.2" height="4.0" fill="#a4a8b0"/><rect x="11.9" y="0.8" width="10.1" height="4.0" fill="#9fa3ab"/><rect x="23.7" y="0.8" width="12.1" height="4.0" fill="#a3a7af"/><rect x="37.5" y="0.8" width="12.5" height="4.0" fill="#acb0b8"/><rect x="-7.8" y="6.6" width="12.3" height="4.0" fill="#b6bac2"/><rect x="6.2" y="6.6" width="11.2" height="4.0" fill="#a1a5ad"/><rect x="19.1" y="6.6" width="9.5" height="4.0" fill="#a4a8b0"/><rect x="30.2" y="6.6" width="13.1" height="4.0" fill="#b6bac2"/><rect x="45.0" y="6.6" width="12.0" height="4.0" fill="#b9bdc5"/><rect x="-15.0" y="12.3" width="9.7" height="4.0" fill="#aaaeb6"/><rect x="-3.6" y="12.3" width="12.6" height="4.0" fill="#a4a8b0"/><rect x="10.7" y="12.3" width="12.0" height="4.0" fill="#adb1b9"/><rect x="24.4" y="12.3" width="9.6" height="4.0" fill="#b1b5bd"/><rect x="35.8" y="12.3" width="11.9" height="4.0" fill="#9ca0a8"/><rect x="-8.4" y="18.1" width="10.6" height="4.0" fill="#9ea2aa"/><rect x="3.9" y="18.1" width="10.6" height="4.0" fill="#a9adb5"/><rect x="16.1" y="18.1" width="11.9" height="4.0" fill="#a3a7af"/><rect x="29.8" y="18.1" width="12.5" height="4.0" fill="#b9bdc5"/><rect x="44.0" y="18.1" width="12.7" height="4.0" fill="#abafb7"/><rect x="-13.8" y="23.9" width="10.4" height="4.0" fill="#a6aab2"/><rect x="-1.7" y="23.9" width="9.7" height="4.0" fill="#b9bdc5"/><rect x="9.7" y="23.9" width="12.4" height="4.0" fill="#a3a7af"/><rect x="23.8" y="23.9" width="10.6" height="4.0" fill="#a6aab2"/><rect x="36.1" y="23.9" width="12.0" height="4.0" fill="#a2a6ae"/><rect x="-7.1" y="29.6" width="10.4" height="4.0" fill="#babec6"/><rect x="5.0" y="29.6" width="12.3" height="4.0" fill="#bcc0c8"/><rect x="19.0" y="29.6" width="12.5" height="4.0" fill="#9fa3ab"/><rect x="33.2" y="29.6" width="11.8" height="4.0" fill="#aaaeb6"/><rect x="46.7" y="29.6" width="10.6" height="4.0" fill="#bcc0c8"/><rect x="-14.1" y="35.4" width="10.9" height="4.0" fill="#adb1b9"/><rect x="-1.5" y="35.4" width="10.9" height="4.0" fill="#b8bcc4"/><rect x="11.1" y="35.4" width="10.8" height="4.0" fill="#aeb2ba"/><rect x="23.6" y="35.4" width="10.3" height="4.0" fill="#a5a9b1"/><rect x="35.6" y="35.4" width="12.2" height="4.0" fill="#b5b9c1"/><rect x="-6.7" y="41.1" width="12.8" height="4.0" fill="#b1b5bd"/><rect x="7.8" y="41.1" width="9.5" height="4.0" fill="#b6bac2"/><rect x="19.0" y="41.1" width="12.1" height="4.0" fill="#b6bac2"/><rect x="32.8" y="41.1" width="11.1" height="4.0" fill="#9fa3ab"/><rect x="45.6" y="41.1" width="9.5" height="4.0" fill="#aeb2ba"/><rect width="46" height="46" filter="url(#nzs)" opacity="0.8"/></svg></div></div><div class="a" style="left:31px;top:368px;width:50px;height:50px;border:1px solid #8c98a2;background:#fff;padding:1px;overflow:hidden"><div style="width:46px;height:46px;overflow:hidden;position:relative"><svg width="46" height="46"><defs><linearGradient id="sdg" x1="0" y1="0" x2="0" y2="1"><stop offset="0" stop-color="#c49670"/><stop offset="1" stop-color="#ae7e58"/></linearGradient></defs><rect width="46" height="46" fill="#b88a62"/><rect y="0" width="46" height="14.5" fill="url(#sdg)"/><rect y="15.5" width="46" height="15" fill="url(#sdg)"/><rect y="31.5" width="46" height="14.5" fill="url(#sdg)"/><path d="M0,15 H46 M0,31 H46" stroke="#6a4830" stroke-width="1.1"/></svg></div></div><div class="a" style="left:83px;top:368px;width:50px;height:50px;border:1px solid #8c98a2;background:#fff;padding:1px;overflow:hidden"><div style="width:46px;height:46px;overflow:hidden;position:relative"><svg width="46" height="46"><rect width="46" height="46" fill="#d8d8d8"/><path d="M0,11 H46 M0,22.5 H46 M0,34 H46" stroke="#a8a8a8" stroke-width="1.1"/><path d="M0,12.3 H46 M0,23.8 H46 M0,35.3 H46" stroke="#e8e8e8" stroke-width="0.8"/></svg></div></div><div class="a" style="left:135px;top:368px;width:50px;height:50px;border:1px solid #8c98a2;background:#fff;padding:1px;overflow:hidden"><div style="width:46px;height:46px;overflow:hidden;position:relative"><svg width="46" height="46"><rect width="46" height="46" fill="#dadada"/><rect width="46" height="46" filter="url(#nzd)" opacity="0.12"/><rect width="46" height="46" filter="url(#nzl)" opacity="0.35"/></svg></div></div><div class="a" style="left:903px;top:112px;width:390px;height:535px;border:1px solid #30363c;box-shadow:0 0 5px rgba(0,0,0,0.3),2px 3px 7px rgba(0,0,0,0.45);background:#c9d1d3"><div class="a" style="left:0;top:0;width:388px;height:533px;border:1px solid #fff;background:linear-gradient(90deg,#d8e4ec 0px,#d6e3ec 100px,#dae6ee 200px,#d4e2ec 300px,#d2e0ea 388px)"></div></div><div class="a" style="left:905px;top:130px;width:3px;height:515px;background:linear-gradient(#d4e0e6,#c2cacb 40px,#c2cacb)"></div><div class="a" style="left:908px;top:130px;width:1px;height:515px;background:linear-gradient(rgba(255,255,255,0),#fafbfb 30px)"></div><div class="a" style="left:1287px;top:130px;width:1px;height:515px;background:linear-gradient(rgba(255,255,255,0),#fafbfb 30px)"></div><div class="a" style="left:1288px;top:130px;width:3px;height:515px;background:linear-gradient(#d4e0e6,#c2cacb 40px,#c2cacb)"></div><div class="a" style="left:908px;top:640px;width:380px;height:1px;background:#fafbfb"></div><div class="a" style="left:905px;top:641px;width:386px;height:3px;background:#c2cacb"></div><div class="a" style="left:911px;top:117.7px;font-size:12px;color:#3b4b5b">Instructor</div><div class="a" style="left:1265px;top:117px;width:17px;height:17px;border:1px solid #6f7d89;border-radius:3px;background:linear-gradient(#e9eff3,#d5dfe6)"><svg width="15" height="15" style="position:absolute;left:0;top:0"><path d="M5.8,5.8 L9.2,9.2 M9.2,5.8 L5.8,9.2" stroke="#3c4650" stroke-width="3.3" stroke-linecap="square"/><path d="M5.8,5.8 L9.2,9.2 M9.2,5.8 L5.8,9.2" stroke="#fff" stroke-width="1.4" stroke-linecap="square"/></svg></div><div class="a" style="left:909px;top:136px;width:380px;height:505px;border:1px solid #000;background:#fff;border-right:none"><div class="a" style="left:1px;top:1px;width:380px;height:502px;border-top:2px solid #767676;border-left:2px solid #767676"></div></div><div class="a" style="left:1262px;top:139px;width:16px;height:499px;background:#eaeaea"></div><svg class="a" style="left:1266px;top:145px" width="8" height="6"><path d="M0,5 L4,1 L8,5 Z" fill="#333"/></svg><svg class="a" style="left:1266px;top:626px" width="8" height="6"><path d="M0,1 L4,5 L8,1 Z" fill="#333"/></svg><div class="a" style="left:1262px;top:157px;width:16px;height:412px;border:1px solid #9a9a9a;border-radius:2px;background:linear-gradient(90deg,#f4f4f4,#e6e6e6 40%,#d2d2d8 70%,#c6c6cc)"></div><svg class="a" style="left:1266px;top:358px" width="8" height="8"><path d="M0,1.5 H8 M0,4 H8 M0,6.5 H8" stroke="#555" stroke-width="1"/></svg><svg class="a" style="left:0;top:0" width="1280" height="994"><g stroke="#000" stroke-linecap="round"><line x1="1027" y1="180" x2="997.3" y2="227.4" stroke-width="2.5"/><line x1="1027" y1="180" x2="1096.5" y2="194.5" stroke-width="2.6"/><line x1="1096.5" y1="194.5" x2="1124.6" y2="228.6" stroke-width="2.6"/><line x1="1027" y1="180" x2="1056" y2="219.7" stroke-width="1.2"/><line x1="1056" y1="219.7" x2="1124.6" y2="228.6" stroke-width="1.2"/><line x1="997.3" y1="227.4" x2="996.6" y2="292.6" stroke-width="2.5"/><line x1="1056" y1="219.7" x2="1056" y2="299.6" stroke-width="2"/><line x1="1124.6" y1="228.6" x2="1125.5" y2="292" stroke-width="2.5"/><line x1="996.6" y1="292.6" x2="1056" y2="299.6" stroke-width="2.6"/><line x1="1056" y1="299.6" x2="1125.5" y2="292" stroke-width="2.6"/></g><g fill="#000"><rect x="1024.5" y="177.5" width="5" height="5"/><rect x="1094.0" y="192.0" width="5" height="5"/><rect x="994.8" y="224.9" width="5" height="5"/><rect x="1053.5" y="217.2" width="5" height="5"/><rect x="1122.1" y="226.1" width="5" height="5"/><rect x="994.1" y="290.1" width="5" height="5"/><rect x="1053.5" y="297.1" width="5" height="5"/><rect x="1123.0" y="289.5" width="5" height="5"/></g><path d="M976.5,179 L976.5,191 L979.5,188.5 L981.5,193 L983,192.3 L981,188 L985,188 Z" fill="#000"/></svg><div class="a" style="left:939.5px;top:349.5px;font-size:19.4px;letter-spacing:0.27px;font-weight:700;color:#000">Select Tool</div><div class="a" style="left:942px;top:369.5px;font-size:13.5px;line-height:16px;color:#939393;letter-spacing:-0.12px">Select entities to modify when using other tools or<br>commands.</div><div class="a" style="left:939.5px;top:420px;font-size:14px;font-weight:700;color:#444;letter-spacing:0.4px">Tool Operation</div><div class="a" style="left:936px;top:438px;font-size:13.5px;color:#939393">1.</div><div class="a" style="left:958.5px;top:438px;font-size:13.5px;letter-spacing:-0.05px;color:#939393">Click on an entity.</div><div class="a" style="left:939.5px;top:471px;font-size:14px;font-weight:700;color:#444;letter-spacing:0.45px">Modifier Keys</div><div class="a" style="left:942px;top:487.5px;font-size:13.5px;line-height:16px;color:#939393;letter-spacing:-0.1px">Ctrl = Add an entity to set of selected entities<br>Shift+Ctrl = Subtract an entity from set of selected<br>entities<br>Shift = Toggle whether an entity is within set of<br>selected entities<br>Ctrl+A = Select all visible entities in model</div><div class="a" style="left:939.5px;top:602.3px;font-size:14px;font-weight:700;color:#444;letter-spacing:0.33px">Advanced Operations</div><div class="a" style="left:942px;top:619px;font-size:13.5px;letter-spacing:-0.08px;color:#3a8ee0">Selecting Multiple Entities</div><div class="a" style="left:1183px;top:-2px;width:94px;height:19px;border:1px solid #aab4be;border-radius:0 0 5px 5px;overflow:hidden;background:#1b2a3a"><div class="a" style="left:0;top:0;width:25px;height:17px;background:linear-gradient(#8a96a4 0px,#7c8896 8px,#1d2b3d 9px,#26384c 17px);border-right:1px solid #b8c2cc"></div><div class="a" style="left:26px;top:0;width:24px;height:17px;background:linear-gradient(#8a96a4 0px,#7c8896 8px,#1d2b3d 9px,#26384c 17px);border-right:1px solid #b8c2cc"></div><div class="a" style="left:51px;top:0;width:42px;height:17px;background:linear-gradient(#e6a090 0px,#d88474 8px,#c02c10 9px,#d24a30 17px)"></div></div><svg class="a" style="left:1183px;top:0" width="97" height="18"><rect x="9" y="8.5" width="10" height="3" fill="#eef2f4"/><rect x="34.5" y="2.5" width="8" height="8" fill="none" stroke="#e8ecee" stroke-width="1.6"/><rect x="32" y="4.5" width="8" height="8" fill="#1b2a3a" stroke="#f4f6f8" stroke-width="1.8"/><rect x="34.5" y="7" width="3" height="3" fill="none" stroke="#f4f6f8" stroke-width="1.2"/><path d="M68.5,3 L76.5,10.5 M76.5,3 L68.5,10.5" stroke="#3a4050" stroke-width="4.2"/><path d="M68.5,3 L76.5,10.5 M76.5,3 L68.5,10.5" stroke="#f4f8fa" stroke-width="2.6"/></svg><svg class="a" style="left:0px;top:0px" width="17" height="18"><path d="M1.5,9 L7.5,2.5 L10.5,6 L10,11 L4,15 L1.5,12.5 Z" fill="#f6f0e6" stroke="#000" stroke-width="0.9"/><path d="M4,7 L7.5,3 L10,6 L6.5,10 Z" fill="#f0b070"/><path d="M4.5,15.5 L13.5,4.5" stroke="#000" stroke-width="2.8"/><path d="M4.5,15.5 L13.5,4.5" stroke="#f01010" stroke-width="1.7"/><path d="M12.6,5.6 L13.8,4.2" stroke="#f4b0b0" stroke-width="1.7"/></svg><div class="a" style="left:4px;top:42px;width:1px;height:29px;background:#fff"></div><div class="a" style="left:5px;top:42px;width:1px;height:29px;background:#a8a8a8"></div><div class="a" style="left:8px;top:42px;width:30px;height:29px;border:1px solid #a8a8a8;border-right-color:#fff;border-bottom-color:#fff;background:#f7f7f7"></div><div class="a" style="left:41px;top:44px;width:1px;height:26px;background:#a0a0a0"></div><div class="a" style="left:42px;top:44px;width:1px;height:26px;background:#fff"></div><div class="a" style="left:171px;top:44px;width:1px;height:26px;background:#a0a0a0"></div><div class="a" style="left:172px;top:44px;width:1px;height:26px;background:#fff"></div><div class="a" style="left:301px;top:44px;width:1px;height:26px;background:#a0a0a0"></div><div class="a" style="left:302px;top:44px;width:1px;height:26px;background:#fff"></div><div class="a" style="left:431px;top:44px;width:1px;height:26px;background:#a0a0a0"></div><div class="a" style="left:432px;top:44px;width:1px;height:26px;background:#fff"></div><div class="a" style="left:561px;top:44px;width:1px;height:26px;background:#a0a0a0"></div><div class="a" style="left:562px;top:44px;width:1px;height:26px;background:#fff"></div><div class="a" style="left:660px;top:44px;width:1px;height:26px;background:#a0a0a0"></div><div class="a" style="left:661px;top:44px;width:1px;height:26px;background:#fff"></div><div class="a" style="left:726px;top:44px;width:1px;height:26px;background:#a0a0a0"></div><div class="a" style="left:727px;top:44px;width:1px;height:26px;background:#fff"></div><svg class="a" style="left:0;top:0" width="740" height="74"><path d="M20.5,50 L20.5,64 L23.5,61 L26,66.5 L28.5,65.5 L26,60 L30,60 Z" fill="#000" stroke="#fff" stroke-width="0.8" transform="translate(0,0)"/><path d="M54,68 L72,60" stroke="#b8b8b8" stroke-width="2.5"/><path d="M52.5,63.5 L67,47.5 L71,51 L56,66.5 Z" fill="#e80808" stroke="#600" stroke-width="0.8"/><path d="M67,47.5 L69,45.5 L73,49 L71,51 Z" fill="#f09ab0" stroke="#844" stroke-width="0.6"/><path d="M52.5,63.5 L56,66.5 L49,69 Z" fill="#f0e8b0" stroke="#333" stroke-width="0.6"/><path d="M49,69 L51,65.8 L52.2,67.4 Z" fill="#000"/><path d="M83,68 L104,67.5" stroke="#bbb" stroke-width="2"/><path d="M79.5,47 L101,45 L102.5,66.5 L81.5,68.5 Z" fill="#a88f6f" stroke="#2a2418" stroke-width="1.6"/><circle cx="122.5" cy="57.5" r="11" fill="#bbb"/><circle cx="121.5" cy="56.5" r="11" fill="#a88f6f" stroke="#2a2418" stroke-width="1.6"/><path d="M147,68 C139,61 142,48 155,46 C160,45 163,47 165,49" stroke="#111" stroke-width="2" fill="none"/><path d="M144,57 C148,54 154,53 161,53" stroke="#999" stroke-width="1" fill="none"/><g opacity="0.55" stroke="#9a9a9a" stroke-width="2.2" fill="none"><path d="M181,52 L192,47 L200,54 L200,63 L189,69 L181,62 Z"/></g><path d="M183.9,52.8 L192.4,48.1 L198.5,54.7 L188.6,59.8 Z" fill="#fff" stroke="#555" stroke-width="0.9"/><path d="M183.9,52.8 L188.6,59.8 L188.6,66 L184,60 Z" fill="#f4f4f4" stroke="#777" stroke-width="0.7"/><path d="M188.6,59.8 L198.5,54.7 L198.5,60.5 L188.6,66 Z" fill="#fafafa" stroke="#666" stroke-width="0.8"/><path d="M221,68 L232,55 L232,61 L224,70 Z" fill="#b8b8b8" opacity="0.8"/><path d="M212.6,56 L223.4,45.3 L231.8,47.2 L222,58 Z" fill="#f4a0bc" stroke="#6a3040" stroke-width="0.8"/><path d="M212.6,56 L222,58 L220.5,68.3 L212,62.7 Z" fill="#f090b0" stroke="#6a3040" stroke-width="0.8"/><path d="M222,58 L231.8,47.2 L231,53 L220.5,68.3 Z" fill="#c06a88" stroke="#6a3040" stroke-width="0.8"/><path d="M219,52 L225,49.5" stroke="#6a2a40" stroke-width="1.6"/><ellipse cx="257" cy="63" rx="7" ry="3" fill="#bdbdbd" opacity="0.8"/><path d="M240.5,65 L252,59.5" stroke="#222" stroke-width="4.2"/><path d="M241,64.6 L251.5,59.6" stroke="#f0c000" stroke-width="2.6" stroke-dasharray="1.6,1"/><path d="M240,64 L241.5,68" stroke="#222" stroke-width="1.4"/><path d="M249,45.5 L259.5,45.3 C261.5,45.3 262,46.5 262,48 L261.8,58 C261.8,60 260.5,61 258.5,61 L249,61 C247.5,61 247,60 247,58.5 L247,48 C247,46.5 247.5,45.5 249,45.5 Z" fill="#4a4a4a" stroke="#2a2a2a" stroke-width="1"/><ellipse cx="256.7" cy="53.3" rx="3.6" ry="4.8" fill="#f0b400"/><rect x="246" y="49.5" width="3" height="5.5" rx="1.3" fill="#f0b400"/><ellipse cx="287" cy="65.5" rx="8" ry="2.5" fill="#c0c0c0" opacity="0.8"/><path d="M279,50 L287,46 L294.5,57 L291,64 L284,65.5 L278.5,57 Z" fill="#5a5a5a" stroke="#2a2a2a" stroke-width="0.9"/><path d="M280.5,56 L288,53 L292.5,59 L290,63 L284,64 Z" fill="#ddd0a4"/><path d="M285,48 C286,44 291,43.5 292,46 L292.5,50" stroke="#111" stroke-width="1.5" fill="none"/><path d="M282,47.5 C280,49 277,53 276,58 C275.5,61 276,63 277,64 L278,62 C278,58 280,54 283,51 Z" fill="#f8e400" stroke="#3a3a10" stroke-width="0.7"/><path d="M276.5,65 L277,67.5" stroke="#e8d800" stroke-width="1.2"/><path d="M309,60 L321,56 L331,61 L331,64 L320,69 L309,64 Z" fill="#6e5a40"/><path d="M309,60 L321,56 L331,61 L320,65 Z" fill="#d8c098"/><path d="M319,45 L324,52 L321,52 L321,59 L317,59 L317,52 L314,52 Z" fill="#ee0000"/><g fill="#ee0000" stroke="#700" stroke-width="0.3"><path d="M345.9,45.8 L353.4,49.9 L346.3,54.4 Z"/><line x1="352.0" y1="55.6" x2="349.9" y2="52.2" stroke="#ee0000" stroke-width="2.6"/><path d="M361.8,50.9 L356.9,57.9 L353.2,50.4 Z"/><line x1="352.0" y1="55.6" x2="355.0" y2="54.1" stroke="#ee0000" stroke-width="2.6"/><path d="M339.8,61.5 L344.7,54.5 L348.4,62.0 Z"/><line x1="352.0" y1="55.6" x2="346.6" y2="58.2" stroke="#ee0000" stroke-width="2.6"/><path d="M359.0,67.3 L351.5,63.0 L358.8,58.7 Z"/><line x1="352.0" y1="55.6" x2="355.1" y2="60.9" stroke="#ee0000" stroke-width="2.6"/></g><g fill="#fff"><circle cx="352" cy="55.6" r="1.2"/><rect x="348.5" y="53.5" width="2" height="2"/><rect x="353.5" y="56.5" width="2" height="2"/></g><path d="M374,57 C376,49 387,47 391,53" stroke="#999" stroke-width="2.4" fill="none" opacity="0.7"/><path d="M390,61.5 C388,69 377,70 373,62" stroke="#999" stroke-width="2.4" fill="none" opacity="0.7"/><path d="M373,54 C375,46 386,44.5 390,50" stroke="#ee0000" stroke-width="2.6" fill="none"/><path d="M385.5,51 L393,46.5 L393.5,55 Z" fill="#ee0000"/><path d="M390.9,59.4 C389,67 378,68.5 374,62" stroke="#ee0000" stroke-width="2.6" fill="none"/><path d="M378,61 L370.5,58.4 L373.5,66.5 Z" fill="#ee0000"/><path d="M403,67 C400,60 403,49 410,47 C416,45 422,47 425,50" stroke="#000" stroke-width="1.6" fill="none"/><path d="M409,60 C408,55 411,51 416,50 C418,50 420,51 421,52" stroke="#000" stroke-width="1.3" fill="none"/><path d="M405,47 L412,48 L409,50 L415,55 L413,57 L407,52 L405,54 Z" fill="#ee0000"/><g stroke="#3a3a3a" stroke-width="2" fill="none"><path d="M448.5,45.5 C445,50 444,58 447,64 C449,67 451,68.5 452.5,68"/><path d="M439,56 C441,53 450,52.5 457,55 C460,56.5 461.5,58 461,59.5"/></g><path d="M441,57 C442,60 446,61.5 449,61.5" stroke="#ee0000" stroke-width="2.8" fill="none"/><path d="M445,56 L452.8,62.3 L443.5,64.5 Z" fill="#ee0000"/><path d="M455.5,52 C457,57 456.5,63 452,67.5" stroke="#ee0000" stroke-width="2.4" fill="none"/><path d="M452.4,46 L459.5,52.5 L450,53.5 Z" fill="#ee0000"/><path d="M469.8,63.6 C472,61 474,56 475,51.4 C476,49 477.5,48.5 478.5,49.5 L480.5,47.5 C481.5,46.3 483,46.3 483.5,47.5 L485.5,46.3 C486.5,45.5 488,45.8 488,47 L489.5,47.3 C491,47.3 491.5,48.5 490.8,49.8 L487,56.5 C489,58 491.5,59 491.9,60.8 C490,62 486.5,61.5 485,61.5 C482,64 479,66.5 475.9,67.3 Z" fill="#fff" stroke="#222" stroke-width="0.9" stroke-linejoin="round"/><path d="M478.5,49.5 L477,54 M481.5,47.5 L479.5,53 M485,47 L482.5,53 M488.5,47.5 L485.5,53.5" stroke="#222" stroke-width="1" fill="none"/><path d="M513,61 L521,68" stroke="#bbb" stroke-width="3"/><path d="M512,59 L520,66.5" stroke="#222" stroke-width="3.2" stroke-linecap="round"/><circle cx="508" cy="52.5" r="6.3" fill="#9cc0e0" stroke="#2a2a2a" stroke-width="2"/><circle cx="507" cy="51" r="2.5" fill="#c8e0f4"/><path d="M544,60 L551,66.5" stroke="#222" stroke-width="3" stroke-linecap="round"/><circle cx="541" cy="54.5" r="5.8" fill="#9cc0e0" stroke="#2a2a2a" stroke-width="2"/><g fill="#ee0000"><path d="M532,45 L538,46 L534,50 Z"/><path d="M551,45 L550,51 L546,47 Z"/><path d="M531,62 L532,56 L536,60 Z"/><path d="M552,62 L547,60 L551,56 Z"/></g><circle cx="579.5" cy="56.5" r="11.2" fill="#06142a"/><circle cx="579.5" cy="56.5" r="10" fill="#0e3060"/><ellipse cx="576.0" cy="56.0" rx="6" ry="3.5" fill="#3a86d0" transform="rotate(15 576.0 56.0)"/><path d="M571.5,61.0 C575.5,62.5 581.5,63.0 585.5,61.5" stroke="#e8f0f8" stroke-width="2" fill="none"/><path d="M576.5,47.5 C580.5,47.0 584.5,48.5 586.5,50.5" stroke="#a8c8e8" stroke-width="1.2" fill="none"/><path d="M570.5,50 C575,47 581,47 584,51 L586.5,49 L588,59 L578.5,58 L581,55.5 C578.5,53 574.5,53 571.5,55 Z" fill="#f8e000" stroke="#302800" stroke-width="0.7"/><path d="M600,45 L619,49 L622,58 L603,66.5 Z" fill="#dcdcdc" stroke="#9c9c9c" stroke-width="1.1"/><path d="M600.5,57 L603,66.5 L616,66 Z" fill="#c8c8c8"/><path d="M618.5,62 L620,62 L620,65 L617,65" stroke="#999" stroke-width="1" fill="none"/><circle cx="641.5" cy="56.5" r="11.2" fill="#06142a"/><circle cx="641.5" cy="56.5" r="10" fill="#0e3060"/><ellipse cx="638.0" cy="56.0" rx="6" ry="3.5" fill="#3a86d0" transform="rotate(15 638.0 56.0)"/><path d="M633.5,61.0 C637.5,62.5 643.5,63.0 647.5,61.5" stroke="#e8f0f8" stroke-width="2" fill="none"/><path d="M638.5,47.5 C642.5,47.0 646.5,48.5 648.5,50.5" stroke="#a8c8e8" stroke-width="1.2" fill="none"/><path d="M651,48 C647,46 641,47 638.5,52.5 L636,50.5 L634.5,60 L644,58.5 L641,56 C643,53 647,52 650,53 Z" fill="#f47a20" stroke="#402000" stroke-width="0.7"/><path d="M670,53 L679,50 L688,53 L688,64 L679,69 L670,64 Z" fill="#5a4a32"/><path d="M670,53 L679,56 L679,69 L670,64 Z" fill="#a89070"/><path d="M679,56 L688,53 L688,64 L679,69 Z" fill="#bca480"/><path d="M670,53 L667,47 L676,45 L679,50 Z" fill="#c8b08a" stroke="#4a3a28" stroke-width="0.6"/><path d="M679,50 L683,44 L690,47 L688,53 Z" fill="#c8b08a" stroke="#4a3a28" stroke-width="0.6"/><path d="M701,53 L710,50 L719,53 L719,64 L710,69 L701,64 Z" fill="#5a4a32"/><path d="M701,53 L710,56 L710,69 L701,64 Z" fill="#a89070"/><path d="M710,56 L719,53 L719,64 L710,69 Z" fill="#bca480"/><path d="M701,53 L698,47 L707,45 L710,50 Z" fill="#c8b08a" stroke="#4a3a28" stroke-width="0.6"/><path d="M710,50 L714,44 L721,47 L719,53 Z" fill="#c8b08a" stroke="#4a3a28" stroke-width="0.6"/><path d="M679,58 L686,61 L686,58 L691,65 L683,68 L684,65 L677,62 Z" fill="#f4e400" stroke="#6a6000" stroke-width="0.6"/><path d="M720,45 C714,44 710,49 710,56 L707,55 L710,63 L715,56 L712,56 C713,51 716,49 720,49 Z" fill="#f08a30" stroke="#7a4000" stroke-width="0.6"/></svg></body></html>
